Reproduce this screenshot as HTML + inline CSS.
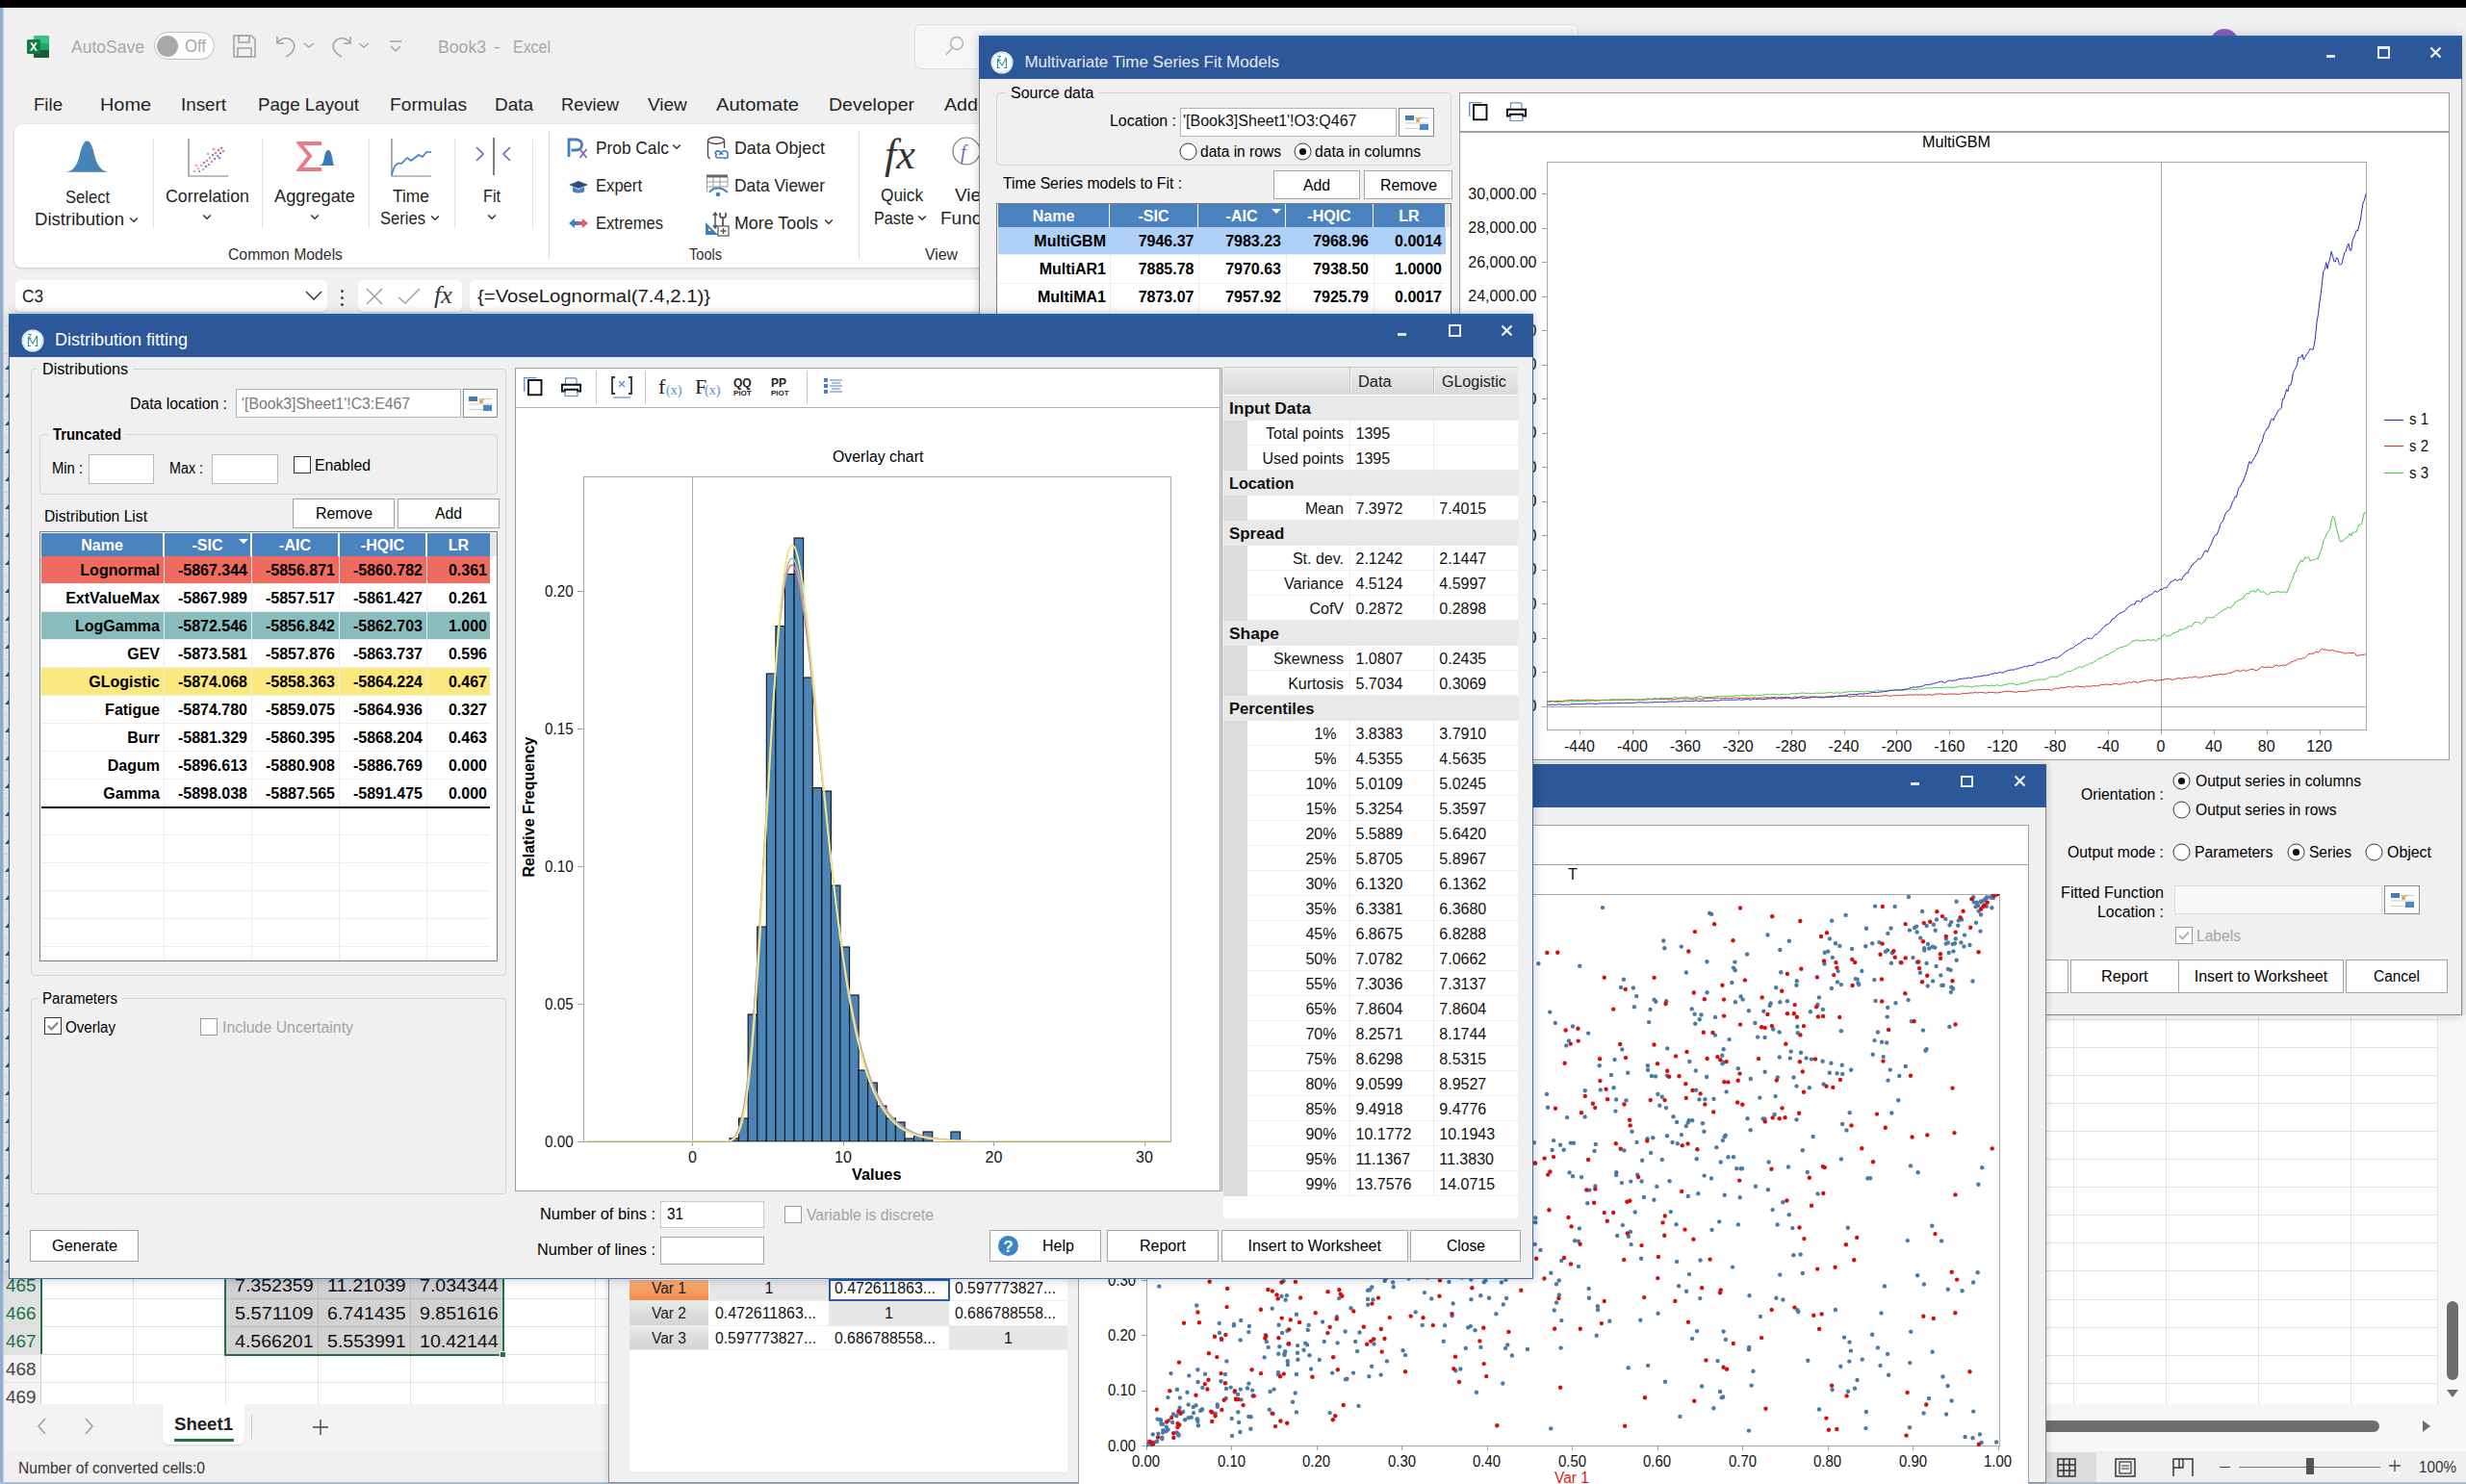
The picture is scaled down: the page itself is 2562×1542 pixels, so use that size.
<!DOCTYPE html><html><head><meta charset="utf-8"><title>page</title><style>
html,body{margin:0;padding:0;}
body{width:2562px;height:1542px;position:relative;overflow:hidden;background:#f0f0f0;font-family:"Liberation Sans",sans-serif;}
div,svg{position:absolute;}
</style></head><body>
<div style="left:0px;top:0px;width:2562px;height:8px;background:#000;"></div>
<div style="left:0px;top:8px;width:3px;height:1534px;background:#8db0d4;"></div>
<div style="left:3px;top:8px;width:1px;height:1534px;background:#c9ced4;"></div>
<div style="left:0px;top:1540px;width:2562px;height:2px;background:#a9bfd6;"></div>
<svg style="left:27px;top:36px;" width="25" height="25" viewBox="0 0 25 25"><rect x="8" y="1" width="16" height="23" rx="2" fill="#21a366"/>
<rect x="8" y="1" width="16" height="8" rx="1" fill="#33c481"/>
<rect x="8" y="16" width="16" height="8" rx="1" fill="#185c37"/>
<rect x="1" y="5" width="14" height="15" rx="1.5" fill="#107c41"/>
<path d="M4.2 8.2 L7 12.5 L4 16.8 H6.2 L8 13.9 L9.8 16.8 H12 L9 12.5 L11.8 8.2 H9.7 L8 11 L6.3 8.2 Z" fill="#fff"/></svg>
<div style="left:74.00px;top:37.82px;font-size:19px;line-height:22.80px;color:#a8a8a8;white-space:pre;transform:scaleX(0.9224);transform-origin:0 0;">AutoSave</div>
<div style="left:160px;top:33px;width:63px;height:29px;background:#fff;border:1.5px solid #bdbdbd;box-sizing:border-box;border-radius:15px;"></div>
<div style="left:163px;top:37px;width:22px;height:22px;border-radius:11px;background:#a8a8a8;"></div>
<div style="left:192.00px;top:38.41px;font-size:18px;line-height:21.60px;color:#a8a8a8;white-space:pre;transform:scaleX(0.9291);transform-origin:0 0;">Off</div>
<svg style="left:240px;top:34px;" width="28" height="28" viewBox="0 0 28 28"><path d="M3 3 H21 L25 7 V25 H3 Z" fill="none" stroke="#a5a5a5" stroke-width="1.6"/>
<rect x="8" y="3" width="11" height="7" fill="none" stroke="#a5a5a5" stroke-width="1.6"/>
<rect x="7" y="16" width="14" height="9" fill="none" stroke="#a5a5a5" stroke-width="1.6"/></svg>
<svg style="left:283px;top:34px;" width="28" height="28" viewBox="0 0 28 28"><path d="M5 4 V11 H12" fill="none" stroke="#a5a5a5" stroke-width="1.6"/>
<path d="M5.5 10.5 C9 5 17 4 21 9 C25 14 22 21 14 25" fill="none" stroke="#a5a5a5" stroke-width="1.6"/></svg>
<svg style="left:314px;top:42px;" width="14" height="10" viewBox="0 0 14 10"><path d="M2 3 L7 7 L12 3" fill="none" stroke="#a5a5a5" stroke-width="1.5"/></svg>
<svg style="left:341px;top:34px;" width="28" height="28" viewBox="0 0 28 28"><path d="M23 4 V11 H16" fill="none" stroke="#a5a5a5" stroke-width="1.6"/>
<path d="M22.5 10.5 C19 5 11 4 7 9 C3 14 6 21 14 25" fill="none" stroke="#a5a5a5" stroke-width="1.6"/></svg>
<svg style="left:371px;top:42px;" width="14" height="10" viewBox="0 0 14 10"><path d="M2 3 L7 7 L12 3" fill="none" stroke="#a5a5a5" stroke-width="1.5"/></svg>
<svg style="left:403px;top:41px;" width="16" height="14" viewBox="0 0 16 14"><path d="M2 2 H14" stroke="#a5a5a5" stroke-width="1.5"/><path d="M3 7 L8 12 L13 7" fill="none" stroke="#a5a5a5" stroke-width="1.5"/></svg>
<div style="left:455.00px;top:37.82px;font-size:19px;line-height:22.80px;color:#a8a8a8;white-space:pre;transform:scaleX(0.9281);transform-origin:0 0;">Book3</div>
<div style="left:513.00px;top:37.82px;font-size:19px;line-height:22.80px;color:#a8a8a8;white-space:pre;transform:scaleX(1.1064);transform-origin:0 0;">-</div>
<div style="left:533.00px;top:37.82px;font-size:19px;line-height:22.80px;color:#a8a8a8;white-space:pre;transform:scaleX(0.8394);transform-origin:0 0;">Excel</div>
<div style="left:950px;top:25px;width:690px;height:47px;background:#f6f6f6;border:1px solid #dedede;box-sizing:border-box;border-radius:7px;"></div>
<svg style="left:980px;top:36px;" width="24" height="24" viewBox="0 0 24 24"><circle cx="14" cy="9" r="6.5" fill="none" stroke="#b0b0b0" stroke-width="1.4"/><path d="M9.5 13.5 L3 21" stroke="#b0b0b0" stroke-width="1.4"/></svg>
<div style="left:2296px;top:30px;width:30px;height:30px;border-radius:15px;background:#8e5dbd;"></div>
<div style="left:35.00px;top:97.82px;font-size:19px;line-height:22.80px;color:#242424;white-space:pre;transform:scaleX(0.9798);transform-origin:0 0;">File</div>
<div style="left:104.00px;top:97.82px;font-size:19px;line-height:22.80px;color:#242424;white-space:pre;transform:scaleX(1.0457);transform-origin:0 0;">Home</div>
<div style="left:188.00px;top:97.82px;font-size:19px;line-height:22.80px;color:#242424;white-space:pre;transform:scaleX(0.9891);transform-origin:0 0;">Insert</div>
<div style="left:268.00px;top:97.82px;font-size:19px;line-height:22.80px;color:#242424;white-space:pre;transform:scaleX(0.9841);transform-origin:0 0;">Page Layout</div>
<div style="left:405.00px;top:97.82px;font-size:19px;line-height:22.80px;color:#242424;white-space:pre;transform:scaleX(1.0103);transform-origin:0 0;">Formulas</div>
<div style="left:514.00px;top:97.82px;font-size:19px;line-height:22.80px;color:#242424;white-space:pre;">Data</div>
<div style="left:583.00px;top:97.82px;font-size:19px;line-height:22.80px;color:#242424;white-space:pre;transform:scaleX(0.9631);transform-origin:0 0;">Review</div>
<div style="left:673.00px;top:97.82px;font-size:19px;line-height:22.80px;color:#242424;white-space:pre;">View</div>
<div style="left:744.00px;top:97.82px;font-size:19px;line-height:22.80px;color:#242424;white-space:pre;transform:scaleX(1.0575);transform-origin:0 0;">Automate</div>
<div style="left:861.00px;top:97.82px;font-size:19px;line-height:22.80px;color:#242424;white-space:pre;transform:scaleX(1.0276);transform-origin:0 0;">Developer</div>
<div style="left:981.00px;top:97.82px;font-size:19px;line-height:22.80px;color:#242424;white-space:pre;transform:scaleX(1.0353);transform-origin:0 0;">Add</div>
<div style="left:15px;top:129px;width:1100px;height:149px;background:#fff;border-radius:8px;box-shadow:0 1px 3px rgba(0,0,0,0.18);"></div>
<svg style="left:68px;top:145px;" width="46" height="35" viewBox="0 0 46 35"><path d="M0.5 33.7 C7 33 11 29 14 19 C16.5 9 18.5 1.5 22.5 1.5 C26.5 1.5 28.5 9 31 19 C34 29 38 33 45.5 33.7 Z" fill="#4683b8"/></svg>
<div style="left:68.00px;top:193.82px;font-size:19px;line-height:22.80px;color:#242424;white-space:pre;transform:scaleX(0.8711);transform-origin:0 0;">Select</div>
<div style="left:36.00px;top:216.82px;font-size:19px;line-height:22.80px;color:#242424;white-space:pre;transform:scaleX(0.9785);transform-origin:0 0;">Distribution</div>
<svg style="left:134px;top:224.5px;" width="10" height="7" viewBox="0 0 10 7"><path d="M1.2 1.5 L5 5.2 L8.8 1.5" fill="none" stroke="#333" stroke-width="1.6"/></svg>
<div style="left:159px;top:145px;width:1px;height:92px;background:#e1e1e1;"></div>
<svg style="left:194px;top:142px;" width="46" height="44" viewBox="0 0 46 44"><path d="M2 2 V41 H43" fill="none" stroke="#7a7a7a" stroke-width="1.2"/><circle cx="8" cy="36" r="1.3" fill="#e8a0a0"/><circle cx="12" cy="33" r="1.3" fill="#f0b080"/><circle cx="15" cy="30" r="1.3" fill="#9ab8e0"/><circle cx="18" cy="27" r="1.3" fill="#e07070"/><circle cx="21" cy="25" r="1.3" fill="#80a8d8"/><circle cx="24" cy="22" r="1.3" fill="#e89090"/><circle cx="27" cy="19" r="1.3" fill="#7098d0"/><circle cx="30" cy="17" r="1.3" fill="#e07a7a"/><circle cx="33" cy="14" r="1.3" fill="#6a90c8"/><circle cx="36" cy="12" r="1.3" fill="#d87070"/><circle cx="13" cy="36" r="1.3" fill="#80a0d0"/><circle cx="17" cy="34" r="1.3" fill="#e89a9a"/><circle cx="20" cy="31" r="1.3" fill="#6c94cc"/><circle cx="23" cy="29" r="1.3" fill="#e08080"/><circle cx="26" cy="26" r="1.3" fill="#8ab0dc"/><circle cx="29" cy="23" r="1.3" fill="#e07070"/><circle cx="32" cy="20" r="1.3" fill="#7aa0d4"/><circle cx="35" cy="17" r="1.3" fill="#d86060"/><circle cx="38" cy="15" r="1.3" fill="#80a8d8"/><circle cx="10" cy="30" r="1.3" fill="#f0a0a0"/><circle cx="22" cy="18" r="1.3" fill="#9ab8e0"/><circle cx="28" cy="13" r="1.3" fill="#e09090"/><circle cx="34" cy="22" r="1.3" fill="#6a94c8"/></svg>
<div style="left:172.00px;top:192.82px;font-size:19px;line-height:22.80px;color:#242424;white-space:pre;transform:scaleX(0.9362);transform-origin:0 0;">Correlation</div>
<svg style="left:210px;top:221.5px;" width="10" height="7" viewBox="0 0 10 7"><path d="M1.2 1.5 L5 5.2 L8.8 1.5" fill="none" stroke="#333" stroke-width="1.6"/></svg>
<div style="left:272px;top:145px;width:1px;height:92px;background:#e1e1e1;"></div>
<svg style="left:308px;top:146px;" width="40" height="34" viewBox="0 0 40 34"><path d="M26 3 H3 L14 16 L3 30 H26" fill="none" stroke="#e57d86" stroke-width="4"/><path d="M22 26 C28 26 28 22 29 17 C30 12 31 10 33 10 C35 10 36 12 37 17 C38 22 38 26 40 26 Z" fill="#3a7ab8"/></svg>
<div style="left:285.00px;top:192.82px;font-size:19px;line-height:22.80px;color:#242424;white-space:pre;transform:scaleX(0.9580);transform-origin:0 0;">Aggregate</div>
<svg style="left:322px;top:221.5px;" width="10" height="7" viewBox="0 0 10 7"><path d="M1.2 1.5 L5 5.2 L8.8 1.5" fill="none" stroke="#333" stroke-width="1.6"/></svg>
<div style="left:383px;top:145px;width:1px;height:92px;background:#e1e1e1;"></div>
<svg style="left:405px;top:142px;" width="46" height="44" viewBox="0 0 46 44"><path d="M2 2 V41 H43" fill="none" stroke="#7a7a7a" stroke-width="1.2"/><path d="M2 40 C4 30 8 26 12 28 L18 22 L22 25 L30 19 L34 21 L38 16 L43 16" fill="none" stroke="#3f7fbf" stroke-width="1.6"/></svg>
<div style="left:408.00px;top:192.82px;font-size:19px;line-height:22.80px;color:#242424;white-space:pre;transform:scaleX(0.9153);transform-origin:0 0;">Time</div>
<div style="left:395.00px;top:215.82px;font-size:19px;line-height:22.80px;color:#242424;white-space:pre;transform:scaleX(0.8727);transform-origin:0 0;">Series</div>
<svg style="left:446.5px;top:223.1px;" width="10" height="7" viewBox="0 0 10 7"><path d="M1.2 1.5 L5 5.2 L8.8 1.5" fill="none" stroke="#333" stroke-width="1.6"/></svg>
<div style="left:472px;top:145px;width:1px;height:92px;background:#e1e1e1;"></div>
<svg style="left:492px;top:141px;" width="42" height="44" viewBox="0 0 42 44"><path d="M3 12 L10 19 L3 26" fill="none" stroke="#7b5cb8" stroke-width="1.6"/><path d="M21 2 V41" stroke="#4a4a4a" stroke-width="1.4"/><path d="M38 12 L31 19 L38 26" fill="none" stroke="#7b5cb8" stroke-width="1.6"/></svg>
<div style="left:502.00px;top:192.82px;font-size:19px;line-height:22.80px;color:#242424;white-space:pre;transform:scaleX(0.8528);transform-origin:0 0;">Fit</div>
<svg style="left:506px;top:221.5px;" width="10" height="7" viewBox="0 0 10 7"><path d="M1.2 1.5 L5 5.2 L8.8 1.5" fill="none" stroke="#333" stroke-width="1.6"/></svg>
<div style="left:553px;top:145px;width:1px;height:92px;background:#e1e1e1;"></div>
<div style="left:570px;top:136px;width:1px;height:133px;background:#dcdcdc;"></div>
<div style="left:237.00px;top:254.58px;font-size:16px;line-height:19.20px;color:#303030;white-space:pre;transform:scaleX(0.9840);transform-origin:0 0;">Common Models</div>
<svg style="left:588px;top:142px;" width="26" height="24" viewBox="0 0 26 24"><path d="M3 21 V3 H10 C15 3 16.5 6 16.5 8.5 C16.5 11 15 14 10 14 H5.5" fill="none" stroke="#3f7fbf" stroke-width="2.8"/><path d="M14.5 13 L21.5 22 M21.5 13 L14.5 22" stroke="#8a5cc0" stroke-width="1.8"/></svg>
<div style="left:619.00px;top:142.82px;font-size:19px;line-height:22.80px;color:#242424;white-space:pre;transform:scaleX(0.9110);transform-origin:0 0;">Prob Calc</div>
<svg style="left:697.5px;top:148.5px;" width="10" height="7" viewBox="0 0 10 7"><path d="M1.2 1.5 L5 5.2 L8.8 1.5" fill="none" stroke="#333" stroke-width="1.6"/></svg>
<svg style="left:589px;top:186px;" width="24" height="16" viewBox="0 0 24 16"><path d="M2 6 L12 2 L22 6 L12 10 Z" fill="#2f4f7f"/><path d="M6 8 V13 C9 15 15 15 18 13 V8 L12 11 Z" fill="#4a7fc0"/></svg>
<div style="left:619.00px;top:181.82px;font-size:19px;line-height:22.80px;color:#242424;white-space:pre;transform:scaleX(0.8741);transform-origin:0 0;">Expert</div>
<svg style="left:589px;top:224px;" width="24" height="16" viewBox="0 0 24 16"><path d="M2 8 L8 3 V6 H12 V10 H8 V13 Z" fill="#3f7fbf"/><path d="M22 8 L16 3 V6 H12 V10 H16 V13 Z" fill="#e05a6a"/></svg>
<div style="left:619.00px;top:220.82px;font-size:19px;line-height:22.80px;color:#242424;white-space:pre;transform:scaleX(0.8724);transform-origin:0 0;">Extremes</div>
<svg style="left:734px;top:141px;" width="25" height="26" viewBox="0 0 25 26"><ellipse cx="10" cy="5" rx="8.5" ry="3.5" fill="none" stroke="#444" stroke-width="1.3"/><path d="M1.5 5 V21 C1.5 22 2 23 4 23.5 M18.5 5 V13" fill="none" stroke="#444" stroke-width="1.3"/><path d="M9 19 C9 15 14 15 15 18 C17 14 23 16 22 20 C23 23 20 24 18 23 H12 C9 23 9 20 11 19" fill="none" stroke="#3f7fbf" stroke-width="1.6"/><path d="M13 20 C14 18 17 18 17 20" fill="none" stroke="#3f7fbf" stroke-width="1.4"/></svg>
<div style="left:763.00px;top:142.82px;font-size:19px;line-height:22.80px;color:#242424;white-space:pre;transform:scaleX(0.9370);transform-origin:0 0;">Data Object</div>
<svg style="left:733px;top:180px;" width="25" height="26" viewBox="0 0 25 26"><rect x="1" y="1.5" width="22" height="3" fill="#666"/><path d="M1.5 4 V19 M23 4 V14 M1.5 9 H23 M1.5 14 H23 M8 4 V16 M15 4 V16" fill="none" stroke="#999" stroke-width="1"/><path d="M4 20 C8 14 17 14 23 20" fill="none" stroke="#3f7fbf" stroke-width="1.8"/><circle cx="13" cy="22" r="2.3" fill="#3f7fbf"/></svg>
<div style="left:763.00px;top:181.82px;font-size:19px;line-height:22.80px;color:#242424;white-space:pre;transform:scaleX(0.9113);transform-origin:0 0;">Data Viewer</div>
<svg style="left:731px;top:218px;" width="28" height="28" viewBox="0 0 28 28"><path d="M2 26 V13 L15 26 Z" fill="#3f7fbf"/><path d="M5 22 V19 L8 22 Z" fill="#fff"/><path d="M12 3 V19 M10 6 L12 3 L14 6 M10 16 L12 19 L14 16" fill="none" stroke="#555" stroke-width="1.5"/><path d="M20 9 V17 M17 3 V6 C17 9 23 9 23 6 V3" fill="none" stroke="#555" stroke-width="1.8"/><rect x="15" y="17" width="11" height="10" fill="#fff" stroke="#555" stroke-width="1.2"/><path d="M20.5 19 V25 M17.5 22 H23.5" stroke="#555" stroke-width="1.5"/></svg>
<div style="left:763.00px;top:220.82px;font-size:19px;line-height:22.80px;color:#242424;white-space:pre;transform:scaleX(0.9397);transform-origin:0 0;">More Tools</div>
<svg style="left:855.5px;top:226.5px;" width="10" height="7" viewBox="0 0 10 7"><path d="M1.2 1.5 L5 5.2 L8.8 1.5" fill="none" stroke="#333" stroke-width="1.6"/></svg>
<div style="left:716.00px;top:254.58px;font-size:16px;line-height:19.20px;color:#303030;white-space:pre;transform:scaleX(0.9103);transform-origin:0 0;">Tools</div>
<div style="left:892px;top:136px;width:1px;height:133px;background:#dcdcdc;"></div>
<div style="left:919px;top:136px;font-family:'Liberation Serif';font-style:italic;font-size:44px;line-height:50px;color:#333;">fx</div>
<div style="left:915.00px;top:191.82px;font-size:19px;line-height:22.80px;color:#242424;white-space:pre;transform:scaleX(0.9060);transform-origin:0 0;">Quick</div>
<div style="left:908.00px;top:215.82px;font-size:19px;line-height:22.80px;color:#242424;white-space:pre;transform:scaleX(0.8542);transform-origin:0 0;">Paste</div>
<svg style="left:953px;top:222.5px;" width="10" height="7" viewBox="0 0 10 7"><path d="M1.2 1.5 L5 5.2 L8.8 1.5" fill="none" stroke="#333" stroke-width="1.6"/></svg>
<svg style="left:988px;top:141px;" width="32" height="36" viewBox="0 0 32 36"><circle cx="16" cy="16" r="14" fill="#fff" stroke="#777" stroke-width="1.2"/><text x="10" y="24" font-family="Liberation Serif" font-style="italic" font-size="20" fill="#7a5cc0">f</text></svg>
<div style="left:992.00px;top:191.82px;font-size:19px;line-height:22.80px;color:#242424;white-space:pre;">View</div>
<div style="left:977.00px;top:215.82px;font-size:19px;line-height:22.80px;color:#242424;white-space:pre;">Function</div>
<div style="left:961.00px;top:254.58px;font-size:16px;line-height:19.20px;color:#303030;white-space:pre;transform:scaleX(0.9886);transform-origin:0 0;">View</div>
<div style="left:16px;top:291px;width:324px;height:33px;background:#fff;border-radius:5px;box-shadow:0 1px 1px rgba(0,0,0,0.15);"></div>
<div style="left:23.00px;top:296.82px;font-size:19px;line-height:22.80px;color:#1a1a1a;white-space:pre;transform:scaleX(0.9058);transform-origin:0 0;">C3</div>
<svg style="left:316px;top:300px;" width="20" height="14" viewBox="0 0 20 14"><path d="M2 3 L10 11 L18 3" fill="none" stroke="#444" stroke-width="1.6"/></svg>
<div style="left:354px;top:301px;width:3px;height:3px;border-radius:2px;background:#444;"></div>
<div style="left:354px;top:308px;width:3px;height:3px;border-radius:2px;background:#444;"></div>
<div style="left:354px;top:315px;width:3px;height:3px;border-radius:2px;background:#444;"></div>
<div style="left:372px;top:291px;width:108px;height:33px;background:#fff;border-radius:5px;box-shadow:0 1px 1px rgba(0,0,0,0.15);"></div>
<svg style="left:379px;top:298px;" width="22" height="20" viewBox="0 0 22 20"><path d="M2 2 L18 18 M18 2 L2 18" stroke="#a0a0a0" stroke-width="1.5"/></svg>
<svg style="left:412px;top:298px;" width="26" height="20" viewBox="0 0 26 20"><path d="M2 11 L9 17 L24 2" fill="none" stroke="#a0a0a0" stroke-width="1.5"/></svg>
<div style="left:451px;top:291px;font-family:'Liberation Serif';font-style:italic;font-size:26px;line-height:32px;color:#333;">fx</div>
<div style="left:488px;top:291px;width:1100px;height:33px;background:#fff;border-radius:5px;box-shadow:0 1px 1px rgba(0,0,0,0.15);"></div>
<div style="left:496.00px;top:296.82px;font-size:19px;line-height:22.80px;color:#1a1a1a;white-space:pre;transform:scaleX(1.0681);transform-origin:0 0;">{=VoseLognormal(7.4,2.1)}</div>
<div style="left:4px;top:330px;width:628px;height:1129px;background:#fff;"></div>
<div style="left:4px;top:330px;width:38px;height:1129px;background:#f3f3f3;"></div>
<div style="left:4px;top:338px;width:628px;height:1px;background:#e1e1e1;"></div>
<div style="left:4px;top:367px;width:628px;height:1px;background:#e1e1e1;"></div>
<div style="left:4px;top:396px;width:628px;height:1px;background:#e1e1e1;"></div>
<div style="left:4px;top:425px;width:628px;height:1px;background:#e1e1e1;"></div>
<div style="left:4px;top:454px;width:628px;height:1px;background:#e1e1e1;"></div>
<div style="left:4px;top:482px;width:628px;height:1px;background:#e1e1e1;"></div>
<div style="left:4px;top:511px;width:628px;height:1px;background:#e1e1e1;"></div>
<div style="left:4px;top:540px;width:628px;height:1px;background:#e1e1e1;"></div>
<div style="left:4px;top:569px;width:628px;height:1px;background:#e1e1e1;"></div>
<div style="left:4px;top:598px;width:628px;height:1px;background:#e1e1e1;"></div>
<div style="left:4px;top:627px;width:628px;height:1px;background:#e1e1e1;"></div>
<div style="left:4px;top:656px;width:628px;height:1px;background:#e1e1e1;"></div>
<div style="left:4px;top:685px;width:628px;height:1px;background:#e1e1e1;"></div>
<div style="left:4px;top:714px;width:628px;height:1px;background:#e1e1e1;"></div>
<div style="left:4px;top:742px;width:628px;height:1px;background:#e1e1e1;"></div>
<div style="left:4px;top:771px;width:628px;height:1px;background:#e1e1e1;"></div>
<div style="left:4px;top:800px;width:628px;height:1px;background:#e1e1e1;"></div>
<div style="left:4px;top:829px;width:628px;height:1px;background:#e1e1e1;"></div>
<div style="left:4px;top:858px;width:628px;height:1px;background:#e1e1e1;"></div>
<div style="left:4px;top:887px;width:628px;height:1px;background:#e1e1e1;"></div>
<div style="left:4px;top:916px;width:628px;height:1px;background:#e1e1e1;"></div>
<div style="left:4px;top:945px;width:628px;height:1px;background:#e1e1e1;"></div>
<div style="left:4px;top:974px;width:628px;height:1px;background:#e1e1e1;"></div>
<div style="left:4px;top:1003px;width:628px;height:1px;background:#e1e1e1;"></div>
<div style="left:4px;top:1032px;width:628px;height:1px;background:#e1e1e1;"></div>
<div style="left:4px;top:1060px;width:628px;height:1px;background:#e1e1e1;"></div>
<div style="left:4px;top:1089px;width:628px;height:1px;background:#e1e1e1;"></div>
<div style="left:4px;top:1118px;width:628px;height:1px;background:#e1e1e1;"></div>
<div style="left:4px;top:1147px;width:628px;height:1px;background:#e1e1e1;"></div>
<div style="left:4px;top:1176px;width:628px;height:1px;background:#e1e1e1;"></div>
<div style="left:4px;top:1205px;width:628px;height:1px;background:#e1e1e1;"></div>
<div style="left:4px;top:1234px;width:628px;height:1px;background:#e1e1e1;"></div>
<div style="left:4px;top:1263px;width:628px;height:1px;background:#e1e1e1;"></div>
<div style="left:4px;top:1292px;width:628px;height:1px;background:#e1e1e1;"></div>
<div style="left:4px;top:1320px;width:628px;height:1px;background:#e1e1e1;"></div>
<div style="left:4px;top:1349px;width:628px;height:1px;background:#e1e1e1;"></div>
<div style="left:4px;top:1378px;width:628px;height:1px;background:#e1e1e1;"></div>
<div style="left:4px;top:1407px;width:628px;height:1px;background:#e1e1e1;"></div>
<div style="left:4px;top:1436px;width:628px;height:1px;background:#e1e1e1;"></div>
<div style="left:138px;top:330px;width:1px;height:1129px;background:#e1e1e1;"></div>
<div style="left:234px;top:330px;width:1px;height:1129px;background:#e1e1e1;"></div>
<div style="left:330px;top:330px;width:1px;height:1129px;background:#e1e1e1;"></div>
<div style="left:426px;top:330px;width:1px;height:1129px;background:#e1e1e1;"></div>
<div style="left:522px;top:330px;width:1px;height:1129px;background:#e1e1e1;"></div>
<div style="left:618px;top:330px;width:1px;height:1129px;background:#e1e1e1;"></div>
<div style="left:42px;top:330px;width:1px;height:1129px;background:#d0d0d0;"></div>
<svg style="left:5px;top:377.6px;" width="5" height="6" viewBox="0 0 5 6"><path d="M5 0 V6 H0 Z" fill="#2b5a8a"/></svg>
<svg style="left:5px;top:406.6px;" width="5" height="6" viewBox="0 0 5 6"><path d="M5 0 V6 H0 Z" fill="#2b5a8a"/></svg>
<svg style="left:5px;top:435.6px;" width="5" height="6" viewBox="0 0 5 6"><path d="M5 0 V6 H0 Z" fill="#2b5a8a"/></svg>
<svg style="left:5px;top:464.6px;" width="5" height="6" viewBox="0 0 5 6"><path d="M5 0 V6 H0 Z" fill="#2b5a8a"/></svg>
<svg style="left:5px;top:493.6px;" width="5" height="6" viewBox="0 0 5 6"><path d="M5 0 V6 H0 Z" fill="#2b5a8a"/></svg>
<svg style="left:5px;top:522.6px;" width="5" height="6" viewBox="0 0 5 6"><path d="M5 0 V6 H0 Z" fill="#2b5a8a"/></svg>
<svg style="left:5px;top:551.6px;" width="5" height="6" viewBox="0 0 5 6"><path d="M5 0 V6 H0 Z" fill="#2b5a8a"/></svg>
<svg style="left:5px;top:580.6px;" width="5" height="6" viewBox="0 0 5 6"><path d="M5 0 V6 H0 Z" fill="#2b5a8a"/></svg>
<svg style="left:5px;top:609.6px;" width="5" height="6" viewBox="0 0 5 6"><path d="M5 0 V6 H0 Z" fill="#2b5a8a"/></svg>
<svg style="left:5px;top:638.6px;" width="5" height="6" viewBox="0 0 5 6"><path d="M5 0 V6 H0 Z" fill="#2b5a8a"/></svg>
<svg style="left:5px;top:667.6px;" width="5" height="6" viewBox="0 0 5 6"><path d="M5 0 V6 H0 Z" fill="#2b5a8a"/></svg>
<svg style="left:5px;top:696.6px;" width="5" height="6" viewBox="0 0 5 6"><path d="M5 0 V6 H0 Z" fill="#2b5a8a"/></svg>
<svg style="left:5px;top:725.6px;" width="5" height="6" viewBox="0 0 5 6"><path d="M5 0 V6 H0 Z" fill="#2b5a8a"/></svg>
<svg style="left:5px;top:754.6px;" width="5" height="6" viewBox="0 0 5 6"><path d="M5 0 V6 H0 Z" fill="#2b5a8a"/></svg>
<svg style="left:5px;top:783.6px;" width="5" height="6" viewBox="0 0 5 6"><path d="M5 0 V6 H0 Z" fill="#2b5a8a"/></svg>
<svg style="left:5px;top:812.6px;" width="5" height="6" viewBox="0 0 5 6"><path d="M5 0 V6 H0 Z" fill="#2b5a8a"/></svg>
<svg style="left:5px;top:841.6px;" width="5" height="6" viewBox="0 0 5 6"><path d="M5 0 V6 H0 Z" fill="#2b5a8a"/></svg>
<svg style="left:5px;top:870.6px;" width="5" height="6" viewBox="0 0 5 6"><path d="M5 0 V6 H0 Z" fill="#2b5a8a"/></svg>
<svg style="left:5px;top:899.6px;" width="5" height="6" viewBox="0 0 5 6"><path d="M5 0 V6 H0 Z" fill="#2b5a8a"/></svg>
<svg style="left:5px;top:928.6px;" width="5" height="6" viewBox="0 0 5 6"><path d="M5 0 V6 H0 Z" fill="#2b5a8a"/></svg>
<svg style="left:5px;top:957.6px;" width="5" height="6" viewBox="0 0 5 6"><path d="M5 0 V6 H0 Z" fill="#2b5a8a"/></svg>
<svg style="left:5px;top:986.6px;" width="5" height="6" viewBox="0 0 5 6"><path d="M5 0 V6 H0 Z" fill="#2b5a8a"/></svg>
<svg style="left:5px;top:1015.6px;" width="5" height="6" viewBox="0 0 5 6"><path d="M5 0 V6 H0 Z" fill="#2b5a8a"/></svg>
<svg style="left:5px;top:1044.6px;" width="5" height="6" viewBox="0 0 5 6"><path d="M5 0 V6 H0 Z" fill="#2b5a8a"/></svg>
<svg style="left:5px;top:1073.6px;" width="5" height="6" viewBox="0 0 5 6"><path d="M5 0 V6 H0 Z" fill="#2b5a8a"/></svg>
<svg style="left:5px;top:1102.6px;" width="5" height="6" viewBox="0 0 5 6"><path d="M5 0 V6 H0 Z" fill="#2b5a8a"/></svg>
<svg style="left:5px;top:1131.6px;" width="5" height="6" viewBox="0 0 5 6"><path d="M5 0 V6 H0 Z" fill="#2b5a8a"/></svg>
<svg style="left:5px;top:1160.6px;" width="5" height="6" viewBox="0 0 5 6"><path d="M5 0 V6 H0 Z" fill="#2b5a8a"/></svg>
<svg style="left:5px;top:1189.6px;" width="5" height="6" viewBox="0 0 5 6"><path d="M5 0 V6 H0 Z" fill="#2b5a8a"/></svg>
<svg style="left:5px;top:1218.6px;" width="5" height="6" viewBox="0 0 5 6"><path d="M5 0 V6 H0 Z" fill="#2b5a8a"/></svg>
<svg style="left:5px;top:1247.6px;" width="5" height="6" viewBox="0 0 5 6"><path d="M5 0 V6 H0 Z" fill="#2b5a8a"/></svg>
<svg style="left:5px;top:1276.6px;" width="5" height="6" viewBox="0 0 5 6"><path d="M5 0 V6 H0 Z" fill="#2b5a8a"/></svg>
<svg style="left:5px;top:1305.6px;" width="5" height="6" viewBox="0 0 5 6"><path d="M5 0 V6 H0 Z" fill="#2b5a8a"/></svg>
<div style="left:4px;top:1320px;width:38px;height:87px;background:#e0e0e0;"></div>
<div style="left:42px;top:1320px;width:2px;height:87px;background:#217346;"></div>
<div style="left:234px;top:1320px;width:288px;height:87px;background:#d2d2d2;"></div>
<div style="left:234px;top:1349px;width:288px;height:1px;background:#bcbcbc;"></div>
<div style="left:234px;top:1378px;width:288px;height:1px;background:#bcbcbc;"></div>
<div style="left:330px;top:1320px;width:1px;height:87px;background:#bcbcbc;"></div>
<div style="left:426px;top:1320px;width:1px;height:87px;background:#bcbcbc;"></div>
<div style="left:233px;top:1318px;width:291px;height:91px;border:2px solid #217346;box-sizing:border-box;"></div>
<div style="left:519px;top:1404px;width:7px;height:7px;background:#217346;border:1px solid #fff;box-sizing:border-box;"></div>
<div style="left:6.00px;top:1325.22px;font-size:19px;line-height:22.80px;color:#217346;white-space:pre;transform:scaleX(0.9936);transform-origin:0 0;">465</div>
<div style="left:244.40px;top:1325.22px;font-size:19px;line-height:22.80px;color:#111;white-space:pre;transform:scaleX(1.0297);transform-origin:0 0;">7.352359</div>
<div style="left:340.40px;top:1325.22px;font-size:19px;line-height:22.80px;color:#111;white-space:pre;transform:scaleX(1.0483);transform-origin:0 0;">11.21039</div>
<div style="left:436.40px;top:1325.22px;font-size:19px;line-height:22.80px;color:#111;white-space:pre;transform:scaleX(1.0297);transform-origin:0 0;">7.034344</div>
<div style="left:6.00px;top:1354.12px;font-size:19px;line-height:22.80px;color:#217346;white-space:pre;transform:scaleX(0.9936);transform-origin:0 0;">466</div>
<div style="left:244.40px;top:1354.12px;font-size:19px;line-height:22.80px;color:#111;white-space:pre;transform:scaleX(1.0483);transform-origin:0 0;">5.571109</div>
<div style="left:340.40px;top:1354.12px;font-size:19px;line-height:22.80px;color:#111;white-space:pre;transform:scaleX(1.0297);transform-origin:0 0;">6.741435</div>
<div style="left:436.40px;top:1354.12px;font-size:19px;line-height:22.80px;color:#111;white-space:pre;transform:scaleX(1.0297);transform-origin:0 0;">9.851616</div>
<div style="left:6.00px;top:1383.02px;font-size:19px;line-height:22.80px;color:#217346;white-space:pre;transform:scaleX(0.9936);transform-origin:0 0;">467</div>
<div style="left:244.40px;top:1383.02px;font-size:19px;line-height:22.80px;color:#111;white-space:pre;transform:scaleX(1.0297);transform-origin:0 0;">4.566201</div>
<div style="left:340.40px;top:1383.02px;font-size:19px;line-height:22.80px;color:#111;white-space:pre;transform:scaleX(1.0297);transform-origin:0 0;">5.553991</div>
<div style="left:436.40px;top:1383.02px;font-size:19px;line-height:22.80px;color:#111;white-space:pre;transform:scaleX(1.0297);transform-origin:0 0;">10.42144</div>
<div style="left:6.00px;top:1411.92px;font-size:19px;line-height:22.80px;color:#444;white-space:pre;transform:scaleX(0.9936);transform-origin:0 0;">468</div>
<div style="left:6.00px;top:1440.82px;font-size:19px;line-height:22.80px;color:#444;white-space:pre;transform:scaleX(0.9936);transform-origin:0 0;">469</div>
<div style="left:4px;top:1459px;width:628px;height:49px;background:#f3f3f3;"></div>
<svg style="left:37px;top:1472px;" width="14" height="20" viewBox="0 0 14 20"><path d="M10 2 L3 10 L10 18" fill="none" stroke="#9a9a9a" stroke-width="1.4"/></svg>
<svg style="left:85px;top:1472px;" width="14" height="20" viewBox="0 0 14 20"><path d="M4 2 L11 10 L4 18" fill="none" stroke="#9a9a9a" stroke-width="1.4"/></svg>
<div style="left:169px;top:1459px;width:85px;height:42px;background:#fff;border-radius:0 0 6px 6px;box-shadow:0 1px 2px rgba(0,0,0,0.12);"></div>
<div style="left:181.00px;top:1468.82px;font-size:19px;line-height:22.80px;color:#222;white-space:pre;font-weight:bold;transform:scaleX(0.9790);transform-origin:0 0;">Sheet1</div>
<div style="left:181px;top:1495px;width:62px;height:3px;background:#217346;"></div>
<div style="left:261px;top:1470px;width:1px;height:25px;background:#c8c8c8;"></div>
<svg style="left:323px;top:1473px;" width="20" height="20" viewBox="0 0 20 20"><path d="M10 2 V18 M2 10 H18" stroke="#444" stroke-width="1.4"/></svg>
<div style="left:4px;top:1508px;width:628px;height:32px;background:#f0f0f0;"></div>
<div style="left:19.00px;top:1515.58px;font-size:16px;line-height:19.20px;color:#333;white-space:pre;transform:scaleX(0.9739);transform-origin:0 0;">Number of converted cells:0</div>
<div style="left:2126px;top:1055px;width:436px;height:404px;background:#fff;"></div>
<div style="left:2126px;top:1059px;width:407px;height:1px;background:#e1e1e1;"></div>
<div style="left:2126px;top:1088px;width:407px;height:1px;background:#e1e1e1;"></div>
<div style="left:2126px;top:1117px;width:407px;height:1px;background:#e1e1e1;"></div>
<div style="left:2126px;top:1146px;width:407px;height:1px;background:#e1e1e1;"></div>
<div style="left:2126px;top:1175px;width:407px;height:1px;background:#e1e1e1;"></div>
<div style="left:2126px;top:1204px;width:407px;height:1px;background:#e1e1e1;"></div>
<div style="left:2126px;top:1233px;width:407px;height:1px;background:#e1e1e1;"></div>
<div style="left:2126px;top:1262px;width:407px;height:1px;background:#e1e1e1;"></div>
<div style="left:2126px;top:1291px;width:407px;height:1px;background:#e1e1e1;"></div>
<div style="left:2126px;top:1320px;width:407px;height:1px;background:#e1e1e1;"></div>
<div style="left:2126px;top:1350px;width:407px;height:1px;background:#e1e1e1;"></div>
<div style="left:2126px;top:1379px;width:407px;height:1px;background:#e1e1e1;"></div>
<div style="left:2126px;top:1408px;width:407px;height:1px;background:#e1e1e1;"></div>
<div style="left:2126px;top:1437px;width:407px;height:1px;background:#e1e1e1;"></div>
<div style="left:2126px;top:1466px;width:407px;height:1px;background:#e1e1e1;"></div>
<div style="left:2154px;top:1055px;width:1px;height:404px;background:#e1e1e1;"></div>
<div style="left:2250px;top:1055px;width:1px;height:404px;background:#e1e1e1;"></div>
<div style="left:2346px;top:1055px;width:1px;height:404px;background:#e1e1e1;"></div>
<div style="left:2442px;top:1055px;width:1px;height:404px;background:#e1e1e1;"></div>
<div style="left:2532px;top:1055px;width:1px;height:404px;background:#e1e1e1;"></div>
<div style="left:2533px;top:1055px;width:29px;height:404px;background:#f7f7f7;"></div>
<div style="left:2542px;top:1352px;width:12px;height:82px;background:#6e6e6e;border-radius:6px;"></div>
<svg style="left:2541px;top:1442px;" width="14" height="12" viewBox="0 0 14 12"><path d="M1 2 H13 L7 10 Z" fill="#6e6e6e"/></svg>
<div style="left:2126px;top:1459px;width:436px;height:49px;background:#f7f7f7;"></div>
<div style="left:2090px;top:1476px;width:382px;height:12px;background:#6e6e6e;border-radius:6px;"></div>
<svg style="left:2515px;top:1475px;" width="12" height="14" viewBox="0 0 12 14"><path d="M2 1 V13 L10 7 Z" fill="#6e6e6e"/></svg>
<div style="left:2126px;top:1508px;width:436px;height:32px;background:#f0f0f0;"></div>
<div style="left:2126px;top:1509px;width:52px;height:31px;background:#dcdcdc;"></div>
<svg style="left:2136px;top:1514px;" width="22" height="22" viewBox="0 0 22 22"><rect x="2" y="2" width="18" height="18" fill="none" stroke="#333" stroke-width="1.5"/><path d="M2 8 H20 M2 14 H20 M8 2 V20 M14 2 V20" stroke="#333" stroke-width="1.5"/></svg>
<svg style="left:2196px;top:1514px;" width="24" height="22" viewBox="0 0 24 22"><rect x="2" y="2" width="20" height="18" fill="none" stroke="#333" stroke-width="1.5"/><rect x="6" y="5" width="12" height="12" fill="none" stroke="#333" stroke-width="1.2"/><path d="M8 9 H16 M8 12 H16" stroke="#333" stroke-width="1.1"/></svg>
<svg style="left:2256px;top:1514px;" width="24" height="22" viewBox="0 0 24 22"><path d="M2 20 V2 H22 V20" fill="none" stroke="#333" stroke-width="1.5"/><path d="M2 11 H12 V2 M8 2 V11" fill="none" stroke="#333" stroke-width="1.4"/></svg>
<div style="left:2306px;top:1524px;width:11px;height:1px;background:#444;"></div>
<div style="left:2326px;top:1524px;width:147px;height:1px;background:#777;"></div>
<div style="left:2396px;top:1515px;width:8px;height:17px;background:#555;"></div>
<svg style="left:2481px;top:1515px;" width="14" height="16" viewBox="0 0 14 16"><path d="M7 2 V14 M1 8 H13" stroke="#444" stroke-width="1.3"/></svg>
<div style="left:2513.00px;top:1515.08px;font-size:16px;line-height:19.20px;color:#333;white-space:pre;transform:scaleX(0.9530);transform-origin:0 0;">100%</div>
<div style="left:1017px;top:37px;width:1541px;height:1018px;box-shadow:0 0 10px rgba(0,0,0,0.2);background:#f0f0f0;"></div>
<div style="left:1017px;top:37px;width:1541px;height:1018px;background:#f0f0f0;border:1px solid #8a8a8a;box-sizing:border-box;"></div>
<div style="left:1017px;top:37px;width:1541px;height:44.5px;background:#2c5798;"></div>
<div style="left:1017px;top:37px;width:1541px;height:1.5px;background:#2460b0;"></div>
<svg style="left:1029.4px;top:53px;" width="24" height="24" viewBox="0 0 24 24"><circle cx="12" cy="12" r="11.5" fill="#fff"/><circle cx="12" cy="12" r="10.3" fill="none" stroke="#7cc4c4" stroke-width="0.9" stroke-dasharray="1.6 0.9"/><path d="M7.5 17.5 V8 M16.5 17.5 V7" fill="none" stroke="#2f8f9a" stroke-width="1.2"/><path d="M7.5 8 L12 15 L16.5 7" fill="none" stroke="#2f8f9a" stroke-width="1.1"/><path d="M7 5.5 H10.5 L7.5 9.5 H10.5" fill="none" stroke="#2f8f9a" stroke-width="0.9"/><path d="M6.5 17.5 H10 M14 17.5 H17.5" stroke="#2f8f9a" stroke-width="0.9"/></svg>
<div style="left:1064.40px;top:55.00px;font-size:17px;line-height:20.40px;color:#e4eaf3;white-space:pre;">Multivariate Time Series Fit Models</div>
<div style="left:2417px;top:56.5px;width:9px;height:3px;background:#dfe6ef;"></div>
<div style="left:2470px;top:48px;width:13px;height:12.5px;box-sizing:border-box;border:2px solid #e8edf3;border-top-width:3px;"></div>
<svg style="left:2524px;top:48px;" width="13" height="13" viewBox="0 0 13 13"><path d="M1.5 1.5 L11.5 11.5 M11.5 1.5 L1.5 11.5" stroke="#eef2f6" stroke-width="2.2"/></svg>
<div style="left:1035px;top:96px;width:473px;height:76px;border:1px solid #d4d4d4;box-sizing:border-box;border-radius:4px;"></div>
<div style="left:1045px;top:88px;width:96px;height:16px;background:#f0f0f0;"></div>
<div style="left:1050.00px;top:86.58px;font-size:16px;line-height:19.20px;color:#000;white-space:pre;">Source data</div>
<div style="left:1153.00px;top:116.18px;font-size:16px;line-height:19.20px;color:#000;white-space:pre;transform:scaleX(0.9945);transform-origin:0 0;">Location :</div>
<div style="left:1226px;top:112px;width:225px;height:30px;background:#fff;border:1px solid #b4b4b4;box-sizing:border-box;"></div>
<div style="left:1229.00px;top:116.18px;font-size:16px;line-height:19.20px;color:#111;white-space:pre;">&#x27;[Book3]Sheet1&#x27;!O3:Q467</div>
<div style="left:1453px;top:112px;width:37px;height:30px;background:#fdfdfd;border:1px solid #8c8c8c;box-sizing:border-box;"></div>
<svg style="left:1458.5px;top:118.0px;" width="26" height="18" viewBox="0 0 26 18"><rect x="1" y="2" width="9" height="5" fill="#4a78b0"/><path d="M11 4.5 H25 M1 10 H25 M1 15.5 H25" stroke="#c9c9c9" stroke-width="1.2"/><rect x="16" y="11" width="9" height="6" fill="#4a86c8"/><path d="M17 4 L13 8 M13 5 V8 H16" fill="none" stroke="#e89a2a" stroke-width="1.5"/></svg>
<svg style="left:1224.5px;top:147.5px;" width="19.0" height="19.0" viewBox="0 0 19.0 19.0"><circle cx="9.5" cy="9.5" r="8.5" fill="#fff" stroke="#333" stroke-width="1"/></svg>
<div style="left:1247.00px;top:147.58px;font-size:16px;line-height:19.20px;color:#000;white-space:pre;transform:scaleX(0.9737);transform-origin:0 0;">data in rows</div>
<svg style="left:1343.5px;top:147.5px;" width="19.0" height="19.0" viewBox="0 0 19.0 19.0"><circle cx="9.5" cy="9.5" r="8.5" fill="#fff" stroke="#333" stroke-width="1"/><circle cx="9.5" cy="9.5" r="3.6" fill="#111"/></svg>
<div style="left:1366.00px;top:147.58px;font-size:16px;line-height:19.20px;color:#000;white-space:pre;transform:scaleX(0.9816);transform-origin:0 0;">data in columns</div>
<div style="left:1042.00px;top:180.58px;font-size:16px;line-height:19.20px;color:#000;white-space:pre;transform:scaleX(0.9806);transform-origin:0 0;">Time Series models to Fit :</div>
<div style="left:1323px;top:177px;width:90px;height:30px;background:#fdfdfd;border:1px solid #a3a3a3;box-sizing:border-box;"></div>
<div style="left:1354.00px;top:182.58px;font-size:16px;line-height:19.20px;color:#000;white-space:pre;transform:scaleX(0.9835);transform-origin:0 0;">Add</div>
<div style="left:1417px;top:177px;width:92px;height:30px;background:#fdfdfd;border:1px solid #a3a3a3;box-sizing:border-box;"></div>
<div style="left:1433.50px;top:182.58px;font-size:16px;line-height:19.20px;color:#000;white-space:pre;transform:scaleX(0.9903);transform-origin:0 0;">Remove</div>
<div style="left:1035px;top:211px;width:473px;height:120px;background:#fff;border:1px solid #7d7d7d;box-sizing:border-box;"></div>
<div style="left:1037px;top:212px;width:115px;height:24px;background:#4a83bd;"></div>
<div style="left:1072.71px;top:214.58px;font-size:16px;line-height:19.20px;color:#fff;white-space:pre;font-weight:bold;">Name</div>
<div style="left:1153px;top:212px;width:91px;height:24px;background:#4a83bd;"></div>
<div style="left:1182.50px;top:214.58px;font-size:16px;line-height:19.20px;color:#fff;white-space:pre;font-weight:bold;">-SIC</div>
<div style="left:1245px;top:212px;width:90px;height:24px;background:#4a83bd;"></div>
<div style="left:1273.56px;top:214.58px;font-size:16px;line-height:19.20px;color:#fff;white-space:pre;font-weight:bold;">-AIC</div>
<div style="left:1336px;top:212px;width:90px;height:24px;background:#4a83bd;"></div>
<div style="left:1358.34px;top:214.58px;font-size:16px;line-height:19.20px;color:#fff;white-space:pre;font-weight:bold;">-HQIC</div>
<div style="left:1427px;top:212px;width:74px;height:24px;background:#4a83bd;"></div>
<div style="left:1453.34px;top:214.58px;font-size:16px;line-height:19.20px;color:#fff;white-space:pre;font-weight:bold;">LR</div>
<div style="left:1501px;top:212px;width:6px;height:24px;background:#e6e6e6;"></div>
<svg style="left:1321px;top:217px;" width="10" height="6" viewBox="0 0 10 6"><path d="M0 0 H10 L5 5 Z" fill="#fff"/></svg>
<div style="left:1037px;top:236px;width:116px;height:28px;background:#afd0f6;"></div>
<div style="left:1153px;top:236px;width:92px;height:28px;background:#afd0f6;"></div>
<div style="left:1245px;top:236px;width:91px;height:28px;background:#afd0f6;"></div>
<div style="left:1336px;top:236px;width:91px;height:28px;background:#afd0f6;"></div>
<div style="left:1427px;top:236px;width:75px;height:28px;background:#afd0f6;"></div>
<div style="left:1074.35px;top:240.58px;font-size:16px;line-height:19.20px;color:#000;white-space:pre;font-weight:bold;">MultiGBM</div>
<div style="left:1182.66px;top:240.58px;font-size:16px;line-height:19.20px;color:#000;white-space:pre;font-weight:bold;">7946.37</div>
<div style="left:1273.16px;top:240.58px;font-size:16px;line-height:19.20px;color:#000;white-space:pre;font-weight:bold;">7983.23</div>
<div style="left:1364.16px;top:240.58px;font-size:16px;line-height:19.20px;color:#000;white-space:pre;font-weight:bold;">7968.96</div>
<div style="left:1449.06px;top:240.58px;font-size:16px;line-height:19.20px;color:#000;white-space:pre;font-weight:bold;">0.0014</div>
<div style="left:1037px;top:264px;width:464px;height:1px;background:#ececec;"></div>
<div style="left:1079.67px;top:269.58px;font-size:16px;line-height:19.20px;color:#000;white-space:pre;font-weight:bold;">MultiAR1</div>
<div style="left:1182.66px;top:269.58px;font-size:16px;line-height:19.20px;color:#000;white-space:pre;font-weight:bold;">7885.78</div>
<div style="left:1273.16px;top:269.58px;font-size:16px;line-height:19.20px;color:#000;white-space:pre;font-weight:bold;">7970.63</div>
<div style="left:1364.16px;top:269.58px;font-size:16px;line-height:19.20px;color:#000;white-space:pre;font-weight:bold;">7938.50</div>
<div style="left:1449.06px;top:269.58px;font-size:16px;line-height:19.20px;color:#000;white-space:pre;font-weight:bold;">1.0000</div>
<div style="left:1037px;top:293.5px;width:464px;height:1px;background:#ececec;"></div>
<div style="left:1077.90px;top:299.08px;font-size:16px;line-height:19.20px;color:#000;white-space:pre;font-weight:bold;">MultiMA1</div>
<div style="left:1182.66px;top:299.08px;font-size:16px;line-height:19.20px;color:#000;white-space:pre;font-weight:bold;">7873.07</div>
<div style="left:1273.16px;top:299.08px;font-size:16px;line-height:19.20px;color:#000;white-space:pre;font-weight:bold;">7957.92</div>
<div style="left:1364.16px;top:299.08px;font-size:16px;line-height:19.20px;color:#000;white-space:pre;font-weight:bold;">7925.79</div>
<div style="left:1449.06px;top:299.08px;font-size:16px;line-height:19.20px;color:#000;white-space:pre;font-weight:bold;">0.0017</div>
<div style="left:1153px;top:264px;width:1px;height:70px;background:#ececec;"></div>
<div style="left:1245px;top:264px;width:1px;height:70px;background:#ececec;"></div>
<div style="left:1336px;top:264px;width:1px;height:70px;background:#ececec;"></div>
<div style="left:1427px;top:264px;width:1px;height:70px;background:#ececec;"></div>
<div style="left:1516px;top:96px;width:1029px;height:41px;background:#fff;border:1px solid #a0a0a0;box-sizing:border-box;"></div>
<div style="left:1516px;top:137px;width:1029px;height:653px;background:#fff;border:1px solid #a0a0a0;box-sizing:border-box;"></div>
<svg style="left:1524.5px;top:105px;" width="22" height="22" viewBox="0 0 22 22"><path d="M1.7 16 V1.7 H14.5" fill="none" stroke="#5b8ed0" stroke-width="1.3"/><rect x="6" y="4" width="13.5" height="15.3" fill="none" stroke="#111" stroke-width="1.9"/></svg>
<svg style="left:1563.5px;top:105px;" width="24" height="23" viewBox="0 0 24 23"><path d="M5.5 8.8 V1.8 H16 L17 2.8 V8.8" fill="none" stroke="#5b8ed0" stroke-width="1.2"/><path d="M1.9 15.5 V8.8 H21.1 V15.5 H18 V13.8 H5 V15.5 Z" fill="none" stroke="#111" stroke-width="1.9"/><path d="M5 15.5 V20.5 H18 V15.5" fill="none" stroke="#5b8ed0" stroke-width="1.2"/></svg>
<div style="left:1997.00px;top:137.58px;font-size:16px;line-height:19.20px;color:#000;white-space:pre;transform:scaleX(1.0110);transform-origin:0 0;">MultiGBM</div>
<div style="left:1607px;top:168px;width:852px;height:591px;border:1px solid #a8a8a8;box-sizing:border-box;"></div>
<div style="left:1607px;top:734px;width:851px;height:1px;background:#a8a8a8;"></div>
<div style="left:2245px;top:168px;width:1px;height:590px;background:#a8a8a8;"></div>
<div style="left:1565.36px;top:724.28px;font-size:16px;line-height:19.20px;color:#111;white-space:pre;">0.00</div>
<div style="left:1602px;top:734px;width:5px;height:1px;background:#a0a0a0;"></div>
<div style="left:1534.22px;top:688.78px;font-size:16px;line-height:19.20px;color:#111;white-space:pre;">2,000.00</div>
<div style="left:1602px;top:698px;width:5px;height:1px;background:#a0a0a0;"></div>
<div style="left:1534.22px;top:653.28px;font-size:16px;line-height:19.20px;color:#111;white-space:pre;">4,000.00</div>
<div style="left:1602px;top:663px;width:5px;height:1px;background:#a0a0a0;"></div>
<div style="left:1534.22px;top:617.78px;font-size:16px;line-height:19.20px;color:#111;white-space:pre;">6,000.00</div>
<div style="left:1602px;top:627px;width:5px;height:1px;background:#a0a0a0;"></div>
<div style="left:1534.22px;top:582.28px;font-size:16px;line-height:19.20px;color:#111;white-space:pre;">8,000.00</div>
<div style="left:1602px;top:592px;width:5px;height:1px;background:#a0a0a0;"></div>
<div style="left:1525.32px;top:546.78px;font-size:16px;line-height:19.20px;color:#111;white-space:pre;">10,000.00</div>
<div style="left:1602px;top:556px;width:5px;height:1px;background:#a0a0a0;"></div>
<div style="left:1525.32px;top:511.28px;font-size:16px;line-height:19.20px;color:#111;white-space:pre;">12,000.00</div>
<div style="left:1602px;top:521px;width:5px;height:1px;background:#a0a0a0;"></div>
<div style="left:1525.32px;top:475.78px;font-size:16px;line-height:19.20px;color:#111;white-space:pre;">14,000.00</div>
<div style="left:1602px;top:485px;width:5px;height:1px;background:#a0a0a0;"></div>
<div style="left:1525.32px;top:440.28px;font-size:16px;line-height:19.20px;color:#111;white-space:pre;">16,000.00</div>
<div style="left:1602px;top:450px;width:5px;height:1px;background:#a0a0a0;"></div>
<div style="left:1525.32px;top:404.78px;font-size:16px;line-height:19.20px;color:#111;white-space:pre;">18,000.00</div>
<div style="left:1602px;top:414px;width:5px;height:1px;background:#a0a0a0;"></div>
<div style="left:1525.32px;top:369.28px;font-size:16px;line-height:19.20px;color:#111;white-space:pre;">20,000.00</div>
<div style="left:1602px;top:379px;width:5px;height:1px;background:#a0a0a0;"></div>
<div style="left:1525.32px;top:333.78px;font-size:16px;line-height:19.20px;color:#111;white-space:pre;">22,000.00</div>
<div style="left:1602px;top:343px;width:5px;height:1px;background:#a0a0a0;"></div>
<div style="left:1525.32px;top:298.28px;font-size:16px;line-height:19.20px;color:#111;white-space:pre;">24,000.00</div>
<div style="left:1602px;top:308px;width:5px;height:1px;background:#a0a0a0;"></div>
<div style="left:1525.32px;top:262.78px;font-size:16px;line-height:19.20px;color:#111;white-space:pre;">26,000.00</div>
<div style="left:1602px;top:272px;width:5px;height:1px;background:#a0a0a0;"></div>
<div style="left:1525.32px;top:227.28px;font-size:16px;line-height:19.20px;color:#111;white-space:pre;">28,000.00</div>
<div style="left:1602px;top:237px;width:5px;height:1px;background:#a0a0a0;"></div>
<div style="left:1525.32px;top:191.78px;font-size:16px;line-height:19.20px;color:#111;white-space:pre;">30,000.00</div>
<div style="left:1602px;top:201px;width:5px;height:1px;background:#a0a0a0;"></div>
<div style="left:1624.99px;top:765.58px;font-size:16px;line-height:19.20px;color:#111;white-space:pre;">-440</div>
<div style="left:1641px;top:758px;width:1px;height:5px;background:#a0a0a0;"></div>
<div style="left:1679.89px;top:765.58px;font-size:16px;line-height:19.20px;color:#111;white-space:pre;">-400</div>
<div style="left:1696px;top:758px;width:1px;height:5px;background:#a0a0a0;"></div>
<div style="left:1734.79px;top:765.58px;font-size:16px;line-height:19.20px;color:#111;white-space:pre;">-360</div>
<div style="left:1751px;top:758px;width:1px;height:5px;background:#a0a0a0;"></div>
<div style="left:1789.69px;top:765.58px;font-size:16px;line-height:19.20px;color:#111;white-space:pre;">-320</div>
<div style="left:1806px;top:758px;width:1px;height:5px;background:#a0a0a0;"></div>
<div style="left:1844.59px;top:765.58px;font-size:16px;line-height:19.20px;color:#111;white-space:pre;">-280</div>
<div style="left:1861px;top:758px;width:1px;height:5px;background:#a0a0a0;"></div>
<div style="left:1899.49px;top:765.58px;font-size:16px;line-height:19.20px;color:#111;white-space:pre;">-240</div>
<div style="left:1916px;top:758px;width:1px;height:5px;background:#a0a0a0;"></div>
<div style="left:1954.39px;top:765.58px;font-size:16px;line-height:19.20px;color:#111;white-space:pre;">-200</div>
<div style="left:1970px;top:758px;width:1px;height:5px;background:#a0a0a0;"></div>
<div style="left:2009.29px;top:765.58px;font-size:16px;line-height:19.20px;color:#111;white-space:pre;">-160</div>
<div style="left:2025px;top:758px;width:1px;height:5px;background:#a0a0a0;"></div>
<div style="left:2064.19px;top:765.58px;font-size:16px;line-height:19.20px;color:#111;white-space:pre;">-120</div>
<div style="left:2080px;top:758px;width:1px;height:5px;background:#a0a0a0;"></div>
<div style="left:2123.54px;top:765.58px;font-size:16px;line-height:19.20px;color:#111;white-space:pre;">-80</div>
<div style="left:2135px;top:758px;width:1px;height:5px;background:#a0a0a0;"></div>
<div style="left:2178.44px;top:765.58px;font-size:16px;line-height:19.20px;color:#111;white-space:pre;">-40</div>
<div style="left:2190px;top:758px;width:1px;height:5px;background:#a0a0a0;"></div>
<div style="left:2240.45px;top:765.58px;font-size:16px;line-height:19.20px;color:#111;white-space:pre;">0</div>
<div style="left:2245px;top:758px;width:1px;height:5px;background:#a0a0a0;"></div>
<div style="left:2290.90px;top:765.58px;font-size:16px;line-height:19.20px;color:#111;white-space:pre;">40</div>
<div style="left:2300px;top:758px;width:1px;height:5px;background:#a0a0a0;"></div>
<div style="left:2345.80px;top:765.58px;font-size:16px;line-height:19.20px;color:#111;white-space:pre;">80</div>
<div style="left:2355px;top:758px;width:1px;height:5px;background:#a0a0a0;"></div>
<div style="left:2396.25px;top:765.58px;font-size:16px;line-height:19.20px;color:#111;white-space:pre;">120</div>
<div style="left:2410px;top:758px;width:1px;height:5px;background:#a0a0a0;"></div>
<svg style="left:1607px;top:168px;overflow:hidden;" width="852" height="590" viewBox="0 0 852 590"><polyline points="0.0,560.5 1.4,560.8 2.7,560.4 4.1,560.6 5.5,560.5 6.8,560.4 8.2,560.8 9.6,560.6 11.0,560.5 12.3,560.6 13.7,560.7 15.1,560.5 16.4,560.5 17.8,560.2 19.2,560.1 20.5,560.0 21.9,559.8 23.3,559.6 24.7,559.4 26.0,559.6 27.4,559.7 28.8,559.8 30.1,559.9 31.5,559.6 32.9,559.7 34.2,559.9 35.6,560.0 37.0,559.8 38.4,559.7 39.7,559.3 41.1,559.4 42.5,559.1 43.8,559.0 45.2,559.6 46.6,559.1 47.9,559.5 49.3,559.7 50.7,559.6 52.1,559.7 53.4,559.8 54.8,560.0 56.2,559.7 57.5,559.5 58.9,559.4 60.3,559.2 61.6,559.3 63.0,559.2 64.4,559.5 65.8,559.1 67.1,558.9 68.5,558.9 69.9,558.6 71.2,559.3 72.6,558.8 74.0,558.9 75.3,558.9 76.7,559.4 78.1,558.9 79.5,559.3 80.8,559.1 82.2,559.1 83.6,558.9 84.9,559.2 86.3,558.9 87.7,558.9 89.0,559.1 90.4,559.5 91.8,558.7 93.2,559.2 94.5,559.3 95.9,559.1 97.3,559.1 98.6,558.9 100.0,559.3 101.4,559.2 102.7,559.0 104.1,558.9 105.5,558.8 106.9,558.7 108.2,558.5 109.6,559.1 111.0,558.5 112.3,557.7 113.7,558.1 115.1,558.3 116.4,558.5 117.8,558.5 119.2,558.5 120.6,558.6 121.9,558.8 123.3,558.6 124.7,558.4 126.0,558.9 127.4,558.9 128.8,558.4 130.1,559.0 131.5,558.9 132.9,558.6 134.3,558.2 135.6,558.3 137.0,558.1 138.4,557.9 139.7,557.7 141.1,557.8 142.5,558.2 143.8,558.1 145.2,557.8 146.6,558.1 148.0,558.1 149.3,558.3 150.7,558.5 152.1,558.3 153.4,558.1 154.8,558.1 156.2,557.8 157.5,558.0 158.9,558.3 160.3,558.2 161.7,558.0 163.0,557.9 164.4,557.7 165.8,557.5 167.1,557.6 168.5,557.4 169.9,557.5 171.2,557.2 172.6,557.5 174.0,557.6 175.4,557.3 176.7,556.9 178.1,557.2 179.5,557.6 180.8,557.4 182.2,557.4 183.6,557.3 184.9,557.6 186.3,557.3 187.7,557.6 189.1,557.5 190.4,557.7 191.8,557.6 193.2,557.5 194.5,557.0 195.9,557.0 197.3,557.1 198.6,557.3 200.0,557.4 201.4,557.2 202.8,557.3 204.1,557.5 205.5,557.4 206.9,557.2 208.2,557.1 209.6,557.3 211.0,557.4 212.3,557.0 213.7,557.1 215.1,557.0 216.5,556.8 217.8,557.2 219.2,557.3 220.6,557.0 221.9,557.0 223.3,557.1 224.7,556.8 226.0,556.8 227.4,557.0 228.8,556.5 230.2,556.7 231.5,556.9 232.9,557.0 234.3,556.5 235.6,556.7 237.0,556.5 238.4,556.7 239.7,556.8 241.1,556.8 242.5,556.5 243.9,556.4 245.2,556.7 246.6,556.4 248.0,556.6 249.3,556.7 250.7,556.5 252.1,557.1 253.4,556.9 254.8,557.3 256.2,556.4 257.6,555.8 258.9,556.3 260.3,556.5 261.7,556.3 263.0,556.3 264.4,555.8 265.8,555.8 267.1,555.7 268.5,555.8 269.9,556.2 271.3,556.2 272.6,556.3 274.0,556.0 275.4,555.9 276.7,556.0 278.1,556.0 279.5,556.3 280.8,556.0 282.2,556.5 283.6,556.0 285.0,556.3 286.3,555.9 287.7,556.4 289.1,556.2 290.4,556.2 291.8,556.2 293.2,555.9 294.5,555.6 295.9,555.1 297.3,555.7 298.7,555.5 300.0,555.4 301.4,555.5 302.8,556.1 304.1,555.4 305.5,555.6 306.9,555.5 308.2,555.7 309.6,555.1 311.0,555.2 312.4,555.5 313.7,555.9 315.1,556.2 316.5,555.7 317.8,555.6 319.2,555.5 320.6,555.0 321.9,554.8 323.3,555.2 324.7,555.3 326.1,555.3 327.4,555.6 328.8,555.2 330.2,555.3 331.5,555.3 332.9,555.2 334.3,555.3 335.6,555.3 337.0,555.3 338.4,555.3 339.8,555.7 341.1,555.4 342.5,555.5 343.9,555.5 345.2,555.2 346.6,555.3 348.0,554.9 349.3,555.2 350.7,554.9 352.1,554.7 353.5,554.9 354.8,555.1 356.2,555.2 357.6,555.3 358.9,555.0 360.3,554.6 361.7,554.8 363.0,554.9 364.4,554.5 365.8,554.8 367.2,554.8 368.5,554.5 369.9,554.6 371.3,554.2 372.6,554.1 374.0,554.3 375.4,553.9 376.7,554.1 378.1,553.8 379.5,554.2 380.9,554.0 382.2,554.1 383.6,553.7 385.0,553.7 386.3,554.1 387.7,554.2 389.1,553.5 390.4,554.0 391.8,554.2 393.2,553.9 394.6,554.3 395.9,553.7 397.3,553.7 398.7,554.0 400.0,554.2 401.4,554.3 402.8,553.6 404.1,553.0 405.5,553.3 406.9,552.9 408.3,553.0 409.6,552.7 411.0,553.2 412.4,553.4 413.7,553.5 415.1,553.3 416.5,553.2 417.8,553.0 419.2,553.1 420.6,553.1 422.0,553.1 423.3,552.9 424.7,553.4 426.1,553.2 427.4,553.4 428.8,553.5 430.2,552.9 431.5,552.2 432.9,552.7 434.3,552.5 435.7,552.5 437.0,552.3 438.4,552.3 439.8,551.9 441.1,552.0 442.5,551.9 443.9,552.0 445.2,551.3 446.6,551.8 448.0,552.0 449.4,551.4 450.7,551.4 452.1,551.6 453.5,551.8 454.8,551.8 456.2,552.2 457.6,552.0 458.9,551.5 460.3,551.3 461.7,551.6 463.1,551.4 464.4,551.7 465.8,551.9 467.2,551.8 468.5,552.0 469.9,551.6 471.3,551.4 472.6,551.1 474.0,550.9 475.4,550.5 476.8,550.5 478.1,550.3 479.5,550.1 480.9,550.4 482.2,550.7 483.6,550.6 485.0,551.1 486.3,551.3 487.7,551.4 489.1,550.9 490.5,550.2 491.8,550.5 493.2,550.5 494.6,550.6 495.9,550.5 497.3,550.7 498.7,550.2 500.0,550.3 501.4,549.7 502.8,548.8 504.2,548.9 505.5,549.5 506.9,548.8 508.3,549.2 509.6,548.9 511.0,548.7 512.4,548.7 513.7,548.7 515.1,548.3 516.5,548.3 517.9,548.5 519.2,548.6 520.6,548.1 522.0,548.6 523.3,549.0 524.7,549.3 526.1,548.1 527.4,547.9 528.8,547.0 530.2,547.2 531.6,547.4 532.9,546.8 534.3,546.2 535.7,546.5 537.0,546.8 538.4,546.4 539.8,546.3 541.1,545.4 542.5,545.4 543.9,545.8 545.3,545.9 546.6,546.5 548.0,545.8 549.4,544.9 550.7,545.3 552.1,545.1 553.5,545.3 554.8,545.6 556.2,545.6 557.6,545.9 559.0,546.1 560.3,544.9 561.7,544.8 563.1,545.5 564.4,544.9 565.8,545.1 567.2,544.7 568.5,544.3 569.9,544.8 571.3,544.9 572.7,544.3 574.0,544.4 575.4,543.5 576.8,543.2 578.1,543.6 579.5,543.5 580.9,542.9 582.2,543.1 583.6,543.2 585.0,543.5 586.4,543.6 587.7,543.1 589.1,542.6 590.5,542.4 591.8,542.2 593.2,542.8 594.6,543.2 595.9,543.2 597.3,542.8 598.7,542.2 600.1,542.4 601.4,541.8 602.8,541.7 604.2,540.8 605.5,540.7 606.9,541.5 608.3,540.8 609.6,540.1 611.0,540.2 612.4,541.1 613.8,541.5 615.1,540.8 616.5,540.4 617.9,540.2 619.2,539.7 620.6,539.8 622.0,539.6 623.3,538.9 624.7,538.9 626.1,539.0 627.5,538.7 628.8,538.4 630.2,539.1 631.6,539.9 632.9,539.4 634.3,538.9 635.7,539.0 637.0,538.7 638.4,538.2 639.8,538.9 641.2,538.1 642.5,537.8 643.9,537.5 645.3,537.2 646.6,537.3 648.0,537.8 649.4,538.4 650.7,538.3 652.1,538.0 653.5,537.1 654.9,537.1 656.2,536.6 657.6,536.7 659.0,537.2 660.3,537.1 661.7,536.8 663.1,536.3 664.4,536.3 665.8,536.4 667.2,535.8 668.6,535.7 669.9,536.3 671.3,535.3 672.7,535.2 674.0,534.8 675.4,535.9 676.8,536.0 678.1,536.0 679.5,535.9 680.9,535.8 682.3,535.6 683.6,534.5 685.0,534.8 686.4,535.1 687.7,534.1 689.1,534.7 690.5,534.9 691.8,533.7 693.2,533.5 694.6,533.4 696.0,533.1 697.3,533.3 698.7,532.5 700.1,532.5 701.4,532.6 702.8,532.9 704.2,532.6 705.5,532.2 706.9,532.4 708.3,531.0 709.7,531.6 711.0,531.3 712.4,530.4 713.8,530.3 715.1,529.3 716.5,528.5 717.9,529.0 719.2,528.9 720.6,529.6 722.0,529.0 723.4,528.4 724.7,528.1 726.1,529.4 727.5,529.1 728.8,528.5 730.2,527.8 731.6,527.2 732.9,527.4 734.3,527.7 735.7,528.3 737.1,528.6 738.4,528.1 739.8,527.2 741.2,526.4 742.5,525.0 743.9,524.8 745.3,525.5 746.6,525.4 748.0,525.7 749.4,524.7 750.8,525.4 752.1,525.4 753.5,525.2 754.9,525.2 756.2,523.4 757.6,523.3 759.0,523.0 760.3,524.4 761.7,523.9 763.1,523.3 764.5,523.8 765.8,522.7 767.2,523.6 768.6,522.7 769.9,522.2 771.3,521.0 772.7,521.2 774.0,519.0 775.4,519.5 776.8,518.4 778.2,518.2 779.5,516.9 780.9,516.9 782.3,516.7 783.6,516.6 785.0,516.1 786.4,515.8 787.7,515.6 789.1,514.2 790.5,512.5 791.9,511.2 793.2,511.7 794.6,510.9 796.0,511.3 797.3,510.6 798.7,509.0 800.1,509.4 801.4,510.2 802.8,508.7 804.2,506.9 805.6,506.0 806.9,507.3 808.3,506.9 809.7,506.8 811.0,507.8 812.4,507.9 813.8,508.1 815.1,507.8 816.5,507.5 817.9,508.1 819.3,508.6 820.6,509.3 822.0,508.8 823.4,509.4 824.7,509.8 826.1,509.9 827.5,510.4 828.8,511.1 830.2,510.9 831.6,510.8 833.0,510.0 834.3,510.6 835.7,510.7 837.1,510.6 838.4,510.2 839.8,511.2 841.2,513.5 842.5,513.2 843.9,512.8 845.3,512.9 846.7,512.2 848.0,512.5 849.4,512.1 850.8,511.9" fill="none" stroke="#d03030" stroke-width="1"/><polyline points="0.0,561.5 1.4,561.3 2.7,561.5 4.1,561.1 5.5,561.2 6.8,560.8 8.2,561.3 9.6,561.3 11.0,561.6 12.3,561.3 13.7,561.3 15.1,561.2 16.4,561.0 17.8,561.0 19.2,560.8 20.5,560.8 21.9,561.0 23.3,560.9 24.7,560.8 26.0,561.2 27.4,561.0 28.8,560.8 30.1,560.7 31.5,560.6 32.9,560.5 34.2,560.4 35.6,560.8 37.0,560.7 38.4,560.6 39.7,560.6 41.1,560.9 42.5,560.6 43.8,560.3 45.2,560.7 46.6,560.2 47.9,560.0 49.3,560.1 50.7,560.5 52.1,560.1 53.4,559.5 54.8,559.7 56.2,559.6 57.5,559.6 58.9,559.7 60.3,559.7 61.6,559.7 63.0,559.5 64.4,559.8 65.8,560.0 67.1,559.7 68.5,559.5 69.9,559.6 71.2,559.5 72.6,559.2 74.0,559.1 75.3,559.3 76.7,559.2 78.1,559.0 79.5,559.1 80.8,559.0 82.2,558.9 83.6,558.5 84.9,559.0 86.3,558.9 87.7,558.6 89.0,558.9 90.4,558.8 91.8,558.7 93.2,558.9 94.5,559.2 95.9,559.0 97.3,559.1 98.6,559.3 100.0,558.7 101.4,558.4 102.7,558.5 104.1,557.9 105.5,557.9 106.9,558.3 108.2,558.4 109.6,558.4 111.0,557.7 112.3,558.3 113.7,558.3 115.1,558.2 116.4,558.1 117.8,557.6 119.2,557.3 120.6,557.1 121.9,557.7 123.3,557.4 124.7,557.4 126.0,557.3 127.4,557.5 128.8,557.5 130.1,557.5 131.5,557.1 132.9,556.4 134.3,556.7 135.6,556.9 137.0,557.3 138.4,557.1 139.7,556.9 141.1,557.0 142.5,556.6 143.8,556.4 145.2,556.3 146.6,556.5 148.0,557.1 149.3,557.1 150.7,557.2 152.1,557.0 153.4,556.8 154.8,556.6 156.2,556.4 157.5,555.8 158.9,555.7 160.3,555.6 161.7,556.1 163.0,556.3 164.4,556.5 165.8,556.7 167.1,556.4 168.5,556.5 169.9,556.7 171.2,556.4 172.6,556.5 174.0,556.1 175.4,555.6 176.7,555.7 178.1,555.5 179.5,555.5 180.8,555.4 182.2,555.6 183.6,555.0 184.9,555.7 186.3,555.9 187.7,555.6 189.1,555.2 190.4,555.2 191.8,555.4 193.2,555.4 194.5,555.4 195.9,554.8 197.3,554.6 198.6,555.1 200.0,555.1 201.4,554.6 202.8,554.5 204.1,554.2 205.5,554.2 206.9,554.7 208.2,554.6 209.6,554.9 211.0,554.8 212.3,554.3 213.7,554.2 215.1,554.9 216.5,554.5 217.8,554.1 219.2,554.5 220.6,554.4 221.9,554.3 223.3,554.7 224.7,554.0 226.0,554.1 227.4,553.8 228.8,553.5 230.2,553.4 231.5,553.9 232.9,553.8 234.3,553.3 235.6,553.2 237.0,553.8 238.4,554.0 239.7,553.5 241.1,554.2 242.5,553.8 243.9,553.3 245.2,553.3 246.6,553.6 248.0,553.9 249.3,554.0 250.7,553.5 252.1,553.2 253.4,552.8 254.8,552.9 256.2,552.8 257.6,552.9 258.9,552.6 260.3,552.6 261.7,552.4 263.0,552.2 264.4,552.1 265.8,552.1 267.1,552.0 268.5,552.4 269.9,552.5 271.3,552.1 272.6,552.4 274.0,552.5 275.4,552.9 276.7,552.6 278.1,552.4 279.5,552.2 280.8,552.2 282.2,552.3 283.6,552.3 285.0,552.1 286.3,552.3 287.7,552.2 289.1,552.2 290.4,551.8 291.8,551.9 293.2,551.5 294.5,551.4 295.9,551.6 297.3,552.2 298.7,552.3 300.0,552.0 301.4,551.8 302.8,551.9 304.1,552.2 305.5,552.2 306.9,551.8 308.2,551.7 309.6,551.4 311.0,551.2 312.4,550.9 313.7,550.9 315.1,550.3 316.5,550.2 317.8,550.7 319.2,550.5 320.6,550.8 321.9,550.4 323.3,550.5 324.7,550.7 326.1,550.4 327.4,550.3 328.8,551.2 330.2,550.7 331.5,550.4 332.9,550.2 334.3,550.3 335.6,550.3 337.0,550.5 338.4,550.6 339.8,550.3 341.1,550.0 342.5,549.5 343.9,549.2 345.2,549.2 346.6,549.6 348.0,549.7 349.3,549.9 350.7,550.0 352.1,549.8 353.5,550.3 354.8,549.7 356.2,549.3 357.6,549.1 358.9,549.5 360.3,549.3 361.7,548.9 363.0,549.0 364.4,549.3 365.8,549.1 367.2,548.8 368.5,549.1 369.9,549.2 371.3,549.2 372.6,548.7 374.0,548.6 375.4,548.6 376.7,547.8 378.1,548.4 379.5,548.3 380.9,548.1 382.2,548.8 383.6,548.5 385.0,548.0 386.3,547.8 387.7,548.0 389.1,548.1 390.4,547.8 391.8,547.4 393.2,547.2 394.6,546.9 395.9,546.7 397.3,546.9 398.7,546.8 400.0,546.9 401.4,546.7 402.8,546.5 404.1,546.5 405.5,546.5 406.9,547.0 408.3,546.5 409.6,546.6 411.0,546.6 412.4,546.0 413.7,546.4 415.1,546.4 416.5,545.6 417.8,546.0 419.2,546.4 420.6,546.0 422.0,546.6 423.3,546.3 424.7,545.7 426.1,545.9 427.4,545.7 428.8,545.2 430.2,544.5 431.5,545.0 432.9,544.9 434.3,545.3 435.7,545.4 437.0,545.1 438.4,544.9 439.8,545.6 441.1,546.0 442.5,545.8 443.9,545.3 445.2,544.7 446.6,544.6 448.0,545.2 449.4,545.1 450.7,544.8 452.1,544.2 453.5,544.3 454.8,544.0 456.2,544.1 457.6,544.4 458.9,544.7 460.3,544.5 461.7,544.1 463.1,544.1 464.4,544.7 465.8,544.5 467.2,543.6 468.5,544.2 469.9,544.0 471.3,545.1 472.6,544.3 474.0,543.9 475.4,543.5 476.8,543.5 478.1,543.2 479.5,542.6 480.9,542.0 482.2,542.3 483.6,542.3 485.0,542.3 486.3,543.3 487.7,543.4 489.1,543.5 490.5,542.9 491.8,542.7 493.2,542.2 494.6,541.8 495.9,541.9 497.3,541.7 498.7,541.4 500.0,541.0 501.4,540.0 502.8,539.6 504.2,539.7 505.5,539.4 506.9,538.9 508.3,538.9 509.6,538.3 511.0,537.9 512.4,538.2 513.7,537.8 515.1,538.2 516.5,537.9 517.9,537.8 519.2,537.7 520.6,536.1 522.0,536.0 523.3,535.2 524.7,535.0 526.1,534.9 527.4,535.4 528.8,535.0 530.2,535.4 531.6,534.3 532.9,533.6 534.3,533.0 535.7,532.9 537.0,532.1 538.4,531.1 539.8,530.5 541.1,529.3 542.5,529.8 543.9,529.6 545.3,529.0 546.6,528.4 548.0,527.4 549.4,526.6 550.7,526.7 552.1,525.5 553.5,524.7 554.8,525.3 556.2,525.4 557.6,524.5 559.0,524.0 560.3,523.2 561.7,523.2 563.1,521.9 564.4,521.3 565.8,520.9 567.2,521.0 568.5,519.8 569.9,519.2 571.3,518.0 572.7,516.9 574.0,516.0 575.4,515.7 576.8,515.7 578.1,514.4 579.5,513.4 580.9,512.7 582.2,512.5 583.6,512.3 585.0,510.6 586.4,510.4 587.7,509.1 589.1,509.2 590.5,507.8 591.8,506.6 593.2,505.9 594.6,505.7 595.9,504.5 597.3,504.5 598.7,504.2 600.1,503.7 601.4,503.2 602.8,503.2 604.2,501.6 605.5,501.0 606.9,500.3 608.3,497.9 609.6,498.3 611.0,497.6 612.4,497.2 613.8,497.1 615.1,497.5 616.5,497.8 617.9,498.0 619.2,497.1 620.6,497.6 622.0,497.7 623.3,496.9 624.7,496.7 626.1,497.2 627.5,497.1 628.8,497.2 630.2,496.6 631.6,497.1 632.9,498.3 634.3,497.4 635.7,495.0 637.0,496.3 638.4,495.0 639.8,493.1 641.2,490.9 642.5,491.8 643.9,492.8 645.3,493.1 646.6,491.8 648.0,492.5 649.4,491.3 650.7,489.9 652.1,489.5 653.5,489.1 654.9,488.6 656.2,488.3 657.6,485.6 659.0,487.2 660.3,486.0 661.7,486.2 663.1,484.8 664.4,484.6 665.8,484.0 667.2,482.0 668.6,482.5 669.9,482.9 671.3,481.2 672.7,478.9 674.0,478.8 675.4,478.4 676.8,478.8 678.1,478.8 679.5,480.2 680.9,479.9 682.3,478.5 683.6,477.9 685.0,474.2 686.4,473.8 687.7,473.3 689.1,473.7 690.5,474.0 691.8,473.5 693.2,473.6 694.6,471.5 696.0,470.9 697.3,469.7 698.7,468.8 700.1,468.1 701.4,466.7 702.8,466.0 704.2,464.9 705.5,465.1 706.9,463.5 708.3,462.6 709.7,464.4 711.0,462.8 712.4,461.3 713.8,460.7 715.1,457.4 716.5,457.1 717.9,456.6 719.2,455.5 720.6,455.2 722.0,454.4 723.4,454.0 724.7,451.0 726.1,450.2 727.5,448.1 728.8,448.8 730.2,448.2 731.6,446.0 732.9,446.5 734.3,445.4 735.7,447.3 737.1,446.8 738.4,443.9 739.8,444.6 741.2,447.0 742.5,447.4 743.9,446.4 745.3,447.5 746.6,448.1 748.0,449.6 749.4,449.8 750.8,449.2 752.1,447.2 753.5,447.5 754.9,447.7 756.2,447.4 757.6,447.8 759.0,445.9 760.3,447.1 761.7,447.1 763.1,447.5 764.5,447.2 765.8,446.7 767.2,447.2 768.6,448.1 769.9,445.1 771.3,442.2 772.7,437.7 774.0,435.4 775.4,432.2 776.8,427.0 778.2,426.3 779.5,421.4 780.9,418.8 782.3,416.1 783.6,413.7 785.0,415.9 786.4,413.7 787.7,411.0 789.1,412.2 790.5,410.5 791.9,411.5 793.2,415.2 794.6,413.6 796.0,413.6 797.3,413.8 798.7,413.1 800.1,411.9 801.4,412.7 802.8,407.8 804.2,404.3 805.6,400.2 806.9,393.8 808.3,391.4 809.7,388.1 811.0,385.8 812.4,383.1 813.8,381.9 815.1,372.7 816.5,368.4 817.9,370.2 819.3,374.5 820.6,381.7 822.0,387.1 823.4,392.7 824.7,395.0 826.1,394.2 827.5,394.1 828.8,392.7 830.2,390.9 831.6,390.2 833.0,388.9 834.3,386.0 835.7,388.9 837.1,385.5 838.4,385.5 839.8,384.8 841.2,384.6 842.5,380.8 843.9,377.0 845.3,377.1 846.7,376.2 848.0,369.7 849.4,364.6 850.8,365.2" fill="none" stroke="#3ccc3c" stroke-width="1"/><polyline points="0.0,564.3 1.4,564.4 2.7,564.6 4.1,564.4 5.5,564.1 6.8,564.2 8.2,564.3 9.6,564.4 11.0,564.1 12.3,563.9 13.7,564.1 15.1,564.1 16.4,564.3 17.8,564.3 19.2,564.2 20.5,564.0 21.9,564.4 23.3,564.1 24.7,563.8 26.0,563.6 27.4,563.7 28.8,563.7 30.1,563.6 31.5,563.6 32.9,563.6 34.2,563.7 35.6,563.8 37.0,563.7 38.4,563.3 39.7,563.4 41.1,563.1 42.5,563.2 43.8,562.9 45.2,563.0 46.6,563.0 47.9,563.1 49.3,563.6 50.7,563.4 52.1,563.4 53.4,563.0 54.8,562.9 56.2,563.0 57.5,562.9 58.9,563.0 60.3,562.9 61.6,562.7 63.0,562.8 64.4,562.6 65.8,562.9 67.1,562.7 68.5,562.8 69.9,562.7 71.2,562.8 72.6,562.5 74.0,562.7 75.3,562.5 76.7,562.7 78.1,562.6 79.5,562.5 80.8,562.3 82.2,562.4 83.6,562.4 84.9,562.5 86.3,562.3 87.7,562.3 89.0,562.3 90.4,562.2 91.8,562.1 93.2,562.1 94.5,561.9 95.9,561.7 97.3,561.6 98.6,561.8 100.0,562.0 101.4,562.0 102.7,562.1 104.1,562.0 105.5,562.0 106.9,561.8 108.2,561.8 109.6,562.0 111.0,561.7 112.3,561.4 113.7,561.7 115.1,561.6 116.4,561.6 117.8,561.6 119.2,561.2 120.6,561.6 121.9,561.7 123.3,561.5 124.7,561.4 126.0,561.3 127.4,561.0 128.8,560.9 130.1,561.0 131.5,561.1 132.9,561.1 134.3,561.0 135.6,561.1 137.0,560.8 138.4,560.9 139.7,561.0 141.1,560.8 142.5,560.3 143.8,560.2 145.2,560.4 146.6,560.5 148.0,560.7 149.3,560.4 150.7,560.4 152.1,560.4 153.4,560.3 154.8,559.8 156.2,560.1 157.5,560.5 158.9,560.6 160.3,560.2 161.7,560.0 163.0,560.0 164.4,560.5 165.8,560.4 167.1,560.2 168.5,560.3 169.9,560.1 171.2,560.3 172.6,559.9 174.0,559.7 175.4,559.8 176.7,560.0 178.1,560.0 179.5,559.8 180.8,559.3 182.2,559.2 183.6,559.2 184.9,559.1 186.3,559.3 187.7,559.2 189.1,559.4 190.4,559.3 191.8,559.2 193.2,559.2 194.5,559.2 195.9,559.3 197.3,559.1 198.6,559.0 200.0,558.7 201.4,559.1 202.8,559.3 204.1,559.1 205.5,558.9 206.9,558.6 208.2,558.7 209.6,558.7 211.0,559.1 212.3,559.0 213.7,558.7 215.1,558.1 216.5,558.5 217.8,558.5 219.2,558.2 220.6,558.3 221.9,558.0 223.3,558.8 224.7,558.8 226.0,558.7 227.4,558.5 228.8,557.9 230.2,558.0 231.5,557.7 232.9,558.0 234.3,557.5 235.6,557.5 237.0,557.9 238.4,558.3 239.7,557.9 241.1,557.5 242.5,557.8 243.9,558.0 245.2,557.6 246.6,557.5 248.0,557.4 249.3,557.2 250.7,557.2 252.1,557.6 253.4,557.7 254.8,558.0 256.2,557.8 257.6,557.6 258.9,557.3 260.3,557.2 261.7,557.0 263.0,556.7 264.4,557.0 265.8,557.4 267.1,557.4 268.5,557.6 269.9,557.4 271.3,557.1 272.6,557.0 274.0,556.9 275.4,556.7 276.7,556.4 278.1,556.2 279.5,556.4 280.8,556.6 282.2,556.5 283.6,556.9 285.0,556.8 286.3,556.8 287.7,557.0 289.1,556.6 290.4,556.1 291.8,556.3 293.2,556.1 294.5,556.3 295.9,556.2 297.3,556.2 298.7,556.1 300.0,555.4 301.4,555.5 302.8,555.2 304.1,554.9 305.5,554.8 306.9,555.0 308.2,555.0 309.6,555.0 311.0,554.4 312.4,554.2 313.7,553.6 315.1,553.7 316.5,553.9 317.8,553.6 319.2,553.6 320.6,553.6 321.9,553.7 323.3,553.3 324.7,552.9 326.1,552.7 327.4,553.1 328.8,553.2 330.2,552.8 331.5,552.7 332.9,552.5 334.3,552.4 335.6,552.1 337.0,551.9 338.4,551.5 339.8,551.3 341.1,551.7 342.5,551.7 343.9,551.4 345.2,551.2 346.6,551.1 348.0,551.0 349.3,550.6 350.7,550.6 352.1,550.5 353.5,550.2 354.8,549.9 356.2,549.6 357.6,549.4 358.9,549.7 360.3,549.0 361.7,549.0 363.0,548.9 364.4,548.8 365.8,548.9 367.2,549.1 368.5,549.0 369.9,548.7 371.3,548.4 372.6,548.1 374.0,548.2 375.4,547.7 376.7,547.1 378.1,546.6 379.5,546.3 380.9,545.8 382.2,546.2 383.6,546.1 385.0,545.7 386.3,545.9 387.7,545.3 389.1,545.2 390.4,545.1 391.8,544.2 393.2,543.6 394.6,543.2 395.9,543.5 397.3,543.7 398.7,542.9 400.0,543.0 401.4,542.5 402.8,542.1 404.1,541.7 405.5,541.4 406.9,540.7 408.3,540.4 409.6,540.0 411.0,540.2 412.4,540.9 413.7,541.4 415.1,540.6 416.5,539.6 417.8,539.3 419.2,538.9 420.6,539.5 422.0,539.4 423.3,538.8 424.7,538.9 426.1,538.7 427.4,537.8 428.8,537.5 430.2,537.4 431.5,537.3 432.9,537.2 434.3,536.9 435.7,536.9 437.0,536.5 438.4,536.0 439.8,536.6 441.1,536.4 442.5,536.2 443.9,535.3 445.2,535.2 446.6,535.4 448.0,534.7 449.4,535.0 450.7,534.6 452.1,534.5 453.5,534.1 454.8,533.9 456.2,534.1 457.6,533.5 458.9,533.7 460.3,532.9 461.7,532.2 463.1,532.3 464.4,531.6 465.8,531.3 467.2,531.5 468.5,531.7 469.9,530.5 471.3,530.6 472.6,531.1 474.0,531.0 475.4,530.2 476.8,529.5 478.1,529.1 479.5,528.4 480.9,528.3 482.2,528.1 483.6,527.9 485.0,528.2 486.3,527.7 487.7,526.8 489.1,527.2 490.5,526.4 491.8,526.0 493.2,525.7 494.6,525.3 495.9,524.5 497.3,524.3 498.7,525.0 500.0,524.0 501.4,523.5 502.8,523.6 504.2,523.3 505.5,523.0 506.9,522.7 508.3,521.0 509.6,520.3 511.0,520.2 512.4,520.2 513.7,520.3 515.1,519.9 516.5,519.1 517.9,518.6 519.2,518.0 520.6,517.7 522.0,517.6 523.3,516.8 524.7,516.0 526.1,515.3 527.4,515.6 528.8,515.8 530.2,515.5 531.6,514.8 532.9,514.0 534.3,512.8 535.7,512.1 537.0,510.4 538.4,509.5 539.8,508.3 541.1,508.1 542.5,506.9 543.9,506.2 545.3,505.7 546.6,505.6 548.0,504.0 549.4,502.6 550.7,502.5 552.1,500.9 553.5,500.6 554.8,499.5 556.2,498.7 557.6,496.9 559.0,497.0 560.3,496.0 561.7,494.9 563.1,495.7 564.4,495.1 565.8,496.2 567.2,494.5 568.5,492.7 569.9,491.5 571.3,491.3 572.7,489.6 574.0,488.5 575.4,487.4 576.8,485.3 578.1,484.4 579.5,482.9 580.9,481.0 582.2,481.0 583.6,480.5 585.0,479.2 586.4,477.3 587.7,474.9 589.1,474.9 590.5,474.0 591.8,471.8 593.2,471.3 594.6,469.4 595.9,469.0 597.3,468.5 598.7,467.9 600.1,467.1 601.4,466.0 602.8,463.9 604.2,462.8 605.5,461.6 606.9,460.7 608.3,460.1 609.6,459.7 611.0,460.2 612.4,456.5 613.8,456.7 615.1,456.0 616.5,457.6 617.9,457.0 619.2,454.0 620.6,453.9 622.0,452.6 623.3,453.0 624.7,451.1 626.1,450.5 627.5,449.9 628.8,449.3 630.2,448.1 631.6,446.0 632.9,446.6 634.3,447.3 635.7,446.4 637.0,444.6 638.4,444.4 639.8,444.3 641.2,443.2 642.5,442.4 643.9,443.0 645.3,440.5 646.6,439.2 648.0,436.7 649.4,436.2 650.7,435.5 652.1,434.5 653.5,433.9 654.9,435.8 656.2,434.5 657.6,433.6 659.0,435.1 660.3,433.3 661.7,430.1 663.1,429.6 664.4,427.0 665.8,427.8 667.2,424.3 668.6,422.4 669.9,419.4 671.3,419.0 672.7,416.7 674.0,415.9 675.4,414.4 676.8,412.6 678.1,412.8 679.5,412.3 680.9,410.3 682.3,407.2 683.6,404.6 685.0,404.0 686.4,405.8 687.7,402.6 689.1,399.6 690.5,396.9 691.8,393.1 693.2,389.9 694.6,387.9 696.0,387.9 697.3,384.9 698.7,381.2 700.1,376.2 701.4,374.8 702.8,372.6 704.2,368.3 705.5,364.8 706.9,363.2 708.3,362.8 709.7,360.9 711.0,357.8 712.4,353.9 713.8,351.4 715.1,348.1 716.5,348.6 717.9,342.2 719.2,338.4 720.6,337.7 722.0,333.5 723.4,332.8 724.7,328.5 726.1,325.1 727.5,320.8 728.8,315.2 730.2,311.3 731.6,313.9 732.9,311.5 734.3,309.0 735.7,307.1 737.1,304.1 738.4,302.1 739.8,297.3 741.2,293.3 742.5,292.4 743.9,288.1 745.3,282.4 746.6,280.4 748.0,277.4 749.4,277.2 750.8,273.1 752.1,268.9 753.5,266.9 754.9,269.0 756.2,265.6 757.6,263.1 759.0,260.2 760.3,258.1 761.7,257.3 763.1,256.1 764.5,246.5 765.8,246.4 767.2,241.7 768.6,236.6 769.9,238.7 771.3,232.2 772.7,232.2 774.0,228.3 775.4,219.3 776.8,216.4 778.2,214.1 779.5,211.3 780.9,203.4 782.3,203.4 783.6,203.3 785.0,200.4 786.4,206.0 787.7,203.4 789.1,200.9 790.5,199.2 791.9,196.5 793.2,194.3 794.6,195.0 796.0,195.5 797.3,190.7 798.7,180.4 800.1,166.1 801.4,158.9 802.8,146.4 804.2,137.6 805.6,124.5 806.9,113.6 808.3,111.8 809.7,104.7 811.0,111.3 812.4,105.4 813.8,100.2 815.1,93.3 816.5,98.1 817.9,103.6 819.3,104.1 820.6,99.7 822.0,101.1 823.4,106.7 824.7,107.3 826.1,105.9 827.5,99.2 828.8,94.8 830.2,93.0 831.6,87.8 833.0,85.2 834.3,92.0 835.7,92.4 837.1,81.6 838.4,78.9 839.8,75.3 841.2,71.3 842.5,72.1 843.9,66.5 845.3,60.8 846.7,51.2 848.0,43.0 849.4,40.1 850.8,33.6" fill="none" stroke="#2828c8" stroke-width="1"/></svg>
<div style="left:2477px;top:436px;width:20px;height:1.2px;background:#2828c8;"></div>
<div style="left:2503.00px;top:426.08px;font-size:16px;line-height:19.20px;color:#111;white-space:pre;transform:scaleX(0.9370);transform-origin:0 0;">s 1</div>
<div style="left:2477px;top:463px;width:20px;height:1.2px;background:#d03030;"></div>
<div style="left:2503.00px;top:453.88px;font-size:16px;line-height:19.20px;color:#111;white-space:pre;transform:scaleX(0.9370);transform-origin:0 0;">s 2</div>
<div style="left:2477px;top:491px;width:20px;height:1.2px;background:#3ccc3c;"></div>
<div style="left:2503.00px;top:481.68px;font-size:16px;line-height:19.20px;color:#111;white-space:pre;transform:scaleX(0.9370);transform-origin:0 0;">s 3</div>
<div style="left:2162.00px;top:815.58px;font-size:16px;line-height:19.20px;color:#000;white-space:pre;transform:scaleX(0.9867);transform-origin:0 0;">Orientation :</div>
<svg style="left:2257.0px;top:801.5px;" width="19.0" height="19.0" viewBox="0 0 19.0 19.0"><circle cx="9.5" cy="9.5" r="8.5" fill="#fff" stroke="#333" stroke-width="1"/><circle cx="9.5" cy="9.5" r="3.6" fill="#111"/></svg>
<div style="left:2281.00px;top:801.58px;font-size:16px;line-height:19.20px;color:#000;white-space:pre;transform:scaleX(0.9768);transform-origin:0 0;">Output series in columns</div>
<svg style="left:2257.0px;top:831.5px;" width="19.0" height="19.0" viewBox="0 0 19.0 19.0"><circle cx="9.5" cy="9.5" r="8.5" fill="#fff" stroke="#333" stroke-width="1"/></svg>
<div style="left:2281.00px;top:831.58px;font-size:16px;line-height:19.20px;color:#000;white-space:pre;transform:scaleX(0.9748);transform-origin:0 0;">Output series in rows</div>
<div style="left:2148.00px;top:875.58px;font-size:16px;line-height:19.20px;color:#000;white-space:pre;transform:scaleX(0.9863);transform-origin:0 0;">Output mode :</div>
<svg style="left:2257.0px;top:875.5px;" width="19.0" height="19.0" viewBox="0 0 19.0 19.0"><circle cx="9.5" cy="9.5" r="8.5" fill="#fff" stroke="#333" stroke-width="1"/></svg>
<div style="left:2280.00px;top:875.58px;font-size:16px;line-height:19.20px;color:#000;white-space:pre;transform:scaleX(0.9855);transform-origin:0 0;">Parameters</div>
<svg style="left:2376.0px;top:875.5px;" width="19.0" height="19.0" viewBox="0 0 19.0 19.0"><circle cx="9.5" cy="9.5" r="8.5" fill="#fff" stroke="#333" stroke-width="1"/><circle cx="9.5" cy="9.5" r="3.6" fill="#111"/></svg>
<div style="left:2399.00px;top:875.58px;font-size:16px;line-height:19.20px;color:#000;white-space:pre;transform:scaleX(0.9702);transform-origin:0 0;">Series</div>
<svg style="left:2457.0px;top:875.5px;" width="19.0" height="19.0" viewBox="0 0 19.0 19.0"><circle cx="9.5" cy="9.5" r="8.5" fill="#fff" stroke="#333" stroke-width="1"/></svg>
<div style="left:2480.00px;top:875.58px;font-size:16px;line-height:19.20px;color:#000;white-space:pre;transform:scaleX(0.9948);transform-origin:0 0;">Object</div>
<div style="left:2141.00px;top:917.58px;font-size:16px;line-height:19.20px;color:#000;white-space:pre;transform:scaleX(1.0111);transform-origin:0 0;">Fitted Function</div>
<div style="left:2179.00px;top:937.58px;font-size:16px;line-height:19.20px;color:#000;white-space:pre;transform:scaleX(0.9945);transform-origin:0 0;">Location :</div>
<div style="left:2259px;top:920px;width:216px;height:30px;background:#f8f8f8;border:1px solid #dcdcdc;box-sizing:border-box;"></div>
<div style="left:2477px;top:920px;width:37px;height:30px;background:#fdfdfd;border:1px solid #8c8c8c;box-sizing:border-box;"></div>
<svg style="left:2482.5px;top:926.0px;" width="26" height="18" viewBox="0 0 26 18"><rect x="1" y="2" width="9" height="5" fill="#4a78b0"/><path d="M11 4.5 H25 M1 10 H25 M1 15.5 H25" stroke="#c9c9c9" stroke-width="1.2"/><rect x="16" y="11" width="9" height="6" fill="#4a86c8"/><path d="M17 4 L13 8 M13 5 V8 H16" fill="none" stroke="#e89a2a" stroke-width="1.5"/></svg>
<div style="left:2260px;top:963px;width:18px;height:18px;background:#fff;border:1px solid #9a9a9a;box-sizing:border-box;"></div>
<svg style="left:2260px;top:963px;" width="18" height="18" viewBox="0 0 18 18"><path d="M4 9 L7.5 12.5 L14 5.5" fill="none" stroke="#b5b5b5" stroke-width="2.2"/></svg>
<div style="left:2282.00px;top:962.58px;font-size:16px;line-height:19.20px;color:#a3a3a3;white-space:pre;transform:scaleX(0.9756);transform-origin:0 0;">Labels</div>
<div style="left:2100px;top:997px;width:49px;height:35px;background:#fdfdfd;border:1px solid #a3a3a3;box-sizing:border-box;"></div>
<div style="left:2124.50px;top:1005.08px;font-size:16px;line-height:19.20px;color:#000;white-space:pre;"></div>
<div style="left:2151px;top:997px;width:113px;height:35px;background:#fdfdfd;border:1px solid #a3a3a3;box-sizing:border-box;"></div>
<div style="left:2183.20px;top:1005.08px;font-size:16px;line-height:19.20px;color:#000;white-space:pre;transform:scaleX(1.0120);transform-origin:0 0;">Report</div>
<div style="left:2263px;top:997px;width:172px;height:35px;background:#fdfdfd;border:1px solid #a3a3a3;box-sizing:border-box;"></div>
<div style="left:2279.75px;top:1005.08px;font-size:16px;line-height:19.20px;color:#000;white-space:pre;">Insert to Worksheet</div>
<div style="left:2437px;top:997px;width:106px;height:35px;background:#fdfdfd;border:1px solid #a3a3a3;box-sizing:border-box;"></div>
<div style="left:2466.00px;top:1005.08px;font-size:16px;line-height:19.20px;color:#000;white-space:pre;transform:scaleX(0.9638);transform-origin:0 0;">Cancel</div>
<div style="left:632px;top:794px;width:1494px;height:747px;box-shadow:0 0 8px rgba(0,0,0,0.2);background:#f0f0f0;"></div>
<div style="left:632px;top:794px;width:1494px;height:747px;background:#f0f0f0;border:1px solid #8a8a8a;box-sizing:border-box;"></div>
<div style="left:632px;top:794px;width:1494px;height:44.5px;background:#2c5798;"></div>
<div style="left:1985px;top:813px;width:9px;height:3px;background:#dfe6ef;"></div>
<div style="left:2037px;top:806px;width:13px;height:12px;box-sizing:border-box;border:2px solid #e8edf3;"></div>
<svg style="left:2092px;top:805px;" width="13" height="13" viewBox="0 0 13 13"><path d="M1.5 1.5 L11.5 11.5 M11.5 1.5 L1.5 11.5" stroke="#eef2f6" stroke-width="2.2"/></svg>
<div style="left:1100px;top:857px;width:1008px;height:42px;background:#fff;border:1px solid #a0a0a0;box-sizing:border-box;"></div>
<div style="left:1120px;top:898px;width:988px;height:645px;background:#fff;border:1px solid #a0a0a0;box-sizing:border-box;"></div>
<div style="left:1629.00px;top:898.58px;font-size:16px;line-height:19.20px;color:#111;white-space:pre;">T</div>
<div style="left:1191px;top:929px;width:887px;height:574px;border:1px solid #a8a8a8;box-sizing:border-box;"></div>
<div style="left:1150.80px;top:1492.58px;font-size:16px;line-height:19.20px;color:#111;white-space:pre;transform:scaleX(0.9313);transform-origin:0 0;">0.00</div>
<div style="left:1186px;top:1502px;width:5px;height:1px;background:#a0a0a0;"></div>
<div style="left:1176.10px;top:1508.98px;font-size:16px;line-height:19.20px;color:#111;white-space:pre;transform:scaleX(0.9313);transform-origin:0 0;">0.00</div>
<div style="left:1191px;top:1502px;width:1px;height:5px;background:#a0a0a0;"></div>
<div style="left:1150.80px;top:1435.28px;font-size:16px;line-height:19.20px;color:#111;white-space:pre;transform:scaleX(0.9313);transform-origin:0 0;">0.10</div>
<div style="left:1186px;top:1445px;width:5px;height:1px;background:#a0a0a0;"></div>
<div style="left:1264.60px;top:1508.98px;font-size:16px;line-height:19.20px;color:#111;white-space:pre;transform:scaleX(0.9313);transform-origin:0 0;">0.10</div>
<div style="left:1279px;top:1502px;width:1px;height:5px;background:#a0a0a0;"></div>
<div style="left:1150.80px;top:1377.98px;font-size:16px;line-height:19.20px;color:#111;white-space:pre;transform:scaleX(0.9313);transform-origin:0 0;">0.20</div>
<div style="left:1186px;top:1387px;width:5px;height:1px;background:#a0a0a0;"></div>
<div style="left:1353.10px;top:1508.98px;font-size:16px;line-height:19.20px;color:#111;white-space:pre;transform:scaleX(0.9313);transform-origin:0 0;">0.20</div>
<div style="left:1368px;top:1502px;width:1px;height:5px;background:#a0a0a0;"></div>
<div style="left:1150.80px;top:1320.68px;font-size:16px;line-height:19.20px;color:#111;white-space:pre;transform:scaleX(0.9313);transform-origin:0 0;">0.30</div>
<div style="left:1186px;top:1330px;width:5px;height:1px;background:#a0a0a0;"></div>
<div style="left:1441.60px;top:1508.98px;font-size:16px;line-height:19.20px;color:#111;white-space:pre;transform:scaleX(0.9313);transform-origin:0 0;">0.30</div>
<div style="left:1456px;top:1502px;width:1px;height:5px;background:#a0a0a0;"></div>
<div style="left:1150.80px;top:1263.38px;font-size:16px;line-height:19.20px;color:#111;white-space:pre;transform:scaleX(0.9313);transform-origin:0 0;">0.40</div>
<div style="left:1186px;top:1273px;width:5px;height:1px;background:#a0a0a0;"></div>
<div style="left:1530.10px;top:1508.98px;font-size:16px;line-height:19.20px;color:#111;white-space:pre;transform:scaleX(0.9313);transform-origin:0 0;">0.40</div>
<div style="left:1545px;top:1502px;width:1px;height:5px;background:#a0a0a0;"></div>
<div style="left:1150.80px;top:1206.08px;font-size:16px;line-height:19.20px;color:#111;white-space:pre;transform:scaleX(0.9313);transform-origin:0 0;">0.50</div>
<div style="left:1186px;top:1216px;width:5px;height:1px;background:#a0a0a0;"></div>
<div style="left:1618.60px;top:1508.98px;font-size:16px;line-height:19.20px;color:#111;white-space:pre;transform:scaleX(0.9313);transform-origin:0 0;">0.50</div>
<div style="left:1633px;top:1502px;width:1px;height:5px;background:#a0a0a0;"></div>
<div style="left:1150.80px;top:1148.78px;font-size:16px;line-height:19.20px;color:#111;white-space:pre;transform:scaleX(0.9313);transform-origin:0 0;">0.60</div>
<div style="left:1186px;top:1158px;width:5px;height:1px;background:#a0a0a0;"></div>
<div style="left:1707.10px;top:1508.98px;font-size:16px;line-height:19.20px;color:#111;white-space:pre;transform:scaleX(0.9313);transform-origin:0 0;">0.60</div>
<div style="left:1722px;top:1502px;width:1px;height:5px;background:#a0a0a0;"></div>
<div style="left:1150.80px;top:1091.48px;font-size:16px;line-height:19.20px;color:#111;white-space:pre;transform:scaleX(0.9313);transform-origin:0 0;">0.70</div>
<div style="left:1186px;top:1101px;width:5px;height:1px;background:#a0a0a0;"></div>
<div style="left:1795.60px;top:1508.98px;font-size:16px;line-height:19.20px;color:#111;white-space:pre;transform:scaleX(0.9313);transform-origin:0 0;">0.70</div>
<div style="left:1810px;top:1502px;width:1px;height:5px;background:#a0a0a0;"></div>
<div style="left:1150.80px;top:1034.18px;font-size:16px;line-height:19.20px;color:#111;white-space:pre;transform:scaleX(0.9313);transform-origin:0 0;">0.80</div>
<div style="left:1186px;top:1044px;width:5px;height:1px;background:#a0a0a0;"></div>
<div style="left:1884.10px;top:1508.98px;font-size:16px;line-height:19.20px;color:#111;white-space:pre;transform:scaleX(0.9313);transform-origin:0 0;">0.80</div>
<div style="left:1899px;top:1502px;width:1px;height:5px;background:#a0a0a0;"></div>
<div style="left:1150.80px;top:976.88px;font-size:16px;line-height:19.20px;color:#111;white-space:pre;transform:scaleX(0.9313);transform-origin:0 0;">0.90</div>
<div style="left:1186px;top:986px;width:5px;height:1px;background:#a0a0a0;"></div>
<div style="left:1972.60px;top:1508.98px;font-size:16px;line-height:19.20px;color:#111;white-space:pre;transform:scaleX(0.9313);transform-origin:0 0;">0.90</div>
<div style="left:1987px;top:1502px;width:1px;height:5px;background:#a0a0a0;"></div>
<div style="left:1150.80px;top:919.58px;font-size:16px;line-height:19.20px;color:#111;white-space:pre;transform:scaleX(0.9313);transform-origin:0 0;">1.00</div>
<div style="left:1186px;top:929px;width:5px;height:1px;background:#a0a0a0;"></div>
<div style="left:2061.10px;top:1508.98px;font-size:16px;line-height:19.20px;color:#111;white-space:pre;transform:scaleX(0.9313);transform-origin:0 0;">1.00</div>
<div style="left:2076px;top:1502px;width:1px;height:5px;background:#a0a0a0;"></div>
<div style="left:1615.00px;top:1526.08px;font-size:16px;line-height:19.20px;color:#e02020;white-space:pre;transform:scaleX(0.9715);transform-origin:0 0;">Var 1</div>
<svg style="left:1191px;top:929px;overflow:hidden;" width="889" height="576" viewBox="0 0 889 576"><circle cx="870.1" cy="6.5" r="2.2" fill="#4a7aa6"/><circle cx="11.1" cy="568.7" r="2.2" fill="#4a7aa6"/><circle cx="53.9" cy="552.2" r="2.2" fill="#4a7aa6"/><circle cx="482.9" cy="188.0" r="2.2" fill="#4a7aa6"/><circle cx="443.0" cy="293.2" r="2.2" fill="#4a7aa6"/><circle cx="504.5" cy="246.8" r="2.2" fill="#4a7aa6"/><circle cx="488.1" cy="292.1" r="2.2" fill="#4a7aa6"/><circle cx="582.4" cy="70.3" r="2.2" fill="#4a7aa6"/><circle cx="527.6" cy="109.8" r="2.2" fill="#4a7aa6"/><circle cx="521.2" cy="489.9" r="2.2" fill="#4a7aa6"/><circle cx="538.3" cy="56.3" r="2.2" fill="#4a7aa6"/><circle cx="832.9" cy="77.9" r="2.2" fill="#4a7aa6"/><circle cx="731.9" cy="474.6" r="2.2" fill="#4a7aa6"/><circle cx="51.3" cy="11.0" r="2.2" fill="#4a7aa6"/><circle cx="770.0" cy="58.4" r="2.2" fill="#4a7aa6"/><circle cx="71.9" cy="216.8" r="2.2" fill="#4a7aa6"/><circle cx="730.3" cy="485.6" r="2.2" fill="#4a7aa6"/><circle cx="658.3" cy="112.2" r="2.2" fill="#4a7aa6"/><circle cx="140.5" cy="417.9" r="2.2" fill="#4a7aa6"/><circle cx="487.4" cy="225.6" r="2.2" fill="#4a7aa6"/><circle cx="704.7" cy="60.7" r="2.2" fill="#4a7aa6"/><circle cx="137.2" cy="477.7" r="2.2" fill="#4a7aa6"/><circle cx="145.9" cy="417.1" r="2.2" fill="#4a7aa6"/><circle cx="33.5" cy="562.6" r="2.2" fill="#4a7aa6"/><circle cx="680.0" cy="164.8" r="2.2" fill="#4a7aa6"/><circle cx="341.5" cy="453.3" r="2.2" fill="#4a7aa6"/><circle cx="15.5" cy="550.8" r="2.2" fill="#4a7aa6"/><circle cx="119.4" cy="331.6" r="2.2" fill="#4a7aa6"/><circle cx="106.3" cy="455.1" r="2.2" fill="#4a7aa6"/><circle cx="331.0" cy="339.0" r="2.2" fill="#4a7aa6"/><circle cx="515.1" cy="276.7" r="2.2" fill="#4a7aa6"/><circle cx="150.7" cy="238.2" r="2.2" fill="#4a7aa6"/><circle cx="561.1" cy="412.7" r="2.2" fill="#4a7aa6"/><circle cx="296.6" cy="78.7" r="2.2" fill="#4a7aa6"/><circle cx="306.0" cy="364.6" r="2.2" fill="#4a7aa6"/><circle cx="428.8" cy="401.5" r="2.2" fill="#4a7aa6"/><circle cx="156.0" cy="436.8" r="2.2" fill="#4a7aa6"/><circle cx="48.6" cy="70.2" r="2.2" fill="#4a7aa6"/><circle cx="574.7" cy="130.3" r="2.2" fill="#4a7aa6"/><circle cx="255.7" cy="300.7" r="2.2" fill="#4a7aa6"/><circle cx="352.4" cy="20.9" r="2.2" fill="#4a7aa6"/><circle cx="13.3" cy="407.6" r="2.2" fill="#4a7aa6"/><circle cx="449.0" cy="386.9" r="2.2" fill="#4a7aa6"/><circle cx="788.8" cy="179.0" r="2.2" fill="#4a7aa6"/><circle cx="733.1" cy="56.9" r="2.2" fill="#4a7aa6"/><circle cx="604.5" cy="273.3" r="2.2" fill="#4a7aa6"/><circle cx="310.0" cy="174.8" r="2.2" fill="#4a7aa6"/><circle cx="567.1" cy="461.9" r="2.2" fill="#4a7aa6"/><circle cx="774.8" cy="61.3" r="2.2" fill="#4a7aa6"/><circle cx="431.3" cy="443.1" r="2.2" fill="#4a7aa6"/><circle cx="496.4" cy="266.4" r="2.2" fill="#4a7aa6"/><circle cx="657.7" cy="143.5" r="2.2" fill="#4a7aa6"/><circle cx="208.3" cy="503.7" r="2.2" fill="#4a7aa6"/><circle cx="770.2" cy="118.0" r="2.2" fill="#4a7aa6"/><circle cx="506.9" cy="117.2" r="2.2" fill="#4a7aa6"/><circle cx="600.7" cy="312.7" r="2.2" fill="#4a7aa6"/><circle cx="547.5" cy="231.3" r="2.2" fill="#4a7aa6"/><circle cx="381.0" cy="360.5" r="2.2" fill="#4a7aa6"/><circle cx="12.5" cy="4.7" r="2.2" fill="#4a7aa6"/><circle cx="34.9" cy="523.4" r="2.2" fill="#4a7aa6"/><circle cx="493.9" cy="300.1" r="2.2" fill="#4a7aa6"/><circle cx="31.3" cy="542.2" r="2.2" fill="#4a7aa6"/><circle cx="832.6" cy="511.0" r="2.2" fill="#4a7aa6"/><circle cx="143.5" cy="477.4" r="2.2" fill="#4a7aa6"/><circle cx="611.4" cy="70.6" r="2.2" fill="#4a7aa6"/><circle cx="523.5" cy="120.0" r="2.2" fill="#4a7aa6"/><circle cx="343.8" cy="150.2" r="2.2" fill="#4a7aa6"/><circle cx="867.0" cy="21.5" r="2.2" fill="#4a7aa6"/><circle cx="485.6" cy="201.2" r="2.2" fill="#4a7aa6"/><circle cx="375.2" cy="394.0" r="2.2" fill="#4a7aa6"/><circle cx="215.0" cy="497.6" r="2.2" fill="#4a7aa6"/><circle cx="342.4" cy="161.9" r="2.2" fill="#4a7aa6"/><circle cx="14.7" cy="546.3" r="2.2" fill="#4a7aa6"/><circle cx="830.8" cy="46.4" r="2.2" fill="#4a7aa6"/><circle cx="847.6" cy="412.3" r="2.2" fill="#4a7aa6"/><circle cx="150.9" cy="318.9" r="2.2" fill="#4a7aa6"/><circle cx="314.4" cy="207.4" r="2.2" fill="#4a7aa6"/><circle cx="149.2" cy="76.0" r="2.2" fill="#4a7aa6"/><circle cx="810.7" cy="33.0" r="2.2" fill="#4a7aa6"/><circle cx="495.9" cy="88.8" r="2.2" fill="#4a7aa6"/><circle cx="593.6" cy="485.1" r="2.2" fill="#4a7aa6"/><circle cx="690.9" cy="171.6" r="2.2" fill="#4a7aa6"/><circle cx="230.1" cy="411.8" r="2.2" fill="#4a7aa6"/><circle cx="566.7" cy="119.4" r="2.2" fill="#4a7aa6"/><circle cx="801.7" cy="289.2" r="2.2" fill="#4a7aa6"/><circle cx="862.0" cy="29.8" r="2.2" fill="#4a7aa6"/><circle cx="404.3" cy="336.5" r="2.2" fill="#4a7aa6"/><circle cx="847.1" cy="26.5" r="2.2" fill="#4a7aa6"/><circle cx="769.2" cy="154.5" r="2.2" fill="#4a7aa6"/><circle cx="509.5" cy="257.9" r="2.2" fill="#4a7aa6"/><circle cx="651.2" cy="140.5" r="2.2" fill="#4a7aa6"/><circle cx="816.8" cy="54.8" r="2.2" fill="#4a7aa6"/><circle cx="436.3" cy="157.4" r="2.2" fill="#4a7aa6"/><circle cx="872.8" cy="12.8" r="2.2" fill="#4a7aa6"/><circle cx="652.6" cy="229.0" r="2.2" fill="#4a7aa6"/><circle cx="137.6" cy="447.7" r="2.2" fill="#4a7aa6"/><circle cx="826.1" cy="360.4" r="2.2" fill="#4a7aa6"/><circle cx="423.1" cy="256.1" r="2.2" fill="#4a7aa6"/><circle cx="765.7" cy="169.1" r="2.2" fill="#4a7aa6"/><circle cx="208.3" cy="377.2" r="2.2" fill="#4a7aa6"/><circle cx="341.2" cy="172.8" r="2.2" fill="#4a7aa6"/><circle cx="806.1" cy="18.0" r="2.2" fill="#4a7aa6"/><circle cx="236.5" cy="467.5" r="2.2" fill="#4a7aa6"/><circle cx="326.8" cy="375.1" r="2.2" fill="#4a7aa6"/><circle cx="197.1" cy="90.8" r="2.2" fill="#4a7aa6"/><circle cx="314.4" cy="403.0" r="2.2" fill="#4a7aa6"/><circle cx="1.1" cy="572.0" r="2.2" fill="#4a7aa6"/><circle cx="578.0" cy="238.3" r="2.2" fill="#4a7aa6"/><circle cx="363.2" cy="325.1" r="2.2" fill="#4a7aa6"/><circle cx="543.6" cy="298.3" r="2.2" fill="#4a7aa6"/><circle cx="90.8" cy="448.4" r="2.2" fill="#4a7aa6"/><circle cx="778.5" cy="113.3" r="2.2" fill="#4a7aa6"/><circle cx="692.7" cy="252.0" r="2.2" fill="#4a7aa6"/><circle cx="75.7" cy="445.9" r="2.2" fill="#4a7aa6"/><circle cx="698.9" cy="107.4" r="2.2" fill="#4a7aa6"/><circle cx="197.4" cy="187.8" r="2.2" fill="#4a7aa6"/><circle cx="510.2" cy="291.6" r="2.2" fill="#4a7aa6"/><circle cx="657.8" cy="169.5" r="2.2" fill="#4a7aa6"/><circle cx="813.0" cy="524.0" r="2.2" fill="#4a7aa6"/><circle cx="110.1" cy="515.6" r="2.2" fill="#4a7aa6"/><circle cx="4.7" cy="572.2" r="2.2" fill="#4a7aa6"/><circle cx="645.5" cy="42.5" r="2.2" fill="#4a7aa6"/><circle cx="141.1" cy="456.0" r="2.2" fill="#4a7aa6"/><circle cx="157.4" cy="483.8" r="2.2" fill="#4a7aa6"/><circle cx="437.1" cy="232.1" r="2.2" fill="#4a7aa6"/><circle cx="51.5" cy="531.3" r="2.2" fill="#4a7aa6"/><circle cx="287.6" cy="212.6" r="2.2" fill="#4a7aa6"/><circle cx="598.2" cy="167.8" r="2.2" fill="#4a7aa6"/><circle cx="2.8" cy="10.9" r="2.2" fill="#4a7aa6"/><circle cx="589.4" cy="534.3" r="2.2" fill="#4a7aa6"/><circle cx="219.1" cy="475.1" r="2.2" fill="#4a7aa6"/><circle cx="186.3" cy="372.7" r="2.2" fill="#4a7aa6"/><circle cx="280.1" cy="325.0" r="2.2" fill="#4a7aa6"/><circle cx="582.6" cy="102.2" r="2.2" fill="#4a7aa6"/><circle cx="286.0" cy="55.6" r="2.2" fill="#4a7aa6"/><circle cx="625.9" cy="557.6" r="2.2" fill="#4a7aa6"/><circle cx="712.8" cy="65.9" r="2.2" fill="#4a7aa6"/><circle cx="355.2" cy="368.2" r="2.2" fill="#4a7aa6"/><circle cx="29.5" cy="39.7" r="2.2" fill="#4a7aa6"/><circle cx="252.0" cy="226.1" r="2.2" fill="#4a7aa6"/><circle cx="810.5" cy="161.1" r="2.2" fill="#4a7aa6"/><circle cx="580.4" cy="213.2" r="2.2" fill="#4a7aa6"/><circle cx="448.9" cy="360.6" r="2.2" fill="#4a7aa6"/><circle cx="167.8" cy="453.0" r="2.2" fill="#4a7aa6"/><circle cx="524.9" cy="189.0" r="2.2" fill="#4a7aa6"/><circle cx="582.1" cy="190.0" r="2.2" fill="#4a7aa6"/><circle cx="321.0" cy="50.8" r="2.2" fill="#4a7aa6"/><circle cx="421.6" cy="266.0" r="2.2" fill="#4a7aa6"/><circle cx="337.3" cy="400.6" r="2.2" fill="#4a7aa6"/><circle cx="821.0" cy="26.5" r="2.2" fill="#4a7aa6"/><circle cx="626.0" cy="473.2" r="2.2" fill="#4a7aa6"/><circle cx="570.2" cy="134.7" r="2.2" fill="#4a7aa6"/><circle cx="592.3" cy="263.2" r="2.2" fill="#4a7aa6"/><circle cx="211.2" cy="203.1" r="2.2" fill="#4a7aa6"/><circle cx="450.2" cy="74.7" r="2.2" fill="#4a7aa6"/><circle cx="500.7" cy="492.3" r="2.2" fill="#4a7aa6"/><circle cx="98.5" cy="525.4" r="2.2" fill="#4a7aa6"/><circle cx="316.2" cy="358.1" r="2.2" fill="#4a7aa6"/><circle cx="11.9" cy="1.4" r="2.2" fill="#4a7aa6"/><circle cx="642.6" cy="184.7" r="2.2" fill="#4a7aa6"/><circle cx="600.6" cy="252.3" r="2.2" fill="#4a7aa6"/><circle cx="466.8" cy="259.9" r="2.2" fill="#4a7aa6"/><circle cx="327.7" cy="258.9" r="2.2" fill="#4a7aa6"/><circle cx="665.9" cy="111.2" r="2.2" fill="#4a7aa6"/><circle cx="20.8" cy="553.7" r="2.2" fill="#4a7aa6"/><circle cx="89.8" cy="383.1" r="2.2" fill="#4a7aa6"/><circle cx="247.7" cy="401.9" r="2.2" fill="#4a7aa6"/><circle cx="108.6" cy="543.2" r="2.2" fill="#4a7aa6"/><circle cx="90.3" cy="345.3" r="2.2" fill="#4a7aa6"/><circle cx="602.6" cy="205.4" r="2.2" fill="#4a7aa6"/><circle cx="91.0" cy="447.0" r="2.2" fill="#4a7aa6"/><circle cx="872.8" cy="3.8" r="2.2" fill="#4a7aa6"/><circle cx="91.8" cy="517.6" r="2.2" fill="#4a7aa6"/><circle cx="23.9" cy="31.6" r="2.2" fill="#4a7aa6"/><circle cx="831.1" cy="540.5" r="2.2" fill="#4a7aa6"/><circle cx="53.6" cy="507.0" r="2.2" fill="#4a7aa6"/><circle cx="16.3" cy="564.6" r="2.2" fill="#4a7aa6"/><circle cx="469.1" cy="432.0" r="2.2" fill="#4a7aa6"/><circle cx="198.5" cy="253.7" r="2.2" fill="#4a7aa6"/><circle cx="247.3" cy="160.9" r="2.2" fill="#4a7aa6"/><circle cx="142.6" cy="402.1" r="2.2" fill="#4a7aa6"/><circle cx="165.1" cy="466.7" r="2.2" fill="#4a7aa6"/><circle cx="288.9" cy="414.1" r="2.2" fill="#4a7aa6"/><circle cx="316.4" cy="216.8" r="2.2" fill="#4a7aa6"/><circle cx="687.3" cy="484.7" r="2.2" fill="#4a7aa6"/><circle cx="530.3" cy="303.9" r="2.2" fill="#4a7aa6"/><circle cx="226.1" cy="395.3" r="2.2" fill="#4a7aa6"/><circle cx="17.2" cy="557.1" r="2.2" fill="#4a7aa6"/><circle cx="130.7" cy="430.8" r="2.2" fill="#4a7aa6"/><circle cx="782.3" cy="189.0" r="2.2" fill="#4a7aa6"/><circle cx="42.5" cy="517.7" r="2.2" fill="#4a7aa6"/><circle cx="261.4" cy="397.5" r="2.2" fill="#4a7aa6"/><circle cx="522.1" cy="133.1" r="2.2" fill="#4a7aa6"/><circle cx="288.1" cy="108.3" r="2.2" fill="#4a7aa6"/><circle cx="293.6" cy="346.0" r="2.2" fill="#4a7aa6"/><circle cx="415.9" cy="207.9" r="2.2" fill="#4a7aa6"/><circle cx="108.3" cy="555.7" r="2.2" fill="#4a7aa6"/><circle cx="672.5" cy="190.5" r="2.2" fill="#4a7aa6"/><circle cx="708.2" cy="59.6" r="2.2" fill="#4a7aa6"/><circle cx="369.9" cy="279.4" r="2.2" fill="#4a7aa6"/><circle cx="374.1" cy="420.0" r="2.2" fill="#4a7aa6"/><circle cx="609.0" cy="387.6" r="2.2" fill="#4a7aa6"/><circle cx="25.7" cy="363.6" r="2.2" fill="#4a7aa6"/><circle cx="167.1" cy="468.4" r="2.2" fill="#4a7aa6"/><circle cx="627.6" cy="245.3" r="2.2" fill="#4a7aa6"/><circle cx="146.8" cy="485.2" r="2.2" fill="#4a7aa6"/><circle cx="305.9" cy="342.2" r="2.2" fill="#4a7aa6"/><circle cx="655.6" cy="343.5" r="2.2" fill="#4a7aa6"/><circle cx="587.1" cy="20.9" r="2.2" fill="#4a7aa6"/><circle cx="179.9" cy="198.1" r="2.2" fill="#4a7aa6"/><circle cx="77.8" cy="461.7" r="2.2" fill="#4a7aa6"/><circle cx="513.3" cy="442.8" r="2.2" fill="#4a7aa6"/><circle cx="471.8" cy="203.4" r="2.2" fill="#4a7aa6"/><circle cx="48.4" cy="118.1" r="2.2" fill="#4a7aa6"/><circle cx="231.9" cy="158.9" r="2.2" fill="#4a7aa6"/><circle cx="743.3" cy="80.0" r="2.2" fill="#4a7aa6"/><circle cx="98.2" cy="443.0" r="2.2" fill="#4a7aa6"/><circle cx="600.1" cy="174.6" r="2.2" fill="#4a7aa6"/><circle cx="87.7" cy="512.6" r="2.2" fill="#4a7aa6"/><circle cx="266.6" cy="474.2" r="2.2" fill="#4a7aa6"/><circle cx="579.4" cy="246.7" r="2.2" fill="#4a7aa6"/><circle cx="123.8" cy="458.1" r="2.2" fill="#4a7aa6"/><circle cx="197.9" cy="439.3" r="2.2" fill="#4a7aa6"/><circle cx="759.9" cy="143.5" r="2.2" fill="#4a7aa6"/><circle cx="488.3" cy="289.2" r="2.2" fill="#4a7aa6"/><circle cx="804.2" cy="45.6" r="2.2" fill="#4a7aa6"/><circle cx="605.5" cy="151.1" r="2.2" fill="#4a7aa6"/><circle cx="11.6" cy="545.6" r="2.2" fill="#4a7aa6"/><circle cx="762.5" cy="489.9" r="2.2" fill="#4a7aa6"/><circle cx="813.2" cy="56.5" r="2.2" fill="#4a7aa6"/><circle cx="171.1" cy="493.5" r="2.2" fill="#4a7aa6"/><circle cx="124.8" cy="465.1" r="2.2" fill="#4a7aa6"/><circle cx="71.7" cy="539.6" r="2.2" fill="#4a7aa6"/><circle cx="275.5" cy="86.6" r="2.2" fill="#4a7aa6"/><circle cx="256.7" cy="408.3" r="2.2" fill="#4a7aa6"/><circle cx="17.2" cy="559.6" r="2.2" fill="#4a7aa6"/><circle cx="225.5" cy="174.6" r="2.2" fill="#4a7aa6"/><circle cx="790.8" cy="360.1" r="2.2" fill="#4a7aa6"/><circle cx="190.6" cy="539.1" r="2.2" fill="#4a7aa6"/><circle cx="289.8" cy="336.1" r="2.2" fill="#4a7aa6"/><circle cx="675.8" cy="90.3" r="2.2" fill="#4a7aa6"/><circle cx="25.5" cy="498.1" r="2.2" fill="#4a7aa6"/><circle cx="502.9" cy="351.0" r="2.2" fill="#4a7aa6"/><circle cx="843.8" cy="27.6" r="2.2" fill="#4a7aa6"/><circle cx="335.9" cy="295.0" r="2.2" fill="#4a7aa6"/><circle cx="840.8" cy="46.4" r="2.2" fill="#4a7aa6"/><circle cx="83.4" cy="485.4" r="2.2" fill="#4a7aa6"/><circle cx="135.0" cy="54.8" r="2.2" fill="#4a7aa6"/><circle cx="420.3" cy="393.8" r="2.2" fill="#4a7aa6"/><circle cx="614.8" cy="181.3" r="2.2" fill="#4a7aa6"/><circle cx="29.4" cy="9.2" r="2.2" fill="#4a7aa6"/><circle cx="727.4" cy="245.4" r="2.2" fill="#4a7aa6"/><circle cx="699.0" cy="535.5" r="2.2" fill="#4a7aa6"/><circle cx="369.0" cy="403.5" r="2.2" fill="#4a7aa6"/><circle cx="754.7" cy="166.8" r="2.2" fill="#4a7aa6"/><circle cx="95.3" cy="538.3" r="2.2" fill="#4a7aa6"/><circle cx="626.5" cy="417.3" r="2.2" fill="#4a7aa6"/><circle cx="863.7" cy="393.3" r="2.2" fill="#4a7aa6"/><circle cx="330.8" cy="223.9" r="2.2" fill="#4a7aa6"/><circle cx="614.9" cy="343.4" r="2.2" fill="#4a7aa6"/><circle cx="342.7" cy="154.5" r="2.2" fill="#4a7aa6"/><circle cx="883.1" cy="569.5" r="2.2" fill="#4a7aa6"/><circle cx="800.1" cy="33.6" r="2.2" fill="#4a7aa6"/><circle cx="610.0" cy="76.6" r="2.2" fill="#4a7aa6"/><circle cx="232.2" cy="341.2" r="2.2" fill="#4a7aa6"/><circle cx="299.0" cy="261.1" r="2.2" fill="#4a7aa6"/><circle cx="752.0" cy="295.2" r="2.2" fill="#4a7aa6"/><circle cx="601.9" cy="462.9" r="2.2" fill="#4a7aa6"/><circle cx="867.6" cy="570.0" r="2.2" fill="#4a7aa6"/><circle cx="138.6" cy="106.2" r="2.2" fill="#4a7aa6"/><circle cx="261.1" cy="262.5" r="2.2" fill="#4a7aa6"/><circle cx="355.5" cy="222.8" r="2.2" fill="#4a7aa6"/><circle cx="231.3" cy="501.3" r="2.2" fill="#4a7aa6"/><circle cx="331.8" cy="471.9" r="2.2" fill="#4a7aa6"/><circle cx="589.5" cy="212.9" r="2.2" fill="#4a7aa6"/><circle cx="320.8" cy="151.2" r="2.2" fill="#4a7aa6"/><circle cx="110.5" cy="521.4" r="2.2" fill="#4a7aa6"/><circle cx="486.5" cy="172.0" r="2.2" fill="#4a7aa6"/><circle cx="659.2" cy="81.2" r="2.2" fill="#4a7aa6"/><circle cx="470.7" cy="178.3" r="2.2" fill="#4a7aa6"/><circle cx="367.5" cy="143.0" r="2.2" fill="#4a7aa6"/><circle cx="145.0" cy="229.1" r="2.2" fill="#4a7aa6"/><circle cx="350.8" cy="403.3" r="2.2" fill="#4a7aa6"/><circle cx="350.8" cy="337.6" r="2.2" fill="#4a7aa6"/><circle cx="722.7" cy="177.7" r="2.2" fill="#4a7aa6"/><circle cx="702.6" cy="173.7" r="2.2" fill="#4a7aa6"/><circle cx="257.7" cy="337.9" r="2.2" fill="#4a7aa6"/><circle cx="33.5" cy="538.6" r="2.2" fill="#4a7aa6"/><circle cx="759.9" cy="471.4" r="2.2" fill="#4a7aa6"/><circle cx="849.5" cy="54.4" r="2.2" fill="#4a7aa6"/><circle cx="570.8" cy="183.5" r="2.2" fill="#4a7aa6"/><circle cx="58.4" cy="65.0" r="2.2" fill="#4a7aa6"/><circle cx="232.1" cy="411.3" r="2.2" fill="#4a7aa6"/><circle cx="417.1" cy="221.8" r="2.2" fill="#4a7aa6"/><circle cx="69.8" cy="200.3" r="2.2" fill="#4a7aa6"/><circle cx="865.9" cy="561.4" r="2.2" fill="#4a7aa6"/><circle cx="77.5" cy="506.2" r="2.2" fill="#4a7aa6"/><circle cx="871.6" cy="5.1" r="2.2" fill="#4a7aa6"/><circle cx="321.2" cy="353.6" r="2.2" fill="#4a7aa6"/><circle cx="718.0" cy="91.4" r="2.2" fill="#4a7aa6"/><circle cx="801.1" cy="396.2" r="2.2" fill="#4a7aa6"/><circle cx="127.8" cy="535.8" r="2.2" fill="#4a7aa6"/><circle cx="185.6" cy="187.2" r="2.2" fill="#4a7aa6"/><circle cx="628.6" cy="510.6" r="2.2" fill="#4a7aa6"/><circle cx="215.9" cy="171.0" r="2.2" fill="#4a7aa6"/><circle cx="452.1" cy="294.1" r="2.2" fill="#4a7aa6"/><circle cx="235.5" cy="421.5" r="2.2" fill="#4a7aa6"/><circle cx="420.2" cy="555.4" r="2.2" fill="#4a7aa6"/><circle cx="131.7" cy="539.9" r="2.2" fill="#4a7aa6"/><circle cx="220.7" cy="391.3" r="2.2" fill="#4a7aa6"/><circle cx="806.9" cy="141.6" r="2.2" fill="#4a7aa6"/><circle cx="748.0" cy="35.8" r="2.2" fill="#4a7aa6"/><circle cx="526.3" cy="253.3" r="2.2" fill="#4a7aa6"/><circle cx="531.6" cy="435.7" r="2.2" fill="#4a7aa6"/><circle cx="466.4" cy="303.4" r="2.2" fill="#4a7aa6"/><circle cx="49.0" cy="539.1" r="2.2" fill="#4a7aa6"/><circle cx="89.9" cy="69.1" r="2.2" fill="#4a7aa6"/><circle cx="370.3" cy="508.5" r="2.2" fill="#4a7aa6"/><circle cx="88.7" cy="545.0" r="2.2" fill="#4a7aa6"/><circle cx="807.6" cy="539.4" r="2.2" fill="#4a7aa6"/><circle cx="836.6" cy="526.5" r="2.2" fill="#4a7aa6"/><circle cx="334.2" cy="450.4" r="2.2" fill="#4a7aa6"/><circle cx="252.9" cy="80.1" r="2.2" fill="#4a7aa6"/><circle cx="262.1" cy="225.4" r="2.2" fill="#4a7aa6"/><circle cx="61.4" cy="110.0" r="2.2" fill="#4a7aa6"/><circle cx="677.3" cy="434.1" r="2.2" fill="#4a7aa6"/><circle cx="546.5" cy="258.0" r="2.2" fill="#4a7aa6"/><circle cx="577.1" cy="511.5" r="2.2" fill="#4a7aa6"/><circle cx="554.4" cy="542.9" r="2.2" fill="#4a7aa6"/><circle cx="474.0" cy="14.1" r="2.2" fill="#4a7aa6"/><circle cx="868.2" cy="284.3" r="2.2" fill="#4a7aa6"/><circle cx="754.1" cy="457.7" r="2.2" fill="#4a7aa6"/><circle cx="730.5" cy="465.6" r="2.2" fill="#4a7aa6"/><circle cx="834.4" cy="137.9" r="2.2" fill="#4a7aa6"/><circle cx="500.2" cy="185.8" r="2.2" fill="#4a7aa6"/><circle cx="52.6" cy="545.7" r="2.2" fill="#4a7aa6"/><circle cx="761.4" cy="50.1" r="2.2" fill="#4a7aa6"/><circle cx="764.1" cy="153.8" r="2.2" fill="#4a7aa6"/><circle cx="213.1" cy="193.5" r="2.2" fill="#4a7aa6"/><circle cx="598.5" cy="176.2" r="2.2" fill="#4a7aa6"/><circle cx="308.7" cy="464.7" r="2.2" fill="#4a7aa6"/><circle cx="507.7" cy="330.5" r="2.2" fill="#4a7aa6"/><circle cx="736.0" cy="513.7" r="2.2" fill="#4a7aa6"/><circle cx="770.5" cy="193.6" r="2.2" fill="#4a7aa6"/><circle cx="564.3" cy="174.0" r="2.2" fill="#4a7aa6"/><circle cx="579.6" cy="292.6" r="2.2" fill="#4a7aa6"/><circle cx="269.1" cy="479.1" r="2.2" fill="#4a7aa6"/><circle cx="739.5" cy="92.5" r="2.2" fill="#4a7aa6"/><circle cx="555.9" cy="250.1" r="2.2" fill="#4a7aa6"/><circle cx="808.2" cy="56.3" r="2.2" fill="#4a7aa6"/><circle cx="152.0" cy="527.7" r="2.2" fill="#4a7aa6"/><circle cx="878.4" cy="14.2" r="2.2" fill="#4a7aa6"/><circle cx="9.1" cy="5.2" r="2.2" fill="#4a7aa6"/><circle cx="841.7" cy="68.8" r="2.2" fill="#4a7aa6"/><circle cx="756.3" cy="89.1" r="2.2" fill="#4a7aa6"/><circle cx="732.1" cy="182.8" r="2.2" fill="#4a7aa6"/><circle cx="520.5" cy="254.2" r="2.2" fill="#4a7aa6"/><circle cx="774.3" cy="227.5" r="2.2" fill="#4a7aa6"/><circle cx="337.4" cy="421.3" r="2.2" fill="#4a7aa6"/><circle cx="363.8" cy="68.3" r="2.2" fill="#4a7aa6"/><circle cx="599.6" cy="454.5" r="2.2" fill="#4a7aa6"/><circle cx="162.4" cy="258.9" r="2.2" fill="#4a7aa6"/><circle cx="317.6" cy="438.1" r="2.2" fill="#4a7aa6"/><circle cx="220.5" cy="531.9" r="2.2" fill="#4a7aa6"/><circle cx="807.9" cy="405.5" r="2.2" fill="#4a7aa6"/><circle cx="89.0" cy="562.9" r="2.2" fill="#4a7aa6"/><circle cx="529.3" cy="111.7" r="2.2" fill="#4a7aa6"/><circle cx="392.6" cy="322.2" r="2.2" fill="#4a7aa6"/><circle cx="184.0" cy="354.1" r="2.2" fill="#4a7aa6"/><circle cx="587.5" cy="348.9" r="2.2" fill="#4a7aa6"/><circle cx="38.2" cy="538.0" r="2.2" fill="#4a7aa6"/><circle cx="30.1" cy="204.5" r="2.2" fill="#4a7aa6"/><circle cx="310.1" cy="448.3" r="2.2" fill="#4a7aa6"/><circle cx="290.8" cy="178.5" r="2.2" fill="#4a7aa6"/><circle cx="661.4" cy="421.5" r="2.2" fill="#4a7aa6"/><circle cx="676.4" cy="137.7" r="2.2" fill="#4a7aa6"/><circle cx="253.4" cy="234.4" r="2.2" fill="#4a7aa6"/><circle cx="598.8" cy="256.1" r="2.2" fill="#4a7aa6"/><circle cx="489.2" cy="354.9" r="2.2" fill="#4a7aa6"/><circle cx="493.0" cy="97.0" r="2.2" fill="#4a7aa6"/><circle cx="202.9" cy="209.8" r="2.2" fill="#4a7aa6"/><circle cx="298.1" cy="302.2" r="2.2" fill="#4a7aa6"/><circle cx="142.7" cy="278.5" r="2.2" fill="#4a7aa6"/><circle cx="754.2" cy="51.2" r="2.2" fill="#4a7aa6"/><circle cx="830.8" cy="51.6" r="2.2" fill="#4a7aa6"/><circle cx="443.0" cy="137.5" r="2.2" fill="#4a7aa6"/><circle cx="106.9" cy="449.0" r="2.2" fill="#4a7aa6"/><circle cx="808.3" cy="58.5" r="2.2" fill="#4a7aa6"/><circle cx="858.6" cy="565.3" r="2.2" fill="#4a7aa6"/><circle cx="711.4" cy="175.8" r="2.2" fill="#4a7aa6"/><circle cx="223.1" cy="181.2" r="2.2" fill="#4a7aa6"/><circle cx="200.2" cy="420.1" r="2.2" fill="#4a7aa6"/><circle cx="315.1" cy="215.9" r="2.2" fill="#4a7aa6"/><circle cx="407.3" cy="72.2" r="2.2" fill="#4a7aa6"/><circle cx="177.6" cy="189.9" r="2.2" fill="#4a7aa6"/><circle cx="264.1" cy="388.3" r="2.2" fill="#4a7aa6"/><circle cx="348.7" cy="321.1" r="2.2" fill="#4a7aa6"/><circle cx="167.6" cy="320.3" r="2.2" fill="#4a7aa6"/><circle cx="178.2" cy="373.4" r="2.2" fill="#4a7aa6"/><circle cx="30.4" cy="71.4" r="2.2" fill="#4a7aa6"/><circle cx="133.4" cy="176.3" r="2.2" fill="#4a7aa6"/><circle cx="783.5" cy="71.1" r="2.2" fill="#4a7aa6"/><circle cx="838.1" cy="98.2" r="2.2" fill="#4a7aa6"/><circle cx="53.4" cy="547.8" r="2.2" fill="#4a7aa6"/><circle cx="599.1" cy="522.5" r="2.2" fill="#4a7aa6"/><circle cx="793.3" cy="487.1" r="2.2" fill="#4a7aa6"/><circle cx="794.0" cy="282.4" r="2.2" fill="#4a7aa6"/><circle cx="832.9" cy="50.5" r="2.2" fill="#4a7aa6"/><circle cx="812.0" cy="51.9" r="2.2" fill="#4a7aa6"/><circle cx="137.8" cy="380.4" r="2.2" fill="#4a7aa6"/><circle cx="704.4" cy="72.5" r="2.2" fill="#4a7aa6"/><circle cx="15.1" cy="391.3" r="2.2" fill="#4a7aa6"/><circle cx="217.1" cy="465.0" r="2.2" fill="#4a7aa6"/><circle cx="28.0" cy="540.5" r="2.2" fill="#4a7aa6"/><circle cx="626.2" cy="471.0" r="2.2" fill="#4a7aa6"/><circle cx="183.1" cy="444.5" r="2.2" fill="#4a7aa6"/><circle cx="596.1" cy="517.0" r="2.2" fill="#4a7aa6"/><circle cx="373.1" cy="471.9" r="2.2" fill="#4a7aa6"/><circle cx="209.9" cy="288.9" r="2.2" fill="#4a7aa6"/><circle cx="327.1" cy="368.6" r="2.2" fill="#4a7aa6"/><circle cx="8.7" cy="569.6" r="2.2" fill="#4a7aa6"/><circle cx="740.3" cy="94.1" r="2.2" fill="#4a7aa6"/><circle cx="179.2" cy="212.6" r="2.2" fill="#4a7aa6"/><circle cx="31.7" cy="69.0" r="2.2" fill="#4a7aa6"/><circle cx="850.0" cy="42.6" r="2.2" fill="#4a7aa6"/><circle cx="676.5" cy="432.3" r="2.2" fill="#4a7aa6"/><circle cx="794.9" cy="132.3" r="2.2" fill="#4a7aa6"/><circle cx="794.2" cy="454.7" r="2.2" fill="#4a7aa6"/><circle cx="275.9" cy="279.4" r="2.2" fill="#4a7aa6"/><circle cx="535.8" cy="210.7" r="2.2" fill="#4a7aa6"/><circle cx="384.5" cy="262.8" r="2.2" fill="#4a7aa6"/><circle cx="295.1" cy="302.0" r="2.2" fill="#4a7aa6"/><circle cx="379.9" cy="479.5" r="2.2" fill="#4a7aa6"/><circle cx="650.6" cy="328.1" r="2.2" fill="#4a7aa6"/><circle cx="211.7" cy="337.0" r="2.2" fill="#4a7aa6"/><circle cx="531.4" cy="207.9" r="2.2" fill="#4a7aa6"/><circle cx="346.4" cy="328.6" r="2.2" fill="#4a7aa6"/><circle cx="715.9" cy="432.0" r="2.2" fill="#4a7aa6"/><circle cx="141.6" cy="201.8" r="2.2" fill="#4a7aa6"/><circle cx="244.1" cy="318.0" r="2.2" fill="#4a7aa6"/><circle cx="430.6" cy="471.6" r="2.2" fill="#4a7aa6"/><circle cx="179.1" cy="243.6" r="2.2" fill="#4a7aa6"/><circle cx="676.7" cy="144.3" r="2.2" fill="#4a7aa6"/><circle cx="503.6" cy="364.1" r="2.2" fill="#4a7aa6"/><circle cx="56.9" cy="54.1" r="2.2" fill="#4a7aa6"/><circle cx="721.9" cy="275.4" r="2.2" fill="#4a7aa6"/><circle cx="834.6" cy="32.2" r="2.2" fill="#4a7aa6"/><circle cx="596.7" cy="278.5" r="2.2" fill="#4a7aa6"/><circle cx="5.2" cy="569.5" r="2.2" fill="#4a7aa6"/><circle cx="202.3" cy="91.8" r="2.2" fill="#4a7aa6"/><circle cx="302.6" cy="156.9" r="2.2" fill="#4a7aa6"/><circle cx="354.9" cy="140.3" r="2.2" fill="#4a7aa6"/><circle cx="155.9" cy="499.0" r="2.2" fill="#4a7aa6"/><circle cx="625.9" cy="121.2" r="2.2" fill="#4a7aa6"/><circle cx="363.4" cy="436.2" r="2.2" fill="#4a7aa6"/><circle cx="697.4" cy="114.9" r="2.2" fill="#4a7aa6"/><circle cx="440.7" cy="258.6" r="2.2" fill="#4a7aa6"/><circle cx="567.2" cy="235.2" r="2.2" fill="#4a7aa6"/><circle cx="31.9" cy="514.8" r="2.2" fill="#4a7aa6"/><circle cx="616.7" cy="315.2" r="2.2" fill="#4a7aa6"/><circle cx="198.5" cy="377.7" r="2.2" fill="#4a7aa6"/><circle cx="234.1" cy="490.7" r="2.2" fill="#4a7aa6"/><circle cx="738.6" cy="88.6" r="2.2" fill="#4a7aa6"/><circle cx="858.5" cy="90.5" r="2.2" fill="#4a7aa6"/><circle cx="494.3" cy="161.4" r="2.2" fill="#4a7aa6"/><circle cx="117.4" cy="224.2" r="2.2" fill="#4a7aa6"/><circle cx="404.3" cy="341.2" r="2.2" fill="#4a7aa6"/><circle cx="709.9" cy="46.4" r="2.2" fill="#4a7aa6"/><circle cx="608.3" cy="92.0" r="2.2" fill="#4a7aa6"/><circle cx="426.0" cy="405.3" r="2.2" fill="#4a7aa6"/><circle cx="642.4" cy="233.8" r="2.2" fill="#4a7aa6"/><circle cx="738.5" cy="505.0" r="2.2" fill="#4a7aa6"/><circle cx="541.3" cy="160.4" r="2.2" fill="#4a7aa6"/><circle cx="170.6" cy="67.6" r="2.2" fill="#4a7aa6"/><circle cx="624.5" cy="233.3" r="2.2" fill="#4a7aa6"/><circle cx="668.8" cy="170.6" r="2.2" fill="#4a7aa6"/><circle cx="279.7" cy="434.4" r="2.2" fill="#4a7aa6"/><circle cx="190.3" cy="107.8" r="2.2" fill="#4a7aa6"/><circle cx="633.0" cy="303.7" r="2.2" fill="#4a7aa6"/><circle cx="681.8" cy="266.3" r="2.2" fill="#4a7aa6"/><circle cx="58.0" cy="535.6" r="2.2" fill="#4a7aa6"/><circle cx="685.6" cy="170.4" r="2.2" fill="#4a7aa6"/><circle cx="29.2" cy="171.4" r="2.2" fill="#4a7aa6"/><circle cx="166.8" cy="222.6" r="2.2" fill="#4a7aa6"/><circle cx="820.6" cy="74.9" r="2.2" fill="#4a7aa6"/><circle cx="743.8" cy="483.6" r="2.2" fill="#4a7aa6"/><circle cx="256.1" cy="403.4" r="2.2" fill="#4a7aa6"/><circle cx="73.8" cy="530.5" r="2.2" fill="#4a7aa6"/><circle cx="460.3" cy="307.6" r="2.2" fill="#4a7aa6"/><circle cx="540.0" cy="222.1" r="2.2" fill="#4a7aa6"/><circle cx="590.9" cy="146.6" r="2.2" fill="#4a7aa6"/><circle cx="540.9" cy="188.6" r="2.2" fill="#4a7aa6"/><circle cx="770.1" cy="477.9" r="2.2" fill="#4a7aa6"/><circle cx="459.7" cy="409.9" r="2.2" fill="#4a7aa6"/><circle cx="384.6" cy="92.6" r="2.2" fill="#4a7aa6"/><circle cx="163.6" cy="473.7" r="2.2" fill="#4a7aa6"/><circle cx="873.3" cy="3.5" r="2.2" fill="#4a7aa6"/><circle cx="514.6" cy="298.5" r="2.2" fill="#4a7aa6"/><circle cx="363.9" cy="58.2" r="2.2" fill="#4a7aa6"/><circle cx="703.6" cy="197.5" r="2.2" fill="#4a7aa6"/><circle cx="859.2" cy="537.6" r="2.2" fill="#4a7aa6"/><circle cx="394.7" cy="366.0" r="2.2" fill="#4a7aa6"/><circle cx="544.8" cy="330.1" r="2.2" fill="#4a7aa6"/><circle cx="709.8" cy="185.8" r="2.2" fill="#4a7aa6"/><circle cx="88.9" cy="36.9" r="2.2" fill="#4a7aa6"/><circle cx="375.3" cy="468.4" r="2.2" fill="#4a7aa6"/><circle cx="679.6" cy="374.5" r="2.2" fill="#4a7aa6"/><circle cx="354.7" cy="155.7" r="2.2" fill="#4a7aa6"/><circle cx="43.6" cy="544.3" r="2.2" fill="#4a7aa6"/><circle cx="624.1" cy="62.5" r="2.2" fill="#4a7aa6"/><circle cx="24.9" cy="15.4" r="2.2" fill="#4a7aa6"/><circle cx="22.4" cy="523.1" r="2.2" fill="#4a7aa6"/><circle cx="855.5" cy="53.0" r="2.2" fill="#4a7aa6"/><circle cx="862.8" cy="8.6" r="2.2" fill="#4a7aa6"/><circle cx="702.8" cy="119.9" r="2.2" fill="#4a7aa6"/><circle cx="533.3" cy="219.7" r="2.2" fill="#4a7aa6"/><circle cx="243.8" cy="345.7" r="2.2" fill="#4a7aa6"/><circle cx="721.9" cy="142.3" r="2.2" fill="#4a7aa6"/><circle cx="347.3" cy="417.2" r="2.2" fill="#4a7aa6"/><circle cx="22.5" cy="556.4" r="2.2" fill="#4a7aa6"/><circle cx="560.8" cy="241.1" r="2.2" fill="#4a7aa6"/><circle cx="81.7" cy="114.1" r="2.2" fill="#4a7aa6"/><circle cx="370.8" cy="426.4" r="2.2" fill="#4a7aa6"/><circle cx="516.9" cy="315.0" r="2.2" fill="#4a7aa6"/><circle cx="723.1" cy="239.0" r="2.2" fill="#4a7aa6"/><circle cx="4.1" cy="571.8" r="2.2" fill="#4a7aa6"/><circle cx="249.9" cy="485.4" r="2.2" fill="#4a7aa6"/><circle cx="106.3" cy="542.9" r="2.2" fill="#4a7aa6"/><circle cx="352.5" cy="401.6" r="2.2" fill="#4a7aa6"/><circle cx="169.5" cy="479.2" r="2.2" fill="#4a7aa6"/><circle cx="317.2" cy="157.8" r="2.2" fill="#4a7aa6"/><circle cx="611.9" cy="112.2" r="2.2" fill="#4a7aa6"/><circle cx="213.1" cy="310.1" r="2.2" fill="#4a7aa6"/><circle cx="221.5" cy="455.5" r="2.2" fill="#4a7aa6"/><circle cx="193.1" cy="304.0" r="2.2" fill="#4a7aa6"/><circle cx="867.1" cy="7.4" r="2.2" fill="#4a7aa6"/><circle cx="428.8" cy="416.5" r="2.2" fill="#4a7aa6"/><circle cx="467.7" cy="458.8" r="2.2" fill="#4a7aa6"/><circle cx="672.4" cy="375.3" r="2.2" fill="#4a7aa6"/><circle cx="777.7" cy="12.9" r="2.2" fill="#4a7aa6"/><circle cx="632.4" cy="134.0" r="2.2" fill="#4a7aa6"/><circle cx="404.2" cy="279.7" r="2.2" fill="#4a7aa6"/><circle cx="155.9" cy="538.4" r="2.2" fill="#4a7aa6"/><circle cx="97.8" cy="514.6" r="2.2" fill="#4a7aa6"/><circle cx="370.9" cy="174.9" r="2.2" fill="#4a7aa6"/><circle cx="284.1" cy="199.4" r="2.2" fill="#4a7aa6"/><circle cx="611.7" cy="79.2" r="2.2" fill="#4a7aa6"/><circle cx="157.1" cy="469.1" r="2.2" fill="#4a7aa6"/><circle cx="357.2" cy="272.6" r="2.2" fill="#4a7aa6"/><circle cx="688.9" cy="201.2" r="2.2" fill="#4a7aa6"/><circle cx="811.7" cy="95.5" r="2.2" fill="#4a7aa6"/><circle cx="827.8" cy="94.7" r="2.2" fill="#4a7aa6"/><circle cx="216.1" cy="200.7" r="2.2" fill="#4a7aa6"/><circle cx="272.5" cy="399.5" r="2.2" fill="#4a7aa6"/><circle cx="230.0" cy="420.9" r="2.2" fill="#4a7aa6"/><circle cx="70.2" cy="16.8" r="2.2" fill="#4a7aa6"/><circle cx="571.1" cy="203.8" r="2.2" fill="#4a7aa6"/><circle cx="439.6" cy="289.4" r="2.2" fill="#4a7aa6"/><circle cx="723.2" cy="186.9" r="2.2" fill="#4a7aa6"/><circle cx="617.6" cy="106.5" r="2.2" fill="#4a7aa6"/><circle cx="382.5" cy="306.5" r="2.2" fill="#4a7aa6"/><circle cx="6.8" cy="561.4" r="2.2" fill="#4a7aa6"/><circle cx="843.2" cy="32.8" r="2.2" fill="#4a7aa6"/><circle cx="65.0" cy="13.1" r="2.2" fill="#4a7aa6"/><circle cx="402.8" cy="258.3" r="2.2" fill="#4a7aa6"/><circle cx="455.6" cy="231.5" r="2.2" fill="#4a7aa6"/><circle cx="27.2" cy="549.0" r="2.2" fill="#4a7aa6"/><circle cx="711.9" cy="98.0" r="2.2" fill="#4a7aa6"/><circle cx="126.7" cy="470.9" r="2.2" fill="#4a7aa6"/><circle cx="864.3" cy="12.1" r="2.2" fill="#4a7aa6"/><circle cx="31.6" cy="559.4" r="2.2" fill="#4a7aa6"/><circle cx="773.9" cy="71.7" r="2.2" fill="#4a7aa6"/><circle cx="572.1" cy="454.1" r="2.2" fill="#4a7aa6"/><circle cx="840.0" cy="51.2" r="2.2" fill="#4a7aa6"/><circle cx="379.3" cy="166.6" r="2.2" fill="#4a7aa6"/><circle cx="333.7" cy="274.1" r="2.2" fill="#4a7aa6"/><circle cx="877.8" cy="3.5" r="2.2" fill="#4a7aa6"/><circle cx="231.6" cy="69.5" r="2.2" fill="#4a7aa6"/><circle cx="859.2" cy="3.2" r="2.2" fill="#4a7aa6"/><circle cx="817.1" cy="90.4" r="2.2" fill="#4a7aa6"/><circle cx="438.9" cy="152.4" r="2.2" fill="#4a7aa6"/><circle cx="641.3" cy="121.7" r="2.2" fill="#4a7aa6"/><circle cx="137.5" cy="499.1" r="2.2" fill="#4a7aa6"/><circle cx="541.0" cy="251.3" r="2.2" fill="#4a7aa6"/><circle cx="816.6" cy="475.7" r="2.2" fill="#4a7aa6"/><circle cx="338.8" cy="99.0" r="2.2" fill="#4a7aa6"/><circle cx="562.8" cy="314.0" r="2.2" fill="#4a7aa6"/><circle cx="201.5" cy="369.6" r="2.2" fill="#4a7aa6"/><circle cx="220.9" cy="322.3" r="2.2" fill="#4a7aa6"/><circle cx="861.7" cy="13.2" r="2.2" fill="#4a7aa6"/><circle cx="591.0" cy="127.9" r="2.2" fill="#4a7aa6"/><circle cx="187.0" cy="272.0" r="2.2" fill="#4a7aa6"/><circle cx="357.1" cy="359.9" r="2.2" fill="#4a7aa6"/><circle cx="563.8" cy="235.1" r="2.2" fill="#4a7aa6"/><circle cx="773.5" cy="35.5" r="2.2" fill="#4a7aa6"/><circle cx="721.3" cy="490.7" r="2.2" fill="#4a7aa6"/><circle cx="859.1" cy="403.5" r="2.2" fill="#4a7aa6"/><circle cx="358.9" cy="243.9" r="2.2" fill="#4a7aa6"/><circle cx="826.3" cy="94.9" r="2.2" fill="#4a7aa6"/><circle cx="798.0" cy="35.1" r="2.2" fill="#4a7aa6"/><circle cx="827.5" cy="501.5" r="2.2" fill="#4a7aa6"/><circle cx="146.4" cy="453.8" r="2.2" fill="#4a7aa6"/><circle cx="768.0" cy="59.7" r="2.2" fill="#4a7aa6"/><circle cx="468.9" cy="428.3" r="2.2" fill="#4a7aa6"/><circle cx="540.2" cy="111.2" r="2.2" fill="#4a7aa6"/><circle cx="179.8" cy="484.0" r="2.2" fill="#4a7aa6"/><circle cx="879.9" cy="4.1" r="2.2" fill="#4a7aa6"/><circle cx="345.2" cy="133.3" r="2.2" fill="#4a7aa6"/><circle cx="86.6" cy="101.2" r="2.2" fill="#4a7aa6"/><circle cx="573.3" cy="311.3" r="2.2" fill="#4a7aa6"/><circle cx="661.3" cy="320.2" r="2.2" fill="#4a7aa6"/><circle cx="243.7" cy="499.6" r="2.2" fill="#4a7aa6"/><circle cx="212.5" cy="430.2" r="2.2" fill="#4a7aa6"/><circle cx="321.3" cy="495.3" r="2.2" fill="#4a7aa6"/><circle cx="667.8" cy="48.7" r="2.2" fill="#4a7aa6"/><circle cx="599.6" cy="161.2" r="2.2" fill="#4a7aa6"/><circle cx="627.8" cy="192.0" r="2.2" fill="#4a7aa6"/><circle cx="89.4" cy="378.5" r="2.2" fill="#4a7aa6"/><circle cx="296.2" cy="420.4" r="2.2" fill="#4a7aa6"/><circle cx="642.6" cy="149.0" r="2.2" fill="#4a7aa6"/><circle cx="551.8" cy="259.2" r="2.2" fill="#4a7aa6"/><circle cx="864.7" cy="17.8" r="2.2" fill="#4a7aa6"/><circle cx="78.9" cy="89.6" r="2.2" fill="#4a7aa6"/><circle cx="494.8" cy="344.1" r="2.2" fill="#4a7aa6"/><circle cx="138.4" cy="470.3" r="2.2" fill="#4a7aa6"/><circle cx="105.0" cy="513.5" r="2.2" fill="#4a7aa6"/><circle cx="374.3" cy="283.2" r="2.2" fill="#4a7aa6"/><circle cx="810.6" cy="71.9" r="2.2" fill="#4a7aa6"/><circle cx="576.5" cy="125.5" r="2.2" fill="#4a7aa6"/><circle cx="756.5" cy="152.1" r="2.2" fill="#4a7aa6"/><circle cx="44.3" cy="500.4" r="2.2" fill="#4a7aa6"/><circle cx="819.7" cy="37.8" r="2.2" fill="#4a7aa6"/><circle cx="613.2" cy="285.2" r="2.2" fill="#4a7aa6"/><circle cx="763.5" cy="435.4" r="2.2" fill="#4a7aa6"/><circle cx="95.1" cy="519.9" r="2.2" fill="#4a7aa6"/><circle cx="681.8" cy="394.0" r="2.2" fill="#4a7aa6"/><circle cx="122.6" cy="481.4" r="2.2" fill="#4a7aa6"/><circle cx="521.0" cy="182.7" r="2.2" fill="#4a7aa6"/><circle cx="791.9" cy="3.0" r="2.2" fill="#4a7aa6"/><circle cx="836.2" cy="29.1" r="2.2" fill="#4a7aa6"/><circle cx="234.3" cy="408.5" r="2.2" fill="#4a7aa6"/><circle cx="132.6" cy="514.6" r="2.2" fill="#4a7aa6"/><circle cx="637.3" cy="211.6" r="2.2" fill="#4a7aa6"/><circle cx="301.3" cy="236.8" r="2.2" fill="#4a7aa6"/><circle cx="800.9" cy="70.7" r="2.2" fill="#4a7aa6"/><circle cx="268.3" cy="396.4" r="2.2" fill="#4a7aa6"/><circle cx="90.0" cy="28.6" r="2.2" fill="#4a7aa6"/><circle cx="217.6" cy="269.1" r="2.2" fill="#4a7aa6"/><circle cx="575.5" cy="380.5" r="2.2" fill="#4a7aa6"/><circle cx="213.2" cy="288.1" r="2.2" fill="#4a7aa6"/><circle cx="791.6" cy="110.1" r="2.2" fill="#4a7aa6"/><circle cx="373.4" cy="400.7" r="2.2" fill="#4a7aa6"/><circle cx="835.6" cy="79.0" r="2.2" fill="#4a7aa6"/><circle cx="859.8" cy="8.4" r="2.2" fill="#4a7aa6"/><circle cx="716.0" cy="51.3" r="2.2" fill="#4a7aa6"/><circle cx="154.7" cy="518.5" r="2.2" fill="#4a7aa6"/><circle cx="140.4" cy="353.1" r="2.2" fill="#4a7aa6"/><circle cx="800.6" cy="39.5" r="2.2" fill="#4a7aa6"/><circle cx="793.0" cy="554.3" r="2.2" fill="#4a7aa6"/><circle cx="726.6" cy="21.9" r="2.2" fill="#4a7aa6"/><circle cx="34.9" cy="57.2" r="2.2" fill="#4a7aa6"/><circle cx="128.6" cy="516.9" r="2.2" fill="#4a7aa6"/><circle cx="198.0" cy="310.3" r="2.2" fill="#4a7aa6"/><circle cx="654.2" cy="97.2" r="2.2" fill="#4a7aa6"/><circle cx="354.9" cy="293.4" r="2.2" fill="#4a7aa6"/><circle cx="817.9" cy="31.7" r="2.2" fill="#4a7aa6"/><circle cx="601.7" cy="250.8" r="2.2" fill="#4a7aa6"/><circle cx="769.7" cy="127.6" r="2.2" fill="#4a7aa6"/><circle cx="106.4" cy="508.6" r="2.2" fill="#4a7aa6"/><circle cx="75.9" cy="456.0" r="2.2" fill="#4a7aa6"/><circle cx="667.0" cy="283.5" r="2.2" fill="#4a7aa6"/><circle cx="92.1" cy="332.5" r="2.2" fill="#4a7aa6"/><circle cx="669.7" cy="163.6" r="2.2" fill="#4a7aa6"/><circle cx="16.3" cy="566.1" r="2.2" fill="#4a7aa6"/><circle cx="249.5" cy="379.4" r="2.2" fill="#4a7aa6"/><circle cx="20.5" cy="558.3" r="2.2" fill="#4a7aa6"/><circle cx="792.9" cy="37.6" r="2.2" fill="#4a7aa6"/><circle cx="268.5" cy="279.0" r="2.2" fill="#4a7aa6"/><circle cx="52.2" cy="427.5" r="2.2" fill="#4a7aa6"/><circle cx="720.3" cy="53.9" r="2.2" fill="#4a7aa6"/><circle cx="14.0" cy="20.7" r="2.2" fill="#4a7aa6"/><circle cx="747.5" cy="555.1" r="2.2" fill="#4a7aa6"/><circle cx="423.8" cy="432.5" r="2.2" fill="#4a7aa6"/><circle cx="273.1" cy="338.2" r="2.2" fill="#4a7aa6"/><circle cx="235.3" cy="348.2" r="2.2" fill="#4a7aa6"/><circle cx="729.0" cy="516.7" r="2.2" fill="#4a7aa6"/><circle cx="637.9" cy="439.0" r="2.2" fill="#4a7aa6"/><circle cx="291.0" cy="358.5" r="2.2" fill="#4a7aa6"/><circle cx="230.2" cy="426.8" r="2.2" fill="#4a7aa6"/><circle cx="597.8" cy="523.2" r="2.2" fill="#4a7aa6"/><circle cx="459.1" cy="144.6" r="2.2" fill="#4a7aa6"/><circle cx="387.3" cy="271.0" r="2.2" fill="#4a7aa6"/><circle cx="459.9" cy="419.8" r="2.2" fill="#4a7aa6"/><circle cx="356.1" cy="419.7" r="2.2" fill="#4a7aa6"/><circle cx="193.1" cy="497.6" r="2.2" fill="#4a7aa6"/><circle cx="97.7" cy="463.5" r="2.2" fill="#4a7aa6"/><circle cx="66.6" cy="151.6" r="2.2" fill="#4a7aa6"/><circle cx="336.8" cy="449.1" r="2.2" fill="#4a7aa6"/><circle cx="809.5" cy="162.7" r="2.2" fill="#4a7aa6"/><circle cx="53.4" cy="494.2" r="2.2" fill="#4a7aa6"/><circle cx="73.9" cy="532.7" r="2.2" fill="#4a7aa6"/><circle cx="207.0" cy="504.2" r="2.2" fill="#4a7aa6"/><circle cx="689.9" cy="122.3" r="2.2" fill="#4a7aa6"/><circle cx="535.8" cy="275.9" r="2.2" fill="#4a7aa6"/><circle cx="445.1" cy="360.2" r="2.2" fill="#4a7aa6"/><circle cx="551.1" cy="381.9" r="2.2" fill="#4a7aa6"/><circle cx="866.5" cy="38.6" r="2.2" fill="#4a7aa6"/><circle cx="830.3" cy="25.9" r="2.2" fill="#4a7aa6"/><circle cx="675.5" cy="234.4" r="2.2" fill="#4a7aa6"/><circle cx="335.0" cy="185.3" r="2.2" fill="#4a7aa6"/><circle cx="747.9" cy="538.0" r="2.2" fill="#4a7aa6"/><circle cx="667.7" cy="333.2" r="2.2" fill="#4a7aa6"/><circle cx="455.8" cy="204.3" r="2.2" fill="#4a7aa6"/><circle cx="509.2" cy="106.1" r="2.2" fill="#4a7aa6"/><circle cx="168.6" cy="447.9" r="2.2" fill="#4a7aa6"/><circle cx="619.7" cy="109.6" r="2.2" fill="#4a7aa6"/><circle cx="574.4" cy="213.4" r="2.2" fill="#4a7aa6"/><circle cx="296.5" cy="360.8" r="2.2" fill="#4a7aa6"/><circle cx="645.9" cy="307.3" r="2.2" fill="#4a7aa6"/><circle cx="317.7" cy="249.6" r="2.2" fill="#4a7aa6"/><circle cx="850.6" cy="564.0" r="2.2" fill="#4a7aa6"/><circle cx="146.9" cy="489.0" r="2.2" fill="#4a7aa6"/><circle cx="326.3" cy="493.5" r="2.2" fill="#4a7aa6"/><circle cx="327.8" cy="398.6" r="2.2" fill="#4a7aa6"/><circle cx="1.4" cy="2.4" r="2.2" fill="#4a7aa6"/><circle cx="206.6" cy="454.5" r="2.2" fill="#4a7aa6"/><circle cx="841.6" cy="7.8" r="2.2" fill="#4a7aa6"/><circle cx="500.9" cy="355.8" r="2.2" fill="#4a7aa6"/><circle cx="299.2" cy="397.5" r="2.2" fill="#4a7aa6"/><circle cx="833.7" cy="61.0" r="2.2" fill="#4a7aa6"/><circle cx="231.1" cy="291.8" r="2.2" fill="#4a7aa6"/><circle cx="618.9" cy="285.3" r="2.2" fill="#4a7aa6"/><circle cx="832.8" cy="410.7" r="2.2" fill="#4a7aa6"/><circle cx="342.9" cy="517.8" r="2.2" fill="#4a7aa6"/><circle cx="198.8" cy="395.4" r="2.2" fill="#4a7aa6"/><circle cx="675.5" cy="199.6" r="2.2" fill="#4a7aa6"/><circle cx="221.0" cy="300.2" r="2.2" fill="#4a7aa6"/><circle cx="458.3" cy="321.2" r="2.2" fill="#4a7aa6"/><circle cx="562.7" cy="237.6" r="2.2" fill="#4a7aa6"/><circle cx="48.8" cy="533.0" r="2.2" fill="#4a7aa6"/><circle cx="373.6" cy="336.0" r="2.2" fill="#4a7aa6"/><circle cx="264.1" cy="80.5" r="2.2" fill="#4a7aa6"/><circle cx="227.6" cy="394.9" r="2.2" fill="#4a7aa6"/><circle cx="96.1" cy="549.0" r="2.2" fill="#4a7aa6"/><circle cx="385.0" cy="289.6" r="2.2" fill="#4a7aa6"/><circle cx="81.9" cy="499.0" r="2.2" fill="#4a7aa6"/><circle cx="721.9" cy="94.1" r="2.2" fill="#4a7aa6"/><circle cx="718.6" cy="80.1" r="2.2" fill="#4a7aa6"/><circle cx="697.6" cy="311.4" r="2.2" fill="#4a7aa6"/><circle cx="766.9" cy="407.5" r="2.2" fill="#4a7aa6"/><circle cx="350.2" cy="269.9" r="2.2" fill="#4a7aa6"/><circle cx="286.7" cy="448.0" r="2.2" fill="#4a7aa6"/><circle cx="351.5" cy="72.5" r="2.2" fill="#4a7aa6"/><circle cx="864.4" cy="301.7" r="2.2" fill="#4a7aa6"/><circle cx="374.7" cy="96.2" r="2.2" fill="#4a7aa6"/><circle cx="83.0" cy="514.0" r="2.2" fill="#4a7aa6"/><circle cx="17.1" cy="550.7" r="2.2" fill="#4a7aa6"/><circle cx="136.9" cy="499.1" r="2.2" fill="#4a7aa6"/><circle cx="157.0" cy="476.7" r="2.2" fill="#4a7aa6"/><circle cx="94.5" cy="158.5" r="2.2" fill="#4a7aa6"/><circle cx="836.3" cy="96.7" r="2.2" fill="#4a7aa6"/><circle cx="321.1" cy="224.8" r="2.2" fill="#4a7aa6"/><circle cx="360.0" cy="323.5" r="2.2" fill="#4a7aa6"/><circle cx="882.7" cy="1.0" r="2.2" fill="#4a7aa6"/><circle cx="170.4" cy="321.1" r="2.2" fill="#4a7aa6"/><circle cx="348.7" cy="170.7" r="2.2" fill="#4a7aa6"/><circle cx="43.7" cy="530.6" r="2.2" fill="#4a7aa6"/><circle cx="40.0" cy="546.3" r="2.2" fill="#4a7aa6"/><circle cx="300.8" cy="38.7" r="2.2" fill="#4a7aa6"/><circle cx="192.5" cy="201.8" r="2.2" fill="#4a7aa6"/><circle cx="184.7" cy="465.0" r="2.2" fill="#4a7aa6"/><circle cx="58.0" cy="535.1" r="2.2" fill="#4a7aa6"/><circle cx="58.3" cy="512.9" r="2.2" fill="#4a7aa6"/><circle cx="79.6" cy="151.6" r="2.2" fill="#4a7aa6"/><circle cx="757.5" cy="111.0" r="2.2" fill="#4a7aa6"/><circle cx="803.9" cy="81.7" r="2.2" fill="#4a7aa6"/><circle cx="527.4" cy="317.8" r="2.2" fill="#4a7aa6"/><circle cx="816.2" cy="344.7" r="2.2" fill="#4a7aa6"/><circle cx="877.1" cy="3.3" r="2.2" fill="#4a7aa6"/><circle cx="640.6" cy="233.5" r="2.2" fill="#4a7aa6"/><circle cx="837.7" cy="52.1" r="2.2" fill="#4a7aa6"/><circle cx="725.0" cy="460.6" r="2.2" fill="#4a7aa6"/><circle cx="569.6" cy="124.8" r="2.2" fill="#4a7aa6"/><circle cx="529.0" cy="189.4" r="2.2" fill="#4a7aa6"/><circle cx="550.5" cy="343.3" r="2.2" fill="#4a7aa6"/><circle cx="867.4" cy="8.2" r="2.2" fill="#4a7aa6"/><circle cx="505.9" cy="97.5" r="2.2" fill="#4a7aa6"/><circle cx="772.8" cy="182.6" r="2.2" fill="#4a7aa6"/><circle cx="424.8" cy="133.9" r="2.2" fill="#4a7aa6"/><circle cx="396.3" cy="139.2" r="2.2" fill="#4a7aa6"/><circle cx="728.8" cy="346.7" r="2.2" fill="#4a7aa6"/><circle cx="443.9" cy="258.8" r="2.2" fill="#4a7aa6"/><circle cx="825.3" cy="84.4" r="2.2" fill="#4a7aa6"/><circle cx="34.6" cy="533.7" r="2.2" fill="#4a7aa6"/><circle cx="539.0" cy="506.7" r="2.2" fill="#4a7aa6"/><circle cx="346.2" cy="194.4" r="2.2" fill="#4a7aa6"/><circle cx="671.3" cy="347.1" r="2.2" fill="#4a7aa6"/><circle cx="675.4" cy="94.8" r="2.2" fill="#4a7aa6"/><circle cx="286.5" cy="379.3" r="2.2" fill="#4a7aa6"/><circle cx="654.4" cy="419.8" r="2.2" fill="#4a7aa6"/><circle cx="254.7" cy="293.9" r="2.2" fill="#4a7aa6"/><circle cx="564.0" cy="395.1" r="2.2" fill="#4a7aa6"/><circle cx="648.6" cy="113.4" r="2.2" fill="#4a7aa6"/><circle cx="781.2" cy="214.2" r="2.2" fill="#4a7aa6"/><circle cx="212.3" cy="27.7" r="2.2" fill="#4a7aa6"/><circle cx="736.8" cy="88.1" r="2.2" fill="#4a7aa6"/><circle cx="747.3" cy="54.2" r="2.2" fill="#4a7aa6"/><circle cx="15.0" cy="547.0" r="2.2" fill="#4a7aa6"/><circle cx="33.3" cy="561.4" r="2.2" fill="#4a7aa6"/><circle cx="180.7" cy="385.0" r="2.2" fill="#4a7aa6"/><circle cx="712.6" cy="515.1" r="2.2" fill="#4a7aa6"/><circle cx="396.0" cy="472.9" r="2.2" fill="#4a7aa6"/><circle cx="481.3" cy="443.8" r="2.2" fill="#4a7aa6"/><circle cx="551.1" cy="236.9" r="2.2" fill="#4a7aa6"/><circle cx="514.1" cy="378.8" r="2.2" fill="#4a7aa6"/><circle cx="796.5" cy="66.1" r="2.2" fill="#4a7aa6"/><circle cx="137.0" cy="496.9" r="2.2" fill="#4a7aa6"/><circle cx="555.8" cy="54.6" r="2.2" fill="#4a7aa6"/><circle cx="356.8" cy="189.0" r="2.2" fill="#4a7aa6"/><circle cx="96.7" cy="378.2" r="2.2" fill="#4a7aa6"/><circle cx="-0.2" cy="572.9" r="2.2" fill="#4a7aa6"/><circle cx="863.0" cy="10.1" r="2.2" fill="#4a7aa6"/><circle cx="403.7" cy="363.9" r="2.2" fill="#4a7aa6"/><circle cx="409.4" cy="369.9" r="2.2" fill="#4a7aa6"/><circle cx="653.6" cy="210.1" r="2.2" fill="#4a7aa6"/><circle cx="124.6" cy="335.8" r="2.2" fill="#4a7aa6"/><circle cx="770.3" cy="40.9" r="2.2" fill="#4a7aa6"/><circle cx="630.4" cy="495.7" r="2.2" fill="#4a7aa6"/><circle cx="658.2" cy="395.6" r="2.2" fill="#4a7aa6"/><circle cx="846.4" cy="50.4" r="2.2" fill="#4a7aa6"/><circle cx="712.1" cy="27.8" r="2.2" fill="#4a7aa6"/><circle cx="292.5" cy="303.4" r="2.2" fill="#4a7aa6"/><circle cx="61.1" cy="498.8" r="2.2" fill="#4a7aa6"/><circle cx="560.9" cy="81.5" r="2.2" fill="#4a7aa6"/><circle cx="23.2" cy="546.9" r="2.2" fill="#4a7aa6"/><circle cx="400.1" cy="61.2" r="2.2" fill="#4a7aa6"/><circle cx="12.4" cy="560.8" r="2.2" fill="#4a7aa6"/><circle cx="575.3" cy="420.1" r="2.2" fill="#4a7aa6"/><circle cx="169.8" cy="13.1" r="2.2" fill="#4a7aa6"/><circle cx="757.1" cy="12.6" r="2.2" fill="#4a7aa6"/><circle cx="524.2" cy="268.9" r="2.2" fill="#4a7aa6"/><circle cx="617.6" cy="285.3" r="2.2" fill="#4a7aa6"/><circle cx="595.2" cy="340.4" r="2.2" fill="#4a7aa6"/><circle cx="749.4" cy="295.4" r="2.2" fill="#4a7aa6"/><circle cx="318.6" cy="425.5" r="2.2" fill="#4a7aa6"/><circle cx="433.7" cy="265.7" r="2.2" fill="#4a7aa6"/><circle cx="771.1" cy="499.8" r="2.2" fill="#4a7aa6"/><circle cx="585.2" cy="19.9" r="2.2" fill="#4a7aa6"/><circle cx="586.9" cy="295.5" r="2.2" fill="#4a7aa6"/><circle cx="68.9" cy="11.3" r="2.2" fill="#4a7aa6"/><circle cx="419.2" cy="122.6" r="2.2" fill="#4a7aa6"/><circle cx="53.0" cy="545.4" r="2.2" fill="#4a7aa6"/><circle cx="520.9" cy="178.3" r="2.2" fill="#4a7aa6"/><circle cx="838.4" cy="59.4" r="2.2" fill="#4a7aa6"/><circle cx="819.3" cy="55.6" r="2.2" fill="#4a7aa6"/><circle cx="647.7" cy="115.9" r="2.2" fill="#4a7aa6"/><circle cx="46.7" cy="543.7" r="2.2" fill="#4a7aa6"/><circle cx="308.5" cy="383.7" r="2.2" fill="#4a7aa6"/><circle cx="13.2" cy="75.2" r="2.2" fill="#4a7aa6"/><circle cx="498.5" cy="214.4" r="2.2" fill="#4a7aa6"/><circle cx="730.7" cy="227.3" r="2.2" fill="#4a7aa6"/><circle cx="488.1" cy="213.5" r="2.2" fill="#4a7aa6"/><circle cx="290.4" cy="353.2" r="2.2" fill="#4a7aa6"/><circle cx="658.3" cy="58.0" r="2.2" fill="#4a7aa6"/><circle cx="503.3" cy="298.6" r="2.2" fill="#4a7aa6"/><circle cx="50.1" cy="141.5" r="2.2" fill="#4a7aa6"/><circle cx="203.4" cy="347.7" r="2.2" fill="#4a7aa6"/><circle cx="302.0" cy="263.9" r="2.2" fill="#4a7aa6"/><circle cx="835.9" cy="101.9" r="2.2" fill="#4a7aa6"/><circle cx="368.2" cy="394.3" r="2.2" fill="#4a7aa6"/><circle cx="144.6" cy="421.8" r="2.2" fill="#4a7aa6"/><circle cx="178.5" cy="284.8" r="2.2" fill="#4a7aa6"/><circle cx="610.0" cy="273.2" r="2.2" fill="#4a7aa6"/><circle cx="426.1" cy="424.5" r="2.2" fill="#4a7aa6"/><circle cx="635.1" cy="148.6" r="2.2" fill="#4a7aa6"/><circle cx="118.7" cy="171.1" r="2.2" fill="#4a7aa6"/><circle cx="143.5" cy="478.9" r="2.2" fill="#4a7aa6"/><circle cx="144.2" cy="475.2" r="2.2" fill="#4a7aa6"/><circle cx="571.7" cy="275.2" r="2.2" fill="#4a7aa6"/><circle cx="381.9" cy="376.8" r="2.2" fill="#4a7aa6"/><circle cx="56.2" cy="536.8" r="2.2" fill="#4a7aa6"/><circle cx="352.1" cy="222.9" r="2.2" fill="#4a7aa6"/><circle cx="347.4" cy="470.9" r="2.2" fill="#4a7aa6"/><circle cx="537.3" cy="48.5" r="2.2" fill="#4a7aa6"/><circle cx="430.1" cy="260.8" r="2.2" fill="#4a7aa6"/><circle cx="686.8" cy="289.0" r="2.2" fill="#4a7aa6"/><circle cx="431.2" cy="380.9" r="2.2" fill="#4a7aa6"/><circle cx="655.8" cy="190.5" r="2.2" fill="#4a7aa6"/><circle cx="553.1" cy="407.2" r="2.2" fill="#4a7aa6"/><circle cx="82.7" cy="524.0" r="2.2" fill="#4a7aa6"/><circle cx="646.6" cy="278.5" r="2.2" fill="#4a7aa6"/><circle cx="449.9" cy="347.4" r="2.2" fill="#4a7aa6"/><circle cx="300.1" cy="397.7" r="2.2" fill="#4a7aa6"/><circle cx="465.5" cy="266.9" r="2.2" fill="#4a7aa6"/><circle cx="12.5" cy="9.8" r="2.2" fill="#4a7aa6"/><circle cx="97.4" cy="559.0" r="2.2" fill="#4a7aa6"/><circle cx="717.6" cy="186.2" r="2.2" fill="#4a7aa6"/><circle cx="857.5" cy="5.2" r="2.2" fill="#4a7aa6"/><circle cx="198.6" cy="466.4" r="2.2" fill="#4a7aa6"/><circle cx="213.6" cy="98.1" r="2.2" fill="#4a7aa6"/><circle cx="837.5" cy="90.2" r="2.2" fill="#d80c0c"/><circle cx="471.4" cy="194.1" r="2.2" fill="#d80c0c"/><circle cx="338.3" cy="409.2" r="2.2" fill="#d80c0c"/><circle cx="91.9" cy="516.3" r="2.2" fill="#d80c0c"/><circle cx="152.6" cy="334.1" r="2.2" fill="#d80c0c"/><circle cx="34.0" cy="486.6" r="2.2" fill="#d80c0c"/><circle cx="84.1" cy="409.9" r="2.2" fill="#d80c0c"/><circle cx="517.9" cy="523.2" r="2.2" fill="#d80c0c"/><circle cx="193.6" cy="236.0" r="2.2" fill="#d80c0c"/><circle cx="229.0" cy="363.0" r="2.2" fill="#d80c0c"/><circle cx="423.0" cy="273.1" r="2.2" fill="#d80c0c"/><circle cx="331.3" cy="392.5" r="2.2" fill="#d80c0c"/><circle cx="842.1" cy="400.6" r="2.2" fill="#d80c0c"/><circle cx="191.8" cy="386.3" r="2.2" fill="#d80c0c"/><circle cx="91.2" cy="101.2" r="2.2" fill="#d80c0c"/><circle cx="417.2" cy="291.6" r="2.2" fill="#d80c0c"/><circle cx="305.8" cy="319.1" r="2.2" fill="#d80c0c"/><circle cx="864.9" cy="571.8" r="2.2" fill="#d80c0c"/><circle cx="174.3" cy="168.1" r="2.2" fill="#d80c0c"/><circle cx="269.0" cy="496.2" r="2.2" fill="#d80c0c"/><circle cx="193.8" cy="546.2" r="2.2" fill="#d80c0c"/><circle cx="720.9" cy="192.9" r="2.2" fill="#d80c0c"/><circle cx="649.4" cy="285.7" r="2.2" fill="#d80c0c"/><circle cx="207.7" cy="71.0" r="2.2" fill="#d80c0c"/><circle cx="160.1" cy="419.5" r="2.2" fill="#d80c0c"/><circle cx="148.2" cy="452.4" r="2.2" fill="#d80c0c"/><circle cx="33.7" cy="537.2" r="2.2" fill="#d80c0c"/><circle cx="389.1" cy="234.9" r="2.2" fill="#d80c0c"/><circle cx="878.7" cy="264.4" r="2.2" fill="#d80c0c"/><circle cx="304.5" cy="417.7" r="2.2" fill="#d80c0c"/><circle cx="527.6" cy="86.9" r="2.2" fill="#d80c0c"/><circle cx="696.1" cy="117.3" r="2.2" fill="#d80c0c"/><circle cx="539.5" cy="114.0" r="2.2" fill="#d80c0c"/><circle cx="814.2" cy="28.8" r="2.2" fill="#d80c0c"/><circle cx="531.0" cy="176.3" r="2.2" fill="#d80c0c"/><circle cx="827.0" cy="23.1" r="2.2" fill="#d80c0c"/><circle cx="803.1" cy="77.1" r="2.2" fill="#d80c0c"/><circle cx="338.8" cy="257.9" r="2.2" fill="#d80c0c"/><circle cx="337.1" cy="273.6" r="2.2" fill="#d80c0c"/><circle cx="393.7" cy="50.7" r="2.2" fill="#d80c0c"/><circle cx="142.8" cy="498.6" r="2.2" fill="#d80c0c"/><circle cx="788.6" cy="31.1" r="2.2" fill="#d80c0c"/><circle cx="475.7" cy="423.0" r="2.2" fill="#d80c0c"/><circle cx="249.4" cy="239.4" r="2.2" fill="#d80c0c"/><circle cx="163.5" cy="387.3" r="2.2" fill="#d80c0c"/><circle cx="203.3" cy="202.6" r="2.2" fill="#d80c0c"/><circle cx="556.2" cy="308.9" r="2.2" fill="#d80c0c"/><circle cx="28.2" cy="560.3" r="2.2" fill="#d80c0c"/><circle cx="650.7" cy="232.4" r="2.2" fill="#d80c0c"/><circle cx="61.7" cy="36.8" r="2.2" fill="#d80c0c"/><circle cx="543.0" cy="189.7" r="2.2" fill="#d80c0c"/><circle cx="485.2" cy="119.6" r="2.2" fill="#d80c0c"/><circle cx="225.4" cy="381.6" r="2.2" fill="#d80c0c"/><circle cx="194.9" cy="381.0" r="2.2" fill="#d80c0c"/><circle cx="440.7" cy="155.6" r="2.2" fill="#d80c0c"/><circle cx="149.8" cy="442.4" r="2.2" fill="#d80c0c"/><circle cx="68.2" cy="363.3" r="2.2" fill="#d80c0c"/><circle cx="450.8" cy="451.8" r="2.2" fill="#d80c0c"/><circle cx="376.4" cy="454.9" r="2.2" fill="#d80c0c"/><circle cx="580.3" cy="218.5" r="2.2" fill="#d80c0c"/><circle cx="124.3" cy="459.3" r="2.2" fill="#d80c0c"/><circle cx="600.4" cy="195.2" r="2.2" fill="#d80c0c"/><circle cx="713.3" cy="200.9" r="2.2" fill="#d80c0c"/><circle cx="795.6" cy="252.5" r="2.2" fill="#d80c0c"/><circle cx="48.4" cy="362.3" r="2.2" fill="#d80c0c"/><circle cx="560.3" cy="197.3" r="2.2" fill="#d80c0c"/><circle cx="77.5" cy="498.1" r="2.2" fill="#d80c0c"/><circle cx="52.1" cy="35.2" r="2.2" fill="#d80c0c"/><circle cx="764.2" cy="111.4" r="2.2" fill="#d80c0c"/><circle cx="550.0" cy="168.4" r="2.2" fill="#d80c0c"/><circle cx="678.9" cy="174.3" r="2.2" fill="#d80c0c"/><circle cx="567.4" cy="203.9" r="2.2" fill="#d80c0c"/><circle cx="560.8" cy="211.9" r="2.2" fill="#d80c0c"/><circle cx="762.5" cy="62.8" r="2.2" fill="#d80c0c"/><circle cx="579.8" cy="109.3" r="2.2" fill="#d80c0c"/><circle cx="614.1" cy="216.5" r="2.2" fill="#d80c0c"/><circle cx="502.0" cy="234.8" r="2.2" fill="#d80c0c"/><circle cx="568.4" cy="358.7" r="2.2" fill="#d80c0c"/><circle cx="418.4" cy="328.2" r="2.2" fill="#d80c0c"/><circle cx="188.6" cy="413.2" r="2.2" fill="#d80c0c"/><circle cx="93.2" cy="111.7" r="2.2" fill="#d80c0c"/><circle cx="68.2" cy="547.9" r="2.2" fill="#d80c0c"/><circle cx="663.6" cy="232.3" r="2.2" fill="#d80c0c"/><circle cx="203.3" cy="417.7" r="2.2" fill="#d80c0c"/><circle cx="296.0" cy="336.3" r="2.2" fill="#d80c0c"/><circle cx="665.9" cy="82.9" r="2.2" fill="#d80c0c"/><circle cx="466.3" cy="306.6" r="2.2" fill="#d80c0c"/><circle cx="802.2" cy="70.4" r="2.2" fill="#d80c0c"/><circle cx="487.8" cy="259.2" r="2.2" fill="#d80c0c"/><circle cx="63.4" cy="514.5" r="2.2" fill="#d80c0c"/><circle cx="362.9" cy="182.0" r="2.2" fill="#d80c0c"/><circle cx="92.9" cy="524.4" r="2.2" fill="#d80c0c"/><circle cx="593.4" cy="169.1" r="2.2" fill="#d80c0c"/><circle cx="259.3" cy="164.2" r="2.2" fill="#d80c0c"/><circle cx="389.3" cy="411.8" r="2.2" fill="#d80c0c"/><circle cx="270.0" cy="390.1" r="2.2" fill="#d80c0c"/><circle cx="806.0" cy="91.2" r="2.2" fill="#d80c0c"/><circle cx="95.5" cy="525.0" r="2.2" fill="#d80c0c"/><circle cx="80.7" cy="525.8" r="2.2" fill="#d80c0c"/><circle cx="855.5" cy="496.3" r="2.2" fill="#d80c0c"/><circle cx="139.4" cy="547.5" r="2.2" fill="#d80c0c"/><circle cx="53.9" cy="186.6" r="2.2" fill="#d80c0c"/><circle cx="364.3" cy="552.2" r="2.2" fill="#d80c0c"/><circle cx="172.8" cy="391.2" r="2.2" fill="#d80c0c"/><circle cx="241.3" cy="281.0" r="2.2" fill="#d80c0c"/><circle cx="107.4" cy="18.1" r="2.2" fill="#d80c0c"/><circle cx="321.0" cy="480.8" r="2.2" fill="#d80c0c"/><circle cx="47.8" cy="39.5" r="2.2" fill="#d80c0c"/><circle cx="413.4" cy="399.5" r="2.2" fill="#d80c0c"/><circle cx="210.9" cy="194.5" r="2.2" fill="#d80c0c"/><circle cx="717.3" cy="556.0" r="2.2" fill="#d80c0c"/><circle cx="254.1" cy="306.8" r="2.2" fill="#d80c0c"/><circle cx="696.9" cy="86.4" r="2.2" fill="#d80c0c"/><circle cx="609.8" cy="467.0" r="2.2" fill="#d80c0c"/><circle cx="857.6" cy="5.1" r="2.2" fill="#d80c0c"/><circle cx="497.1" cy="552.8" r="2.2" fill="#d80c0c"/><circle cx="287.5" cy="440.3" r="2.2" fill="#d80c0c"/><circle cx="499.8" cy="352.5" r="2.2" fill="#d80c0c"/><circle cx="397.2" cy="303.0" r="2.2" fill="#d80c0c"/><circle cx="582.6" cy="171.0" r="2.2" fill="#d80c0c"/><circle cx="517.2" cy="419.1" r="2.2" fill="#d80c0c"/><circle cx="71.0" cy="459.7" r="2.2" fill="#d80c0c"/><circle cx="600.1" cy="126.6" r="2.2" fill="#d80c0c"/><circle cx="764.8" cy="13.0" r="2.2" fill="#d80c0c"/><circle cx="660.5" cy="222.4" r="2.2" fill="#d80c0c"/><circle cx="353.2" cy="501.1" r="2.2" fill="#d80c0c"/><circle cx="330.1" cy="177.5" r="2.2" fill="#d80c0c"/><circle cx="598.4" cy="94.8" r="2.2" fill="#d80c0c"/><circle cx="538.2" cy="354.7" r="2.2" fill="#d80c0c"/><circle cx="147.5" cy="467.4" r="2.2" fill="#d80c0c"/><circle cx="538.8" cy="334.5" r="2.2" fill="#d80c0c"/><circle cx="130.6" cy="539.6" r="2.2" fill="#d80c0c"/><circle cx="727.6" cy="521.4" r="2.2" fill="#d80c0c"/><circle cx="807.3" cy="438.7" r="2.2" fill="#d80c0c"/><circle cx="358.2" cy="119.6" r="2.2" fill="#d80c0c"/><circle cx="743.3" cy="264.3" r="2.2" fill="#d80c0c"/><circle cx="363.3" cy="222.6" r="2.2" fill="#d80c0c"/><circle cx="581.4" cy="484.4" r="2.2" fill="#d80c0c"/><circle cx="703.3" cy="311.0" r="2.2" fill="#d80c0c"/><circle cx="703.9" cy="69.4" r="2.2" fill="#d80c0c"/><circle cx="672.8" cy="124.2" r="2.2" fill="#d80c0c"/><circle cx="759.0" cy="228.6" r="2.2" fill="#d80c0c"/><circle cx="549.3" cy="422.9" r="2.2" fill="#d80c0c"/><circle cx="194.2" cy="481.3" r="2.2" fill="#d80c0c"/><circle cx="212.0" cy="166.5" r="2.2" fill="#d80c0c"/><circle cx="377.3" cy="365.1" r="2.2" fill="#d80c0c"/><circle cx="428.4" cy="420.0" r="2.2" fill="#d80c0c"/><circle cx="286.5" cy="343.1" r="2.2" fill="#d80c0c"/><circle cx="254.0" cy="83.6" r="2.2" fill="#d80c0c"/><circle cx="119.0" cy="498.1" r="2.2" fill="#d80c0c"/><circle cx="556.7" cy="261.3" r="2.2" fill="#d80c0c"/><circle cx="479.1" cy="213.2" r="2.2" fill="#d80c0c"/><circle cx="523.7" cy="214.1" r="2.2" fill="#d80c0c"/><circle cx="621.9" cy="89.4" r="2.2" fill="#d80c0c"/><circle cx="472.9" cy="446.1" r="2.2" fill="#d80c0c"/><circle cx="379.4" cy="223.6" r="2.2" fill="#d80c0c"/><circle cx="289.1" cy="86.6" r="2.2" fill="#d80c0c"/><circle cx="807.0" cy="49.2" r="2.2" fill="#d80c0c"/><circle cx="880.3" cy="1.7" r="2.2" fill="#d80c0c"/><circle cx="681.8" cy="184.5" r="2.2" fill="#d80c0c"/><circle cx="448.7" cy="152.6" r="2.2" fill="#d80c0c"/><circle cx="317.5" cy="436.1" r="2.2" fill="#d80c0c"/><circle cx="636.1" cy="171.1" r="2.2" fill="#d80c0c"/><circle cx="154.9" cy="402.9" r="2.2" fill="#d80c0c"/><circle cx="123.3" cy="461.6" r="2.2" fill="#d80c0c"/><circle cx="767.8" cy="242.7" r="2.2" fill="#d80c0c"/><circle cx="619.3" cy="218.7" r="2.2" fill="#d80c0c"/><circle cx="478.8" cy="339.8" r="2.2" fill="#d80c0c"/><circle cx="338.0" cy="362.2" r="2.2" fill="#d80c0c"/><circle cx="52.9" cy="19.9" r="2.2" fill="#d80c0c"/><circle cx="83.6" cy="429.1" r="2.2" fill="#d80c0c"/><circle cx="435.6" cy="141.5" r="2.2" fill="#d80c0c"/><circle cx="736.1" cy="71.0" r="2.2" fill="#d80c0c"/><circle cx="54.9" cy="445.3" r="2.2" fill="#d80c0c"/><circle cx="457.3" cy="307.5" r="2.2" fill="#d80c0c"/><circle cx="683.0" cy="137.1" r="2.2" fill="#d80c0c"/><circle cx="400.5" cy="340.9" r="2.2" fill="#d80c0c"/><circle cx="336.9" cy="72.9" r="2.2" fill="#d80c0c"/><circle cx="475.7" cy="86.7" r="2.2" fill="#d80c0c"/><circle cx="6.4" cy="570.8" r="2.2" fill="#d80c0c"/><circle cx="701.0" cy="44.0" r="2.2" fill="#d80c0c"/><circle cx="292.1" cy="398.5" r="2.2" fill="#d80c0c"/><circle cx="764.6" cy="51.6" r="2.2" fill="#d80c0c"/><circle cx="639.7" cy="107.4" r="2.2" fill="#d80c0c"/><circle cx="604.4" cy="195.4" r="2.2" fill="#d80c0c"/><circle cx="588.5" cy="143.9" r="2.2" fill="#d80c0c"/><circle cx="319.4" cy="493.2" r="2.2" fill="#d80c0c"/><circle cx="370.0" cy="150.2" r="2.2" fill="#d80c0c"/><circle cx="252.8" cy="440.1" r="2.2" fill="#d80c0c"/><circle cx="701.6" cy="436.4" r="2.2" fill="#d80c0c"/><circle cx="91.4" cy="248.4" r="2.2" fill="#d80c0c"/><circle cx="32.4" cy="553.9" r="2.2" fill="#d80c0c"/><circle cx="708.9" cy="556.8" r="2.2" fill="#d80c0c"/><circle cx="678.1" cy="227.7" r="2.2" fill="#d80c0c"/><circle cx="840.7" cy="39.6" r="2.2" fill="#d80c0c"/><circle cx="649.7" cy="432.0" r="2.2" fill="#d80c0c"/><circle cx="78.3" cy="535.9" r="2.2" fill="#d80c0c"/><circle cx="123.1" cy="105.9" r="2.2" fill="#d80c0c"/><circle cx="810.2" cy="530.5" r="2.2" fill="#d80c0c"/><circle cx="345.5" cy="268.5" r="2.2" fill="#d80c0c"/><circle cx="243.8" cy="452.0" r="2.2" fill="#d80c0c"/><circle cx="848.6" cy="17.7" r="2.2" fill="#d80c0c"/><circle cx="149.5" cy="386.0" r="2.2" fill="#d80c0c"/><circle cx="771.1" cy="141.0" r="2.2" fill="#d80c0c"/><circle cx="688.9" cy="294.7" r="2.2" fill="#d80c0c"/><circle cx="572.4" cy="265.2" r="2.2" fill="#d80c0c"/><circle cx="198.8" cy="494.2" r="2.2" fill="#d80c0c"/><circle cx="127.1" cy="251.6" r="2.2" fill="#d80c0c"/><circle cx="279.4" cy="189.9" r="2.2" fill="#d80c0c"/><circle cx="776.4" cy="59.2" r="2.2" fill="#d80c0c"/><circle cx="643.5" cy="534.7" r="2.2" fill="#d80c0c"/><circle cx="67.2" cy="537.6" r="2.2" fill="#d80c0c"/><circle cx="140.5" cy="403.5" r="2.2" fill="#d80c0c"/><circle cx="664.3" cy="155.7" r="2.2" fill="#d80c0c"/><circle cx="197.7" cy="441.5" r="2.2" fill="#d80c0c"/><circle cx="764.0" cy="88.4" r="2.2" fill="#d80c0c"/><circle cx="225.8" cy="449.8" r="2.2" fill="#d80c0c"/><circle cx="159.1" cy="445.0" r="2.2" fill="#d80c0c"/><circle cx="502.3" cy="318.8" r="2.2" fill="#d80c0c"/><circle cx="496.4" cy="218.5" r="2.2" fill="#d80c0c"/><circle cx="120.9" cy="63.9" r="2.2" fill="#d80c0c"/><circle cx="111.8" cy="521.4" r="2.2" fill="#d80c0c"/><circle cx="499.4" cy="319.7" r="2.2" fill="#d80c0c"/><circle cx="378.2" cy="205.5" r="2.2" fill="#d80c0c"/><circle cx="403.5" cy="279.5" r="2.2" fill="#d80c0c"/><circle cx="188.4" cy="456.1" r="2.2" fill="#d80c0c"/><circle cx="712.1" cy="510.8" r="2.2" fill="#d80c0c"/><circle cx="707.0" cy="40.2" r="2.2" fill="#d80c0c"/><circle cx="568.8" cy="102.5" r="2.2" fill="#d80c0c"/><circle cx="249.3" cy="398.8" r="2.2" fill="#d80c0c"/><circle cx="455.8" cy="209.9" r="2.2" fill="#d80c0c"/><circle cx="578.8" cy="143.7" r="2.2" fill="#d80c0c"/><circle cx="244.1" cy="266.5" r="2.2" fill="#d80c0c"/><circle cx="196.2" cy="542.3" r="2.2" fill="#d80c0c"/><circle cx="466.2" cy="222.1" r="2.2" fill="#d80c0c"/><circle cx="362.9" cy="130.7" r="2.2" fill="#d80c0c"/><circle cx="297.8" cy="448.1" r="2.2" fill="#d80c0c"/><circle cx="11.9" cy="564.6" r="2.2" fill="#d80c0c"/><circle cx="60.8" cy="509.1" r="2.2" fill="#d80c0c"/><circle cx="247.6" cy="397.6" r="2.2" fill="#d80c0c"/><circle cx="463.9" cy="217.8" r="2.2" fill="#d80c0c"/><circle cx="471.1" cy="171.2" r="2.2" fill="#d80c0c"/><circle cx="231.4" cy="397.6" r="2.2" fill="#d80c0c"/><circle cx="107.3" cy="331.1" r="2.2" fill="#d80c0c"/><circle cx="777.8" cy="65.8" r="2.2" fill="#d80c0c"/><circle cx="485.2" cy="331.0" r="2.2" fill="#d80c0c"/><circle cx="64.9" cy="477.3" r="2.2" fill="#d80c0c"/><circle cx="680.3" cy="77.8" r="2.2" fill="#d80c0c"/><circle cx="642.7" cy="138.9" r="2.2" fill="#d80c0c"/><circle cx="704.8" cy="284.1" r="2.2" fill="#d80c0c"/><circle cx="819.5" cy="353.1" r="2.2" fill="#d80c0c"/><circle cx="434.0" cy="378.0" r="2.2" fill="#d80c0c"/><circle cx="654.8" cy="193.6" r="2.2" fill="#d80c0c"/><circle cx="434.6" cy="175.7" r="2.2" fill="#d80c0c"/><circle cx="175.7" cy="435.2" r="2.2" fill="#d80c0c"/><circle cx="616.5" cy="186.6" r="2.2" fill="#d80c0c"/><circle cx="614.7" cy="193.8" r="2.2" fill="#d80c0c"/><circle cx="305.0" cy="401.4" r="2.2" fill="#d80c0c"/><circle cx="840.5" cy="312.4" r="2.2" fill="#d80c0c"/><circle cx="788.7" cy="66.4" r="2.2" fill="#d80c0c"/><circle cx="702.9" cy="283.1" r="2.2" fill="#d80c0c"/><circle cx="351.9" cy="303.7" r="2.2" fill="#d80c0c"/><circle cx="695.0" cy="171.4" r="2.2" fill="#d80c0c"/><circle cx="441.0" cy="384.5" r="2.2" fill="#d80c0c"/><circle cx="276.1" cy="360.4" r="2.2" fill="#d80c0c"/><circle cx="733.6" cy="95.0" r="2.2" fill="#d80c0c"/><circle cx="264.8" cy="330.1" r="2.2" fill="#d80c0c"/><circle cx="134.0" cy="553.1" r="2.2" fill="#d80c0c"/><circle cx="53.4" cy="434.5" r="2.2" fill="#d80c0c"/><circle cx="195.1" cy="313.3" r="2.2" fill="#d80c0c"/><circle cx="553.5" cy="189.2" r="2.2" fill="#d80c0c"/><circle cx="679.3" cy="28.0" r="2.2" fill="#d80c0c"/><circle cx="278.2" cy="387.6" r="2.2" fill="#d80c0c"/><circle cx="673.4" cy="429.6" r="2.2" fill="#d80c0c"/><circle cx="492.2" cy="156.0" r="2.2" fill="#d80c0c"/><circle cx="82.0" cy="508.3" r="2.2" fill="#d80c0c"/><circle cx="312.1" cy="148.3" r="2.2" fill="#d80c0c"/><circle cx="350.7" cy="488.1" r="2.2" fill="#d80c0c"/><circle cx="448.4" cy="139.7" r="2.2" fill="#d80c0c"/><circle cx="817.8" cy="441.0" r="2.2" fill="#d80c0c"/><circle cx="314.8" cy="358.4" r="2.2" fill="#d80c0c"/><circle cx="589.2" cy="226.4" r="2.2" fill="#d80c0c"/><circle cx="3.2" cy="569.0" r="2.2" fill="#d80c0c"/><circle cx="24.3" cy="516.3" r="2.2" fill="#d80c0c"/><circle cx="319.9" cy="375.2" r="2.2" fill="#d80c0c"/><circle cx="807.8" cy="30.1" r="2.2" fill="#d80c0c"/><circle cx="68.2" cy="538.5" r="2.2" fill="#d80c0c"/><circle cx="219.1" cy="339.0" r="2.2" fill="#d80c0c"/><circle cx="716.4" cy="71.1" r="2.2" fill="#d80c0c"/><circle cx="6.9" cy="571.7" r="2.2" fill="#d80c0c"/><circle cx="531.9" cy="376.9" r="2.2" fill="#d80c0c"/><circle cx="244.7" cy="475.6" r="2.2" fill="#d80c0c"/><circle cx="599.6" cy="491.8" r="2.2" fill="#d80c0c"/><circle cx="35.6" cy="539.8" r="2.2" fill="#d80c0c"/><circle cx="304.1" cy="316.0" r="2.2" fill="#d80c0c"/><circle cx="350.3" cy="450.8" r="2.2" fill="#d80c0c"/><circle cx="821.4" cy="18.2" r="2.2" fill="#d80c0c"/><circle cx="596.8" cy="411.4" r="2.2" fill="#d80c0c"/><circle cx="837.5" cy="201.6" r="2.2" fill="#d80c0c"/><circle cx="569.9" cy="39.1" r="2.2" fill="#d80c0c"/><circle cx="405.1" cy="378.8" r="2.2" fill="#d80c0c"/><circle cx="600.0" cy="109.6" r="2.2" fill="#d80c0c"/><circle cx="726.9" cy="364.2" r="2.2" fill="#d80c0c"/><circle cx="247.5" cy="462.0" r="2.2" fill="#d80c0c"/><circle cx="329.6" cy="165.4" r="2.2" fill="#d80c0c"/><circle cx="71.6" cy="542.3" r="2.2" fill="#d80c0c"/><circle cx="21.2" cy="548.5" r="2.2" fill="#d80c0c"/><circle cx="873.7" cy="8.6" r="2.2" fill="#d80c0c"/><circle cx="617.0" cy="14.5" r="2.2" fill="#d80c0c"/><circle cx="139.0" cy="501.3" r="2.2" fill="#d80c0c"/><circle cx="715.6" cy="387.7" r="2.2" fill="#d80c0c"/><circle cx="424.1" cy="451.8" r="2.2" fill="#d80c0c"/><circle cx="248.8" cy="223.8" r="2.2" fill="#d80c0c"/><circle cx="733.3" cy="67.9" r="2.2" fill="#d80c0c"/><circle cx="93.4" cy="525.2" r="2.2" fill="#d80c0c"/><circle cx="856.2" cy="34.7" r="2.2" fill="#d80c0c"/><circle cx="845.6" cy="24.4" r="2.2" fill="#d80c0c"/><circle cx="577.1" cy="409.3" r="2.2" fill="#d80c0c"/><circle cx="824.9" cy="62.3" r="2.2" fill="#d80c0c"/><circle cx="864.6" cy="60.3" r="2.2" fill="#d80c0c"/><circle cx="642.8" cy="236.4" r="2.2" fill="#d80c0c"/><circle cx="100.6" cy="531.1" r="2.2" fill="#d80c0c"/><circle cx="703.1" cy="127.0" r="2.2" fill="#d80c0c"/><circle cx="452.0" cy="227.3" r="2.2" fill="#d80c0c"/><circle cx="475.7" cy="331.1" r="2.2" fill="#d80c0c"/><circle cx="538.6" cy="214.1" r="2.2" fill="#d80c0c"/><circle cx="714.2" cy="84.1" r="2.2" fill="#d80c0c"/><circle cx="609.5" cy="48.2" r="2.2" fill="#d80c0c"/><circle cx="603.1" cy="493.8" r="2.2" fill="#d80c0c"/><circle cx="665.4" cy="318.5" r="2.2" fill="#d80c0c"/><circle cx="229.1" cy="467.7" r="2.2" fill="#d80c0c"/><circle cx="871.0" cy="11.4" r="2.2" fill="#d80c0c"/><circle cx="596.3" cy="172.3" r="2.2" fill="#d80c0c"/><circle cx="395.0" cy="35.0" r="2.2" fill="#d80c0c"/><circle cx="323.5" cy="381.3" r="2.2" fill="#d80c0c"/><circle cx="344.5" cy="269.0" r="2.2" fill="#d80c0c"/><circle cx="492.7" cy="264.8" r="2.2" fill="#d80c0c"/><circle cx="227.7" cy="254.6" r="2.2" fill="#d80c0c"/><circle cx="617.0" cy="135.6" r="2.2" fill="#d80c0c"/><circle cx="146.2" cy="549.7" r="2.2" fill="#d80c0c"/><circle cx="784.3" cy="71.2" r="2.2" fill="#d80c0c"/><circle cx="425.0" cy="222.7" r="2.2" fill="#d80c0c"/><circle cx="108.6" cy="113.8" r="2.2" fill="#d80c0c"/><circle cx="639.1" cy="461.1" r="2.2" fill="#d80c0c"/><circle cx="345.2" cy="333.8" r="2.2" fill="#d80c0c"/><circle cx="255.3" cy="335.6" r="2.2" fill="#d80c0c"/><circle cx="304.3" cy="207.7" r="2.2" fill="#d80c0c"/><circle cx="697.2" cy="389.6" r="2.2" fill="#d80c0c"/><circle cx="536.5" cy="341.4" r="2.2" fill="#d80c0c"/><circle cx="190.7" cy="449.9" r="2.2" fill="#d80c0c"/><circle cx="657.7" cy="233.2" r="2.2" fill="#d80c0c"/><circle cx="585.6" cy="379.6" r="2.2" fill="#d80c0c"/><circle cx="569.2" cy="526.8" r="2.2" fill="#d80c0c"/><circle cx="830.8" cy="44.0" r="2.2" fill="#d80c0c"/><circle cx="693.3" cy="437.8" r="2.2" fill="#d80c0c"/><circle cx="691.0" cy="323.7" r="2.2" fill="#d80c0c"/><circle cx="201.7" cy="415.8" r="2.2" fill="#d80c0c"/><circle cx="430.1" cy="512.8" r="2.2" fill="#d80c0c"/><circle cx="666.0" cy="124.2" r="2.2" fill="#d80c0c"/><circle cx="699.1" cy="451.9" r="2.2" fill="#d80c0c"/><circle cx="388.4" cy="64.3" r="2.2" fill="#d80c0c"/><circle cx="527.5" cy="156.5" r="2.2" fill="#d80c0c"/><circle cx="840.5" cy="135.5" r="2.2" fill="#d80c0c"/><circle cx="660.2" cy="100.7" r="2.2" fill="#d80c0c"/><circle cx="419.4" cy="288.5" r="2.2" fill="#d80c0c"/><circle cx="697.9" cy="127.4" r="2.2" fill="#d80c0c"/><circle cx="788.3" cy="103.3" r="2.2" fill="#d80c0c"/><circle cx="649.9" cy="137.1" r="2.2" fill="#d80c0c"/><circle cx="289.0" cy="39.1" r="2.2" fill="#d80c0c"/><circle cx="720.2" cy="128.0" r="2.2" fill="#d80c0c"/><circle cx="212.1" cy="299.2" r="2.2" fill="#d80c0c"/><circle cx="10.8" cy="535.6" r="2.2" fill="#d80c0c"/><circle cx="514.5" cy="365.1" r="2.2" fill="#d80c0c"/><circle cx="172.5" cy="501.7" r="2.2" fill="#d80c0c"/><circle cx="459.1" cy="276.0" r="2.2" fill="#d80c0c"/><circle cx="32.5" cy="550.1" r="2.2" fill="#d80c0c"/><circle cx="559.5" cy="348.6" r="2.2" fill="#d80c0c"/><circle cx="561.5" cy="163.9" r="2.2" fill="#d80c0c"/><circle cx="596.0" cy="414.3" r="2.2" fill="#d80c0c"/><circle cx="361.9" cy="40.0" r="2.2" fill="#d80c0c"/><circle cx="26.2" cy="544.0" r="2.2" fill="#d80c0c"/><circle cx="602.7" cy="174.1" r="2.2" fill="#d80c0c"/><circle cx="51.5" cy="520.7" r="2.2" fill="#d80c0c"/><circle cx="118.9" cy="431.8" r="2.2" fill="#d80c0c"/><circle cx="109.6" cy="494.2" r="2.2" fill="#d80c0c"/><circle cx="31.7" cy="4.2" r="2.2" fill="#d80c0c"/><circle cx="563.0" cy="444.8" r="2.2" fill="#d80c0c"/><circle cx="313.2" cy="259.2" r="2.2" fill="#d80c0c"/><circle cx="163.0" cy="4.7" r="2.2" fill="#d80c0c"/><circle cx="531.3" cy="399.1" r="2.2" fill="#d80c0c"/><circle cx="755.0" cy="278.3" r="2.2" fill="#d80c0c"/><circle cx="241.0" cy="419.6" r="2.2" fill="#d80c0c"/><circle cx="765.5" cy="173.6" r="2.2" fill="#d80c0c"/><circle cx="563.3" cy="59.5" r="2.2" fill="#d80c0c"/><circle cx="683.0" cy="205.7" r="2.2" fill="#d80c0c"/><circle cx="39.0" cy="445.8" r="2.2" fill="#d80c0c"/><circle cx="299.3" cy="294.2" r="2.2" fill="#d80c0c"/><circle cx="645.4" cy="125.0" r="2.2" fill="#d80c0c"/><circle cx="307.3" cy="130.4" r="2.2" fill="#d80c0c"/><circle cx="735.2" cy="380.2" r="2.2" fill="#d80c0c"/><circle cx="706.5" cy="199.7" r="2.2" fill="#d80c0c"/><circle cx="590.1" cy="31.2" r="2.2" fill="#d80c0c"/><circle cx="450.6" cy="363.8" r="2.2" fill="#d80c0c"/><circle cx="233.1" cy="464.6" r="2.2" fill="#d80c0c"/><circle cx="502.7" cy="240.4" r="2.2" fill="#d80c0c"/><circle cx="675.9" cy="127.7" r="2.2" fill="#d80c0c"/><circle cx="511.1" cy="294.1" r="2.2" fill="#d80c0c"/><circle cx="650.2" cy="23.2" r="2.2" fill="#d80c0c"/><circle cx="732.5" cy="240.4" r="2.2" fill="#d80c0c"/><circle cx="616.2" cy="297.6" r="2.2" fill="#d80c0c"/><circle cx="339.3" cy="288.7" r="2.2" fill="#d80c0c"/><circle cx="200.3" cy="411.3" r="2.2" fill="#d80c0c"/><circle cx="867.2" cy="15.5" r="2.2" fill="#d80c0c"/><circle cx="575.6" cy="207.4" r="2.2" fill="#d80c0c"/><circle cx="28.4" cy="564.9" r="2.2" fill="#d80c0c"/><circle cx="427.2" cy="60.8" r="2.2" fill="#d80c0c"/><circle cx="274.7" cy="438.6" r="2.2" fill="#d80c0c"/><circle cx="73.3" cy="481.1" r="2.2" fill="#d80c0c"/><circle cx="496.2" cy="380.0" r="2.2" fill="#d80c0c"/><circle cx="679.4" cy="146.4" r="2.2" fill="#d80c0c"/><circle cx="396.6" cy="195.7" r="2.2" fill="#d80c0c"/><circle cx="148.1" cy="467.2" r="2.2" fill="#d80c0c"/><circle cx="706.4" cy="544.6" r="2.2" fill="#d80c0c"/><circle cx="441.6" cy="345.4" r="2.2" fill="#d80c0c"/><circle cx="130.9" cy="412.6" r="2.2" fill="#d80c0c"/><circle cx="138.8" cy="67.8" r="2.2" fill="#d80c0c"/><circle cx="811.2" cy="84.7" r="2.2" fill="#d80c0c"/><circle cx="204.7" cy="531.0" r="2.2" fill="#d80c0c"/><circle cx="497.7" cy="98.9" r="2.2" fill="#d80c0c"/><circle cx="683.4" cy="358.1" r="2.2" fill="#d80c0c"/><circle cx="541.2" cy="183.7" r="2.2" fill="#d80c0c"/><circle cx="811.3" cy="250.4" r="2.2" fill="#d80c0c"/><circle cx="306.8" cy="214.1" r="2.2" fill="#d80c0c"/><circle cx="840.3" cy="435.2" r="2.2" fill="#d80c0c"/><circle cx="825.1" cy="66.8" r="2.2" fill="#d80c0c"/><circle cx="465.1" cy="320.8" r="2.2" fill="#d80c0c"/><circle cx="794.0" cy="188.7" r="2.2" fill="#d80c0c"/><circle cx="869.5" cy="12.8" r="2.2" fill="#d80c0c"/><circle cx="639.1" cy="138.2" r="2.2" fill="#d80c0c"/><circle cx="169.3" cy="98.5" r="2.2" fill="#d80c0c"/><circle cx="438.5" cy="336.0" r="2.2" fill="#d80c0c"/><circle cx="82.4" cy="458.0" r="2.2" fill="#d80c0c"/><circle cx="346.4" cy="464.4" r="2.2" fill="#d80c0c"/><circle cx="413.6" cy="274.6" r="2.2" fill="#d80c0c"/><circle cx="789.5" cy="562.6" r="2.2" fill="#d80c0c"/><circle cx="137.4" cy="461.2" r="2.2" fill="#d80c0c"/><circle cx="520.3" cy="256.5" r="2.2" fill="#d80c0c"/><circle cx="34.3" cy="551.6" r="2.2" fill="#d80c0c"/><circle cx="234.5" cy="425.6" r="2.2" fill="#d80c0c"/><circle cx="215.3" cy="433.5" r="2.2" fill="#d80c0c"/><circle cx="836.7" cy="392.7" r="2.2" fill="#d80c0c"/><circle cx="78.1" cy="462.9" r="2.2" fill="#d80c0c"/><circle cx="234.7" cy="304.4" r="2.2" fill="#d80c0c"/><circle cx="140.7" cy="440.6" r="2.2" fill="#d80c0c"/><circle cx="678.5" cy="346.5" r="2.2" fill="#d80c0c"/><circle cx="325.9" cy="213.7" r="2.2" fill="#d80c0c"/><circle cx="136.7" cy="420.4" r="2.2" fill="#d80c0c"/><circle cx="839.5" cy="248.1" r="2.2" fill="#d80c0c"/><circle cx="325.0" cy="506.9" r="2.2" fill="#d80c0c"/><circle cx="126.4" cy="411.0" r="2.2" fill="#d80c0c"/><circle cx="236.2" cy="462.5" r="2.2" fill="#d80c0c"/><circle cx="790.6" cy="517.9" r="2.2" fill="#d80c0c"/><circle cx="884.5" cy="0.0" r="2.2" fill="#d80c0c"/><circle cx="18.6" cy="92.7" r="2.2" fill="#d80c0c"/><circle cx="738.2" cy="356.9" r="2.2" fill="#d80c0c"/><circle cx="673.7" cy="115.1" r="2.2" fill="#d80c0c"/><circle cx="356.5" cy="113.9" r="2.2" fill="#d80c0c"/><circle cx="562.6" cy="259.4" r="2.2" fill="#d80c0c"/><circle cx="717.4" cy="76.6" r="2.2" fill="#d80c0c"/><circle cx="477.6" cy="202.8" r="2.2" fill="#d80c0c"/><circle cx="416.3" cy="60.9" r="2.2" fill="#d80c0c"/><circle cx="797.6" cy="132.2" r="2.2" fill="#d80c0c"/><circle cx="65.7" cy="402.8" r="2.2" fill="#d80c0c"/><circle cx="64.5" cy="504.8" r="2.2" fill="#d80c0c"/><circle cx="498.0" cy="170.1" r="2.2" fill="#d80c0c"/><circle cx="135.5" cy="416.4" r="2.2" fill="#d80c0c"/><circle cx="314.9" cy="344.3" r="2.2" fill="#d80c0c"/><circle cx="105.8" cy="84.8" r="2.2" fill="#d80c0c"/><circle cx="254.8" cy="378.0" r="2.2" fill="#d80c0c"/><circle cx="301.9" cy="155.6" r="2.2" fill="#d80c0c"/></svg>
<div style="left:654px;top:1300px;width:455px;height:229px;background:#fff;"></div>
<div style="left:1120px;top:1300px;width:1px;height:231px;background:#a0a0a0;"></div>
<div style="left:654px;top:1330px;width:82px;height:21px;background:linear-gradient(#f9b07a,#f28a4e);"></div>
<div style="left:677.00px;top:1329.28px;font-size:16px;line-height:19.20px;color:#222;white-space:pre;transform:scaleX(0.9715);transform-origin:0 0;">Var 1</div>
<div style="left:737px;top:1330px;width:124px;height:21px;background:#e6e6e6;"></div>
<div style="left:794.55px;top:1329.28px;font-size:16px;line-height:19.20px;color:#111;white-space:pre;">1</div>
<div style="left:867.00px;top:1329.28px;font-size:16px;line-height:19.20px;color:#111;white-space:pre;transform:scaleX(0.9945);transform-origin:0 0;">0.472611863...</div>
<div style="left:992.00px;top:1329.28px;font-size:16px;line-height:19.20px;color:#111;white-space:pre;transform:scaleX(0.9835);transform-origin:0 0;">0.597773827...</div>
<div style="left:654px;top:1351px;width:455px;height:1px;background:#eeeeee;"></div>
<div style="left:654px;top:1352px;width:82px;height:25px;background:linear-gradient(#e9e9e9,#d3d3d3);"></div>
<div style="left:677.00px;top:1354.58px;font-size:16px;line-height:19.20px;color:#222;white-space:pre;transform:scaleX(0.9715);transform-origin:0 0;">Var 2</div>
<div style="left:743.00px;top:1354.58px;font-size:16px;line-height:19.20px;color:#111;white-space:pre;transform:scaleX(0.9945);transform-origin:0 0;">0.472611863...</div>
<div style="left:861px;top:1352px;width:125px;height:25px;background:#e6e6e6;"></div>
<div style="left:919.05px;top:1354.58px;font-size:16px;line-height:19.20px;color:#111;white-space:pre;">1</div>
<div style="left:992.00px;top:1354.58px;font-size:16px;line-height:19.20px;color:#111;white-space:pre;transform:scaleX(0.9835);transform-origin:0 0;">0.686788558...</div>
<div style="left:654px;top:1377px;width:455px;height:1px;background:#eeeeee;"></div>
<div style="left:654px;top:1378px;width:82px;height:24px;background:linear-gradient(#e9e9e9,#d3d3d3);"></div>
<div style="left:677.00px;top:1380.58px;font-size:16px;line-height:19.20px;color:#222;white-space:pre;transform:scaleX(0.9715);transform-origin:0 0;">Var 3</div>
<div style="left:743.00px;top:1380.58px;font-size:16px;line-height:19.20px;color:#111;white-space:pre;transform:scaleX(0.9835);transform-origin:0 0;">0.597773827...</div>
<div style="left:867.00px;top:1380.58px;font-size:16px;line-height:19.20px;color:#111;white-space:pre;transform:scaleX(0.9835);transform-origin:0 0;">0.686788558...</div>
<div style="left:986px;top:1378px;width:123px;height:24px;background:#e6e6e6;"></div>
<div style="left:1043.05px;top:1380.58px;font-size:16px;line-height:19.20px;color:#111;white-space:pre;">1</div>
<div style="left:654px;top:1402px;width:455px;height:1px;background:#eeeeee;"></div>
<div style="left:861px;top:1329px;width:126px;height:23px;border:2px solid #2b5ba8;box-sizing:border-box;"></div>
<div style="left:9px;top:326px;width:1584px;height:1003px;box-shadow:0 0 10px rgba(0,0,0,0.25);background:#f0f0f0;"></div>
<div style="left:9px;top:326px;width:1584px;height:1003px;background:#f0f0f0;border:1.3px solid #3a6eae;box-sizing:border-box;"></div>
<div style="left:9px;top:326px;width:1584px;height:45px;background:#2c5798;"></div>
<div style="left:9px;top:326px;width:1584px;height:1.5px;background:#2460b0;"></div>
<svg style="left:22px;top:342px;" width="24" height="24" viewBox="0 0 24 24"><circle cx="12" cy="12" r="11.5" fill="#fff"/><circle cx="12" cy="12" r="10.3" fill="none" stroke="#7cc4c4" stroke-width="0.9" stroke-dasharray="1.6 0.9"/><path d="M7.5 17.5 V8 M16.5 17.5 V7" fill="none" stroke="#2f8f9a" stroke-width="1.2"/><path d="M7.5 8 L12 15 L16.5 7" fill="none" stroke="#2f8f9a" stroke-width="1.1"/><path d="M7 5.5 H10.5 L7.5 9.5 H10.5" fill="none" stroke="#2f8f9a" stroke-width="0.9"/><path d="M6.5 17.5 H10 M14 17.5 H17.5" stroke="#2f8f9a" stroke-width="0.9"/></svg>
<div style="left:57.00px;top:343.41px;font-size:18px;line-height:21.60px;color:#fff;white-space:pre;">Distribution fitting</div>
<div style="left:1452px;top:346px;width:9px;height:3px;background:#dfe6ef;"></div>
<div style="left:1505px;top:337px;width:13px;height:13px;box-sizing:border-box;border:2px solid #e8edf3;border-top-width:2px;"></div>
<svg style="left:1559px;top:337px;" width="13" height="13" viewBox="0 0 13 13"><path d="M1.5 1.5 L11.5 11.5 M11.5 1.5 L1.5 11.5" stroke="#eef2f6" stroke-width="2.2"/></svg>
<div style="left:32px;top:383px;width:494px;height:631px;border:1px solid #d4d4d4;box-sizing:border-box;border-radius:4px;"></div>
<div style="left:39px;top:375px;width:99px;height:16px;background:#f0f0f0;"></div>
<div style="left:44.00px;top:373.58px;font-size:16px;line-height:19.20px;color:#000;white-space:pre;transform:scaleX(1.0110);transform-origin:0 0;">Distributions</div>
<div style="left:135.00px;top:409.58px;font-size:16px;line-height:19.20px;color:#000;white-space:pre;transform:scaleX(0.9875);transform-origin:0 0;">Data location :</div>
<div style="left:245px;top:404px;width:234px;height:30px;background:#fff;border:1px solid #b4b4b4;box-sizing:border-box;"></div>
<div style="left:251.00px;top:409.58px;font-size:16px;line-height:19.20px;color:#7a7a7a;white-space:pre;transform:scaleX(0.9843);transform-origin:0 0;">&#x27;[Book3]Sheet1&#x27;!C3:E467</div>
<div style="left:481px;top:404px;width:36px;height:30px;background:#fdfdfd;border:1px solid #8c8c8c;box-sizing:border-box;"></div>
<svg style="left:486.0px;top:410.0px;" width="26" height="18" viewBox="0 0 26 18"><rect x="1" y="2" width="9" height="5" fill="#4a78b0"/><path d="M11 4.5 H25 M1 10 H25 M1 15.5 H25" stroke="#c9c9c9" stroke-width="1.2"/><rect x="16" y="11" width="9" height="6" fill="#4a86c8"/><path d="M17 4 L13 8 M13 5 V8 H16" fill="none" stroke="#e89a2a" stroke-width="1.5"/></svg>
<div style="left:41px;top:451px;width:476px;height:63px;border:1px solid #d4d4d4;box-sizing:border-box;border-radius:4px;"></div>
<div style="left:50px;top:443px;width:81px;height:16px;background:#f0f0f0;"></div>
<div style="left:55.00px;top:441.58px;font-size:16px;line-height:19.20px;color:#000;white-space:pre;font-weight:bold;transform:scaleX(0.9286);transform-origin:0 0;">Truncated</div>
<div style="left:54.00px;top:476.58px;font-size:16px;line-height:19.20px;color:#000;white-space:pre;transform:scaleX(0.9229);transform-origin:0 0;">Min :</div>
<div style="left:92px;top:472px;width:68px;height:31px;background:#fff;border:1px solid #b9b9b9;box-sizing:border-box;"></div>
<div style="left:176.00px;top:476.58px;font-size:16px;line-height:19.20px;color:#000;white-space:pre;transform:scaleX(0.8947);transform-origin:0 0;">Max :</div>
<div style="left:220px;top:472px;width:69px;height:31px;background:#fff;border:1px solid #b9b9b9;box-sizing:border-box;"></div>
<div style="left:305px;top:474px;width:18px;height:18px;background:#fff;border:1px solid #333;box-sizing:border-box;"></div>
<div style="left:327.00px;top:473.58px;font-size:16px;line-height:19.20px;color:#000;white-space:pre;transform:scaleX(0.9878);transform-origin:0 0;">Enabled</div>
<div style="left:46.00px;top:526.58px;font-size:16px;line-height:19.20px;color:#000;white-space:pre;transform:scaleX(0.9783);transform-origin:0 0;">Distribution List</div>
<div style="left:304px;top:518px;width:106px;height:31px;background:#fdfdfd;border:1px solid #a3a3a3;box-sizing:border-box;"></div>
<div style="left:327.50px;top:524.08px;font-size:16px;line-height:19.20px;color:#000;white-space:pre;transform:scaleX(0.9903);transform-origin:0 0;">Remove</div>
<div style="left:413px;top:518px;width:106px;height:31px;background:#fdfdfd;border:1px solid #a3a3a3;box-sizing:border-box;"></div>
<div style="left:452.00px;top:524.08px;font-size:16px;line-height:19.20px;color:#000;white-space:pre;transform:scaleX(0.9835);transform-origin:0 0;">Add</div>
<div style="left:41px;top:552px;width:476px;height:447px;background:#fff;border:1px solid #7d7d7d;box-sizing:border-box;"></div>
<div style="left:43px;top:554px;width:126px;height:24px;background:#4a83bd;"></div>
<div style="left:84.21px;top:556.58px;font-size:16px;line-height:19.20px;color:#fff;white-space:pre;font-weight:bold;">Name</div>
<div style="left:171px;top:554px;width:89px;height:24px;background:#4a83bd;"></div>
<div style="left:199.50px;top:556.58px;font-size:16px;line-height:19.20px;color:#fff;white-space:pre;font-weight:bold;">-SIC</div>
<div style="left:262px;top:554px;width:89px;height:24px;background:#4a83bd;"></div>
<div style="left:290.06px;top:556.58px;font-size:16px;line-height:19.20px;color:#fff;white-space:pre;font-weight:bold;">-AIC</div>
<div style="left:353px;top:554px;width:89px;height:24px;background:#4a83bd;"></div>
<div style="left:374.84px;top:556.58px;font-size:16px;line-height:19.20px;color:#fff;white-space:pre;font-weight:bold;">-HQIC</div>
<div style="left:444px;top:554px;width:65px;height:24px;background:#4a83bd;"></div>
<div style="left:465.84px;top:556.58px;font-size:16px;line-height:19.20px;color:#fff;white-space:pre;font-weight:bold;">LR</div>
<div style="left:509px;top:554px;width:7px;height:24px;background:#e6e6e6;"></div>
<svg style="left:248px;top:560px;" width="10" height="6" viewBox="0 0 10 6"><path d="M0 0 H10 L5 5 Z" fill="#fff"/></svg>
<div style="left:43px;top:606px;width:466px;height:1px;background:#ececec;"></div>
<div style="left:43px;top:635px;width:466px;height:1px;background:#ececec;"></div>
<div style="left:43px;top:664px;width:466px;height:1px;background:#ececec;"></div>
<div style="left:43px;top:693px;width:466px;height:1px;background:#ececec;"></div>
<div style="left:43px;top:722px;width:466px;height:1px;background:#ececec;"></div>
<div style="left:43px;top:751px;width:466px;height:1px;background:#ececec;"></div>
<div style="left:43px;top:780px;width:466px;height:1px;background:#ececec;"></div>
<div style="left:43px;top:809px;width:466px;height:1px;background:#ececec;"></div>
<div style="left:43px;top:838px;width:466px;height:1px;background:#ececec;"></div>
<div style="left:43px;top:867px;width:466px;height:1px;background:#ececec;"></div>
<div style="left:43px;top:896px;width:466px;height:1px;background:#ececec;"></div>
<div style="left:43px;top:925px;width:466px;height:1px;background:#ececec;"></div>
<div style="left:43px;top:954px;width:466px;height:1px;background:#ececec;"></div>
<div style="left:43px;top:983px;width:466px;height:1px;background:#ececec;"></div>
<div style="left:170px;top:578px;width:1px;height:420px;background:#ececec;"></div>
<div style="left:261px;top:578px;width:1px;height:420px;background:#ececec;"></div>
<div style="left:352px;top:578px;width:1px;height:420px;background:#ececec;"></div>
<div style="left:443px;top:578px;width:1px;height:420px;background:#ececec;"></div>
<div style="left:43px;top:578px;width:127px;height:28px;background:#ef6b5f;"></div>
<div style="left:171px;top:578px;width:90px;height:28px;background:#ef6b5f;"></div>
<div style="left:262px;top:578px;width:90px;height:28px;background:#ef6b5f;"></div>
<div style="left:353px;top:578px;width:90px;height:28px;background:#ef6b5f;"></div>
<div style="left:444px;top:578px;width:65px;height:28px;background:#ef6b5f;"></div>
<div style="left:83.34px;top:583.08px;font-size:16px;line-height:19.20px;color:#000;white-space:pre;font-weight:bold;">Lognormal</div>
<div style="left:184.94px;top:583.08px;font-size:16px;line-height:19.20px;color:#000;white-space:pre;font-weight:bold;">-5867.344</div>
<div style="left:275.94px;top:583.08px;font-size:16px;line-height:19.20px;color:#000;white-space:pre;font-weight:bold;">-5856.871</div>
<div style="left:366.94px;top:583.08px;font-size:16px;line-height:19.20px;color:#000;white-space:pre;font-weight:bold;">-5860.782</div>
<div style="left:465.96px;top:583.08px;font-size:16px;line-height:19.20px;color:#000;white-space:pre;font-weight:bold;">0.361</div>
<div style="left:68.17px;top:612.08px;font-size:16px;line-height:19.20px;color:#000;white-space:pre;font-weight:bold;">ExtValueMax</div>
<div style="left:184.94px;top:612.08px;font-size:16px;line-height:19.20px;color:#000;white-space:pre;font-weight:bold;">-5867.989</div>
<div style="left:275.94px;top:612.08px;font-size:16px;line-height:19.20px;color:#000;white-space:pre;font-weight:bold;">-5857.517</div>
<div style="left:366.94px;top:612.08px;font-size:16px;line-height:19.20px;color:#000;white-space:pre;font-weight:bold;">-5861.427</div>
<div style="left:465.96px;top:612.08px;font-size:16px;line-height:19.20px;color:#000;white-space:pre;font-weight:bold;">0.261</div>
<div style="left:43px;top:636px;width:127px;height:28px;background:#89bdbd;"></div>
<div style="left:171px;top:636px;width:90px;height:28px;background:#89bdbd;"></div>
<div style="left:262px;top:636px;width:90px;height:28px;background:#89bdbd;"></div>
<div style="left:353px;top:636px;width:90px;height:28px;background:#89bdbd;"></div>
<div style="left:444px;top:636px;width:65px;height:28px;background:#89bdbd;"></div>
<div style="left:77.98px;top:641.08px;font-size:16px;line-height:19.20px;color:#000;white-space:pre;font-weight:bold;">LogGamma</div>
<div style="left:184.94px;top:641.08px;font-size:16px;line-height:19.20px;color:#000;white-space:pre;font-weight:bold;">-5872.546</div>
<div style="left:275.94px;top:641.08px;font-size:16px;line-height:19.20px;color:#000;white-space:pre;font-weight:bold;">-5856.842</div>
<div style="left:366.94px;top:641.08px;font-size:16px;line-height:19.20px;color:#000;white-space:pre;font-weight:bold;">-5862.703</div>
<div style="left:465.96px;top:641.08px;font-size:16px;line-height:19.20px;color:#000;white-space:pre;font-weight:bold;">1.000</div>
<div style="left:132.21px;top:670.08px;font-size:16px;line-height:19.20px;color:#000;white-space:pre;font-weight:bold;">GEV</div>
<div style="left:184.94px;top:670.08px;font-size:16px;line-height:19.20px;color:#000;white-space:pre;font-weight:bold;">-5873.581</div>
<div style="left:275.94px;top:670.08px;font-size:16px;line-height:19.20px;color:#000;white-space:pre;font-weight:bold;">-5857.876</div>
<div style="left:366.94px;top:670.08px;font-size:16px;line-height:19.20px;color:#000;white-space:pre;font-weight:bold;">-5863.737</div>
<div style="left:465.96px;top:670.08px;font-size:16px;line-height:19.20px;color:#000;white-space:pre;font-weight:bold;">0.596</div>
<div style="left:43px;top:694px;width:127px;height:28px;background:#fbe87e;"></div>
<div style="left:171px;top:694px;width:90px;height:28px;background:#fbe87e;"></div>
<div style="left:262px;top:694px;width:90px;height:28px;background:#fbe87e;"></div>
<div style="left:353px;top:694px;width:90px;height:28px;background:#fbe87e;"></div>
<div style="left:444px;top:694px;width:65px;height:28px;background:#fbe87e;"></div>
<div style="left:92.22px;top:699.08px;font-size:16px;line-height:19.20px;color:#000;white-space:pre;font-weight:bold;">GLogistic</div>
<div style="left:184.94px;top:699.08px;font-size:16px;line-height:19.20px;color:#000;white-space:pre;font-weight:bold;">-5874.068</div>
<div style="left:275.94px;top:699.08px;font-size:16px;line-height:19.20px;color:#000;white-space:pre;font-weight:bold;">-5858.363</div>
<div style="left:366.94px;top:699.08px;font-size:16px;line-height:19.20px;color:#000;white-space:pre;font-weight:bold;">-5864.224</div>
<div style="left:465.96px;top:699.08px;font-size:16px;line-height:19.20px;color:#000;white-space:pre;font-weight:bold;">0.467</div>
<div style="left:109.11px;top:728.08px;font-size:16px;line-height:19.20px;color:#000;white-space:pre;font-weight:bold;">Fatigue</div>
<div style="left:184.94px;top:728.08px;font-size:16px;line-height:19.20px;color:#000;white-space:pre;font-weight:bold;">-5874.780</div>
<div style="left:275.94px;top:728.08px;font-size:16px;line-height:19.20px;color:#000;white-space:pre;font-weight:bold;">-5859.075</div>
<div style="left:366.94px;top:728.08px;font-size:16px;line-height:19.20px;color:#000;white-space:pre;font-weight:bold;">-5864.936</div>
<div style="left:465.96px;top:728.08px;font-size:16px;line-height:19.20px;color:#000;white-space:pre;font-weight:bold;">0.327</div>
<div style="left:132.22px;top:757.08px;font-size:16px;line-height:19.20px;color:#000;white-space:pre;font-weight:bold;">Burr</div>
<div style="left:184.94px;top:757.08px;font-size:16px;line-height:19.20px;color:#000;white-space:pre;font-weight:bold;">-5881.329</div>
<div style="left:275.94px;top:757.08px;font-size:16px;line-height:19.20px;color:#000;white-space:pre;font-weight:bold;">-5860.395</div>
<div style="left:366.94px;top:757.08px;font-size:16px;line-height:19.20px;color:#000;white-space:pre;font-weight:bold;">-5868.204</div>
<div style="left:465.96px;top:757.08px;font-size:16px;line-height:19.20px;color:#000;white-space:pre;font-weight:bold;">0.463</div>
<div style="left:111.77px;top:786.08px;font-size:16px;line-height:19.20px;color:#000;white-space:pre;font-weight:bold;">Dagum</div>
<div style="left:184.94px;top:786.08px;font-size:16px;line-height:19.20px;color:#000;white-space:pre;font-weight:bold;">-5896.613</div>
<div style="left:275.94px;top:786.08px;font-size:16px;line-height:19.20px;color:#000;white-space:pre;font-weight:bold;">-5880.908</div>
<div style="left:366.94px;top:786.08px;font-size:16px;line-height:19.20px;color:#000;white-space:pre;font-weight:bold;">-5886.769</div>
<div style="left:465.96px;top:786.08px;font-size:16px;line-height:19.20px;color:#000;white-space:pre;font-weight:bold;">0.000</div>
<div style="left:107.30px;top:815.08px;font-size:16px;line-height:19.20px;color:#000;white-space:pre;font-weight:bold;">Gamma</div>
<div style="left:184.94px;top:815.08px;font-size:16px;line-height:19.20px;color:#000;white-space:pre;font-weight:bold;">-5898.038</div>
<div style="left:275.94px;top:815.08px;font-size:16px;line-height:19.20px;color:#000;white-space:pre;font-weight:bold;">-5887.565</div>
<div style="left:366.94px;top:815.08px;font-size:16px;line-height:19.20px;color:#000;white-space:pre;font-weight:bold;">-5891.475</div>
<div style="left:465.96px;top:815.08px;font-size:16px;line-height:19.20px;color:#000;white-space:pre;font-weight:bold;">0.000</div>
<div style="left:43px;top:838px;width:466px;height:2px;background:#000;"></div>
<div style="left:32px;top:1037px;width:494px;height:204px;border:1px solid #d4d4d4;box-sizing:border-box;border-radius:4px;"></div>
<div style="left:39px;top:1029px;width:88px;height:16px;background:#f0f0f0;"></div>
<div style="left:44.00px;top:1027.58px;font-size:16px;line-height:19.20px;color:#000;white-space:pre;transform:scaleX(0.9432);transform-origin:0 0;">Parameters</div>
<div style="left:46px;top:1057px;width:18px;height:18px;background:#fff;border:1px solid #333;box-sizing:border-box;"></div>
<svg style="left:46px;top:1057px;" width="18" height="18" viewBox="0 0 18 18"><path d="M4 9 L7.5 12.5 L14 5.5" fill="none" stroke="#8a8a8a" stroke-width="2.2"/></svg>
<div style="left:68.00px;top:1057.58px;font-size:16px;line-height:19.20px;color:#000;white-space:pre;transform:scaleX(0.9433);transform-origin:0 0;">Overlay</div>
<div style="left:208px;top:1058px;width:18px;height:18px;background:#fff;border:1px solid #9a9a9a;box-sizing:border-box;"></div>
<div style="left:231.00px;top:1057.58px;font-size:16px;line-height:19.20px;color:#a3a3a3;white-space:pre;transform:scaleX(0.9930);transform-origin:0 0;">Include Uncertainty</div>
<div style="left:31px;top:1278px;width:113px;height:33px;background:#fdfdfd;border:1px solid #a3a3a3;box-sizing:border-box;"></div>
<div style="left:53.50px;top:1285.08px;font-size:16px;line-height:19.20px;color:#000;white-space:pre;transform:scaleX(1.0193);transform-origin:0 0;">Generate</div>
<div style="left:535px;top:382px;width:733px;height:856px;background:#fff;border:1px solid #a0a0a0;box-sizing:border-box;"></div>
<div style="left:536px;top:423px;width:731px;height:1px;background:#b0b0b0;"></div>
<svg style="left:543px;top:391px;" width="22" height="22" viewBox="0 0 22 22"><path d="M1.7 16 V1.7 H14.5" fill="none" stroke="#5b8ed0" stroke-width="1.3"/><rect x="6" y="4" width="13.5" height="15.3" fill="none" stroke="#111" stroke-width="1.9"/></svg>
<svg style="left:582px;top:391px;" width="24" height="23" viewBox="0 0 24 23"><path d="M5.5 8.8 V1.8 H16 L17 2.8 V8.8" fill="none" stroke="#5b8ed0" stroke-width="1.2"/><path d="M1.9 15.5 V8.8 H21.1 V15.5 H18 V13.8 H5 V15.5 Z" fill="none" stroke="#111" stroke-width="1.9"/><path d="M5 15.5 V20.5 H18 V15.5" fill="none" stroke="#5b8ed0" stroke-width="1.2"/></svg>
<div style="left:619px;top:385px;width:1px;height:35px;background:#c8c8c8;"></div>
<svg style="left:633px;top:390px;" width="26" height="24" viewBox="0 0 26 24"><path d="M6 2 H3 V19 H6 M20 2 H23 V19 H20" fill="none" stroke="#333" stroke-width="1.8"/><path d="M10 6 L16 12 M16 6 L10 12" stroke="#5b8ed0" stroke-width="1.4"/><path d="M4 23 H22" stroke="#5b8ed0" stroke-width="1.2"/></svg>
<div style="left:670px;top:385px;width:1px;height:35px;background:#c8c8c8;"></div>
<svg style="left:684px;top:390px;" width="28" height="24" viewBox="0 0 28 24"><text x="0" y="19" font-family="Liberation Serif" font-size="22" fill="#222">f</text><text x="8" y="20" font-family="Liberation Serif" font-size="14" fill="#5b8ed0">(x)</text></svg>
<svg style="left:722px;top:390px;" width="28" height="24" viewBox="0 0 28 24"><text x="0" y="19" font-family="Liberation Serif" font-size="22" fill="#222">F</text><text x="10" y="20" font-family="Liberation Serif" font-size="14" fill="#5b8ed0">(x)</text></svg>
<svg style="left:761px;top:391px;" width="26" height="22" viewBox="0 0 26 22"><text x="1" y="11" font-family="Liberation Sans" font-weight="bold" font-size="12" fill="#222">QQ</text><text x="1" y="20" font-family="Liberation Sans" font-weight="bold" font-size="8" fill="#222">PlOT</text></svg>
<svg style="left:800px;top:391px;" width="26" height="22" viewBox="0 0 26 22"><text x="1" y="11" font-family="Liberation Sans" font-weight="bold" font-size="12" fill="#222">PP</text><text x="1" y="20" font-family="Liberation Sans" font-weight="bold" font-size="8" fill="#222">PlOT</text></svg>
<div style="left:838px;top:385px;width:1px;height:35px;background:#c8c8c8;"></div>
<svg style="left:855px;top:392px;" width="22" height="20" viewBox="0 0 22 20"><rect x="1" y="1" width="4" height="4" fill="#4a7fc0"/><rect x="1" y="7" width="4" height="4" fill="#4a7fc0"/><rect x="1" y="13" width="4" height="4" fill="#4a7fc0"/><path d="M7 3 H20 M9 6 H18 M7 9 H20 M9 12 H18 M7 15 H20" stroke="#4a7fc0" stroke-width="1.2"/></svg>
<div style="left:864.60px;top:464.98px;font-size:16px;line-height:19.20px;color:#000;white-space:pre;transform:scaleX(0.9922);transform-origin:0 0;">Overlay chart</div>
<div style="left:606px;top:495px;width:611px;height:692px;border:1px solid #a8a8a8;box-sizing:border-box;"></div>
<div style="left:719px;top:495px;width:1px;height:691px;background:#a8a8a8;"></div>
<div style="left:565.90px;top:1176.88px;font-size:16px;line-height:19.20px;color:#111;white-space:pre;transform:scaleX(0.9505);transform-origin:0 0;">0.00</div>
<div style="left:600px;top:1186px;width:6px;height:1px;background:#a0a0a0;"></div>
<div style="left:565.90px;top:1033.88px;font-size:16px;line-height:19.20px;color:#111;white-space:pre;transform:scaleX(0.9505);transform-origin:0 0;">0.05</div>
<div style="left:600px;top:1043px;width:6px;height:1px;background:#a0a0a0;"></div>
<div style="left:565.90px;top:890.88px;font-size:16px;line-height:19.20px;color:#111;white-space:pre;transform:scaleX(0.9505);transform-origin:0 0;">0.10</div>
<div style="left:600px;top:900px;width:6px;height:1px;background:#a0a0a0;"></div>
<div style="left:565.90px;top:747.88px;font-size:16px;line-height:19.20px;color:#111;white-space:pre;transform:scaleX(0.9505);transform-origin:0 0;">0.15</div>
<div style="left:600px;top:757px;width:6px;height:1px;background:#a0a0a0;"></div>
<div style="left:565.90px;top:604.88px;font-size:16px;line-height:19.20px;color:#111;white-space:pre;transform:scaleX(0.9505);transform-origin:0 0;">0.20</div>
<div style="left:600px;top:614px;width:6px;height:1px;background:#a0a0a0;"></div>
<div style="left:714.95px;top:1192.58px;font-size:16px;line-height:19.20px;color:#111;white-space:pre;">0</div>
<div style="left:719px;top:1186px;width:1px;height:5px;background:#a0a0a0;"></div>
<div style="left:867.00px;top:1192.58px;font-size:16px;line-height:19.20px;color:#111;white-space:pre;">10</div>
<div style="left:876px;top:1186px;width:1px;height:5px;background:#a0a0a0;"></div>
<div style="left:1023.50px;top:1192.58px;font-size:16px;line-height:19.20px;color:#111;white-space:pre;">20</div>
<div style="left:1032px;top:1186px;width:1px;height:5px;background:#a0a0a0;"></div>
<div style="left:1180.00px;top:1192.58px;font-size:16px;line-height:19.20px;color:#111;white-space:pre;">30</div>
<div style="left:1189px;top:1186px;width:1px;height:5px;background:#a0a0a0;"></div>
<div style="left:884.60px;top:1210.58px;font-size:16px;line-height:19.20px;color:#000;white-space:pre;font-weight:bold;transform:scaleX(1.0137);transform-origin:0 0;">Values</div>
<div style="left:475.6px;top:829.1px;font-size:16px;line-height:19.2px;font-weight:bold;white-space:pre;transform:rotate(-90deg) scaleX(0.9950);transform-origin:50% 50%;width:146.7px;text-align:center;">Relative Frequency</div>
<svg style="left:606px;top:495px;overflow:hidden;" width="610" height="693" viewBox="0 0 610 693"><rect x="152.00" y="687.80" width="9.58" height="3.20" fill="#4b84b6" stroke="#111" stroke-width="1.1"/><rect x="161.58" y="667.00" width="9.58" height="24.00" fill="#4b84b6" stroke="#111" stroke-width="1.1"/><rect x="171.16" y="559.00" width="9.58" height="132.00" fill="#4b84b6" stroke="#111" stroke-width="1.1"/><rect x="180.74" y="468.00" width="9.58" height="223.00" fill="#4b84b6" stroke="#111" stroke-width="1.1"/><rect x="190.32" y="205.00" width="9.58" height="486.00" fill="#4b84b6" stroke="#111" stroke-width="1.1"/><rect x="199.90" y="155.60" width="9.58" height="535.40" fill="#4b84b6" stroke="#111" stroke-width="1.1"/><rect x="209.48" y="101.60" width="9.58" height="589.40" fill="#4b84b6" stroke="#111" stroke-width="1.1"/><rect x="219.06" y="64.00" width="9.58" height="627.00" fill="#4b84b6" stroke="#111" stroke-width="1.1"/><rect x="228.64" y="209.00" width="9.58" height="482.00" fill="#4b84b6" stroke="#111" stroke-width="1.1"/><rect x="238.22" y="323.60" width="9.58" height="367.40" fill="#4b84b6" stroke="#111" stroke-width="1.1"/><rect x="247.80" y="327.00" width="9.58" height="364.00" fill="#4b84b6" stroke="#111" stroke-width="1.1"/><rect x="257.38" y="425.00" width="9.58" height="266.00" fill="#4b84b6" stroke="#111" stroke-width="1.1"/><rect x="266.96" y="489.00" width="9.58" height="202.00" fill="#4b84b6" stroke="#111" stroke-width="1.1"/><rect x="276.54" y="539.00" width="9.58" height="152.00" fill="#4b84b6" stroke="#111" stroke-width="1.1"/><rect x="286.12" y="617.00" width="9.58" height="74.00" fill="#4b84b6" stroke="#111" stroke-width="1.1"/><rect x="295.70" y="630.00" width="9.58" height="61.00" fill="#4b84b6" stroke="#111" stroke-width="1.1"/><rect x="305.28" y="654.00" width="9.58" height="37.00" fill="#4b84b6" stroke="#111" stroke-width="1.1"/><rect x="314.86" y="667.00" width="9.58" height="24.00" fill="#4b84b6" stroke="#111" stroke-width="1.1"/><rect x="324.44" y="671.00" width="9.58" height="20.00" fill="#4b84b6" stroke="#111" stroke-width="1.1"/><rect x="334.02" y="688.00" width="9.58" height="3.00" fill="#4b84b6" stroke="#111" stroke-width="1.1"/><rect x="343.60" y="684.60" width="9.58" height="6.40" fill="#4b84b6" stroke="#111" stroke-width="1.1"/><rect x="353.18" y="681.00" width="9.58" height="10.00" fill="#4b84b6" stroke="#111" stroke-width="1.1"/><rect x="381.92" y="681.00" width="9.58" height="10.00" fill="#4b84b6" stroke="#111" stroke-width="1.1"/><polyline points="3.85,691.30 4.63,691.30 5.41,691.30 6.20,691.30 6.98,691.30 7.76,691.30 8.54,691.30 9.33,691.30 10.11,691.30 10.89,691.30 11.67,691.30 12.46,691.30 13.24,691.30 14.02,691.30 14.80,691.30 15.59,691.30 16.37,691.30 17.15,691.30 17.93,691.30 18.72,691.30 19.50,691.30 20.28,691.30 21.06,691.30 21.85,691.30 22.63,691.30 23.41,691.30 24.19,691.30 24.98,691.30 25.76,691.30 26.54,691.30 27.32,691.30 28.11,691.30 28.89,691.30 29.67,691.30 30.45,691.30 31.24,691.30 32.02,691.30 32.80,691.30 33.58,691.30 34.37,691.30 35.15,691.30 35.93,691.30 36.71,691.30 37.50,691.30 38.28,691.30 39.06,691.30 39.84,691.30 40.63,691.30 41.41,691.30 42.19,691.30 42.97,691.30 43.76,691.30 44.54,691.30 45.32,691.30 46.10,691.30 46.89,691.30 47.67,691.30 48.45,691.30 49.23,691.30 50.02,691.30 50.80,691.30 51.58,691.30 52.36,691.30 53.15,691.30 53.93,691.30 54.71,691.30 55.49,691.30 56.28,691.30 57.06,691.30 57.84,691.30 58.62,691.30 59.41,691.30 60.19,691.30 60.97,691.30 61.75,691.30 62.54,691.30 63.32,691.30 64.10,691.30 64.88,691.30 65.67,691.30 66.45,691.30 67.23,691.30 68.01,691.30 68.80,691.30 69.58,691.30 70.36,691.30 71.14,691.30 71.93,691.30 72.71,691.30 73.49,691.30 74.27,691.30 75.06,691.30 75.84,691.30 76.62,691.30 77.40,691.30 78.19,691.30 78.97,691.30 79.75,691.30 80.53,691.30 81.32,691.30 82.10,691.30 82.88,691.30 83.66,691.30 84.45,691.30 85.23,691.30 86.01,691.30 86.79,691.30 87.58,691.30 88.36,691.30 89.14,691.30 89.92,691.30 90.71,691.30 91.49,691.30 92.27,691.30 93.05,691.30 93.84,691.30 94.62,691.30 95.40,691.30 96.18,691.30 96.97,691.30 97.75,691.30 98.53,691.30 99.31,691.30 100.10,691.30 100.88,691.30 101.66,691.30 102.44,691.30 103.23,691.30 104.01,691.30 104.79,691.30 105.57,691.30 106.36,691.30 107.14,691.30 107.92,691.30 108.70,691.30 109.49,691.30 110.27,691.30 111.05,691.30 111.83,691.30 112.62,691.30 113.40,691.30 114.18,691.30 114.96,691.30 115.75,691.30 116.53,691.30 117.31,691.30 118.09,691.30 118.88,691.30 119.66,691.30 120.44,691.30 121.22,691.30 122.01,691.30 122.79,691.30 123.57,691.30 124.35,691.30 125.14,691.30 125.92,691.30 126.70,691.30 127.48,691.30 128.27,691.30 129.05,691.30 129.83,691.30 130.61,691.30 131.40,691.30 132.18,691.30 132.96,691.30 133.74,691.30 134.53,691.30 135.31,691.30 136.09,691.30 136.87,691.30 137.66,691.30 138.44,691.30 139.22,691.30 140.00,691.30 140.79,691.29 141.57,691.29 142.35,691.28 143.13,691.27 143.92,691.26 144.70,691.24 145.48,691.21 146.26,691.17 147.05,691.12 147.83,691.05 148.61,690.96 149.39,690.84 150.18,690.68 150.96,690.49 151.74,690.24 152.52,689.93 153.31,689.54 154.09,689.08 154.87,688.51 155.65,687.83 156.44,687.02 157.22,686.07 158.00,684.95 158.78,683.64 159.57,682.13 160.35,680.40 161.13,678.43 161.91,676.19 162.70,673.67 163.48,670.84 164.26,667.68 165.04,664.18 165.83,660.32 166.61,656.08 167.39,651.45 168.17,646.40 168.96,640.94 169.74,635.04 170.52,628.71 171.30,621.93 172.09,614.70 172.87,607.03 173.65,598.90 174.43,590.34 175.22,581.33 176.00,571.90 176.78,562.05 177.56,551.80 178.35,541.16 179.13,530.15 179.91,518.80 180.69,507.12 181.48,495.14 182.26,482.89 183.04,470.39 183.82,457.67 184.61,444.77 185.39,431.71 186.17,418.53 186.95,405.25 187.74,391.92 188.52,378.56 189.30,365.20 190.08,351.89 190.87,338.65 191.65,325.51 192.43,312.52 193.21,299.69 194.00,287.05 194.78,274.65 195.56,262.50 196.34,250.63 197.13,239.06 197.91,227.83 198.69,216.94 199.47,206.43 200.26,196.32 201.04,186.61 201.82,177.33 202.60,168.49 203.39,160.11 204.17,152.19 204.95,144.75 205.73,137.79 206.52,131.32 207.30,125.34 208.08,119.86 208.86,114.88 209.65,110.41 210.43,106.43 211.21,102.95 211.99,99.97 212.78,97.48 213.56,95.47 214.34,93.94 215.12,92.89 215.91,92.30 216.69,92.16 217.47,92.46 218.25,93.20 219.04,94.36 219.82,95.94 220.60,97.91 221.38,100.26 222.17,102.99 222.95,106.08 223.73,109.51 224.51,113.27 225.30,117.35 226.08,121.73 226.86,126.40 227.64,131.34 228.43,136.54 229.21,141.99 229.99,147.67 230.77,153.56 231.56,159.66 232.34,165.94 233.12,172.40 233.90,179.02 234.69,185.79 235.47,192.70 236.25,199.73 237.03,206.86 237.82,214.10 238.60,221.43 239.38,228.83 240.16,236.30 240.95,243.82 241.73,251.38 242.51,258.98 243.29,266.61 244.08,274.25 244.86,281.90 245.64,289.55 246.42,297.19 247.21,304.81 247.99,312.41 248.77,319.98 249.55,327.51 250.34,335.00 251.12,342.45 251.90,349.83 252.68,357.16 253.47,364.43 254.25,371.62 255.03,378.75 255.81,385.79 256.60,392.76 257.38,399.65 258.16,406.44 258.94,413.15 259.73,419.77 260.51,426.30 261.29,432.72 262.07,439.05 262.86,445.29 263.64,451.42 264.42,457.45 265.20,463.38 265.99,469.20 266.77,474.92 267.55,480.53 268.33,486.05 269.12,491.45 269.90,496.75 270.68,501.95 271.46,507.04 272.25,512.03 273.03,516.91 273.81,521.69 274.59,526.37 275.38,530.94 276.16,535.41 276.94,539.79 277.72,544.06 278.51,548.24 279.29,552.32 280.07,556.30 280.86,560.19 281.64,563.99 282.42,567.69 283.20,571.30 283.99,574.82 284.77,578.26 285.55,581.61 286.33,584.87 287.12,588.05 287.90,591.14 288.68,594.16 289.46,597.10 290.25,599.95 291.03,602.74 291.81,605.44 292.59,608.08 293.38,610.64 294.16,613.13 294.94,615.55 295.72,617.91 296.51,620.20 297.29,622.42 298.07,624.58 298.85,626.68 299.64,628.72 300.42,630.71 301.20,632.63 301.98,634.50 302.77,636.31 303.55,638.07 304.33,639.78 305.11,641.44 305.90,643.04 306.68,644.60 307.46,646.12 308.24,647.58 309.03,649.01 309.81,650.39 310.59,651.72 311.37,653.02 312.16,654.28 312.94,655.50 313.72,656.68 314.50,657.82 315.29,658.93 316.07,660.00 316.85,661.04 317.63,662.05 318.42,663.02 319.20,663.97 319.98,664.88 320.76,665.77 321.55,666.62 322.33,667.45 323.11,668.25 323.89,669.03 324.68,669.78 325.46,670.51 326.24,671.21 327.02,671.89 327.81,672.55 328.59,673.19 329.37,673.81 330.15,674.40 330.94,674.98 331.72,675.54 332.50,676.08 333.28,676.60 334.07,677.10 334.85,677.59 335.63,678.06 336.41,678.51 337.20,678.95 337.98,679.38 338.76,679.79 339.54,680.19 340.33,680.57 341.11,680.94 341.89,681.30 342.67,681.65 343.46,681.98 344.24,682.31 345.02,682.62 345.80,682.92 346.59,683.21 347.37,683.49 348.15,683.77 348.93,684.03 349.72,684.28 350.50,684.53 351.28,684.76 352.06,684.99 352.85,685.21 353.63,685.43 354.41,685.63 355.19,685.83 355.98,686.02 356.76,686.21 357.54,686.39 358.32,686.56 359.11,686.72 359.89,686.89 360.67,687.04 361.45,687.19 362.24,687.34 363.02,687.47 363.80,687.61 364.58,687.74 365.37,687.87 366.15,687.99 366.93,688.10 367.71,688.22 368.50,688.32 369.28,688.43 370.06,688.53 370.84,688.63 371.63,688.72 372.41,688.81 373.19,688.90 373.97,688.99 374.76,689.07 375.54,689.15 376.32,689.22 377.10,689.30 377.89,689.37 378.67,689.44 379.45,689.50 380.23,689.57 381.02,689.63 381.80,689.69 382.58,689.74 383.36,689.80 384.15,689.85 384.93,689.90 385.71,689.95 386.49,690.00 387.28,690.05 388.06,690.09 388.84,690.13 389.62,690.18 390.41,690.22 391.19,690.25 391.97,690.29 392.75,690.33 393.54,690.36 394.32,690.39 395.10,690.43 395.88,690.46 396.67,690.49 397.45,690.52 398.23,690.54 399.01,690.57 399.80,690.60 400.58,690.62 401.36,690.65 402.14,690.67 402.93,690.69 403.71,690.71 404.49,690.73 405.27,690.75 406.06,690.77 406.84,690.79 407.62,690.81 408.40,690.83 409.19,690.84 409.97,690.86 410.75,690.88 411.53,690.89 412.32,690.91 413.10,690.92 413.88,690.93 414.66,690.95 415.45,690.96 416.23,690.97 417.01,690.98 417.79,690.99 418.58,691.00 419.36,691.01 420.14,691.02 420.92,691.03 421.71,691.04 422.49,691.05 423.27,691.06 424.05,691.07 424.84,691.08 425.62,691.09 426.40,691.09 427.18,691.10 427.97,691.11 428.75,691.11 429.53,691.12 430.31,691.13 431.10,691.13 431.88,691.14 432.66,691.15 433.44,691.15 434.23,691.16 435.01,691.16 435.79,691.17 436.57,691.17 437.36,691.17 438.14,691.18 438.92,691.18 439.70,691.19 440.49,691.19 441.27,691.20 442.05,691.20 442.83,691.20 443.62,691.21 444.40,691.21 445.18,691.21 445.96,691.22 446.75,691.22 447.53,691.22 448.31,691.22 449.09,691.23 449.88,691.23 450.66,691.23 451.44,691.23 452.22,691.24 453.01,691.24 453.79,691.24 454.57,691.24 455.35,691.24 456.14,691.25 456.92,691.25 457.70,691.25 458.48,691.25 459.27,691.25 460.05,691.26 460.83,691.26 461.61,691.26 462.40,691.26 463.18,691.26 463.96,691.26 464.74,691.26 465.53,691.27 466.31,691.27 467.09,691.27 467.87,691.27 468.66,691.27 469.44,691.27 470.22,691.27 471.00,691.27 471.79,691.27 472.57,691.27 473.35,691.28 474.13,691.28 474.92,691.28 475.70,691.28 476.48,691.28 477.26,691.28 478.05,691.28 478.83,691.28 479.61,691.28 480.39,691.28 481.18,691.28 481.96,691.28 482.74,691.28 483.52,691.28 484.31,691.29 485.09,691.29 485.87,691.29 486.65,691.29 487.44,691.29 488.22,691.29 489.00,691.29 489.78,691.29 490.57,691.29 491.35,691.29 492.13,691.29 492.91,691.29 493.70,691.29 494.48,691.29 495.26,691.29 496.04,691.29 496.83,691.29 497.61,691.29 498.39,691.29 499.17,691.29 499.96,691.29 500.74,691.29 501.52,691.29 502.30,691.29 503.09,691.29 503.87,691.29 504.65,691.29 505.43,691.29 506.22,691.29 507.00,691.29 507.78,691.29 508.56,691.29 509.35,691.30 510.13,691.30 510.91,691.30 511.69,691.30 512.48,691.30 513.26,691.30 514.04,691.30 514.82,691.30 515.61,691.30 516.39,691.30 517.17,691.30 517.95,691.30 518.74,691.30 519.52,691.30 520.30,691.30 521.08,691.30 521.87,691.30 522.65,691.30 523.43,691.30 524.21,691.30 525.00,691.30 525.78,691.30 526.56,691.30 527.34,691.30 528.13,691.30 528.91,691.30 529.69,691.30 530.47,691.30 531.26,691.30 532.04,691.30 532.82,691.30 533.60,691.30 534.39,691.30 535.17,691.30 535.95,691.30 536.73,691.30 537.52,691.30 538.30,691.30 539.08,691.30 539.86,691.30 540.65,691.30 541.43,691.30 542.21,691.30 542.99,691.30 543.78,691.30 544.56,691.30 545.34,691.30 546.12,691.30 546.91,691.30 547.69,691.30 548.47,691.30 549.25,691.30 550.04,691.30 550.82,691.30 551.60,691.30 552.38,691.30 553.17,691.30 553.95,691.30 554.73,691.30 555.51,691.30 556.30,691.30 557.08,691.30 557.86,691.30 558.64,691.30 559.43,691.30 560.21,691.30 560.99,691.30 561.77,691.30 562.56,691.30 563.34,691.30 564.12,691.30 564.90,691.30 565.69,691.30 566.47,691.30 567.25,691.30 568.03,691.30 568.82,691.30 569.60,691.30 570.38,691.30 571.16,691.30 571.95,691.30 572.73,691.30 573.51,691.30 574.29,691.30 575.08,691.30 575.86,691.30 576.64,691.30 577.42,691.30 578.21,691.30 578.99,691.30 579.77,691.30 580.55,691.30 581.34,691.30 582.12,691.30 582.90,691.30 583.68,691.30 584.47,691.30 585.25,691.30 586.03,691.30 586.81,691.30 587.60,691.30 588.38,691.30 589.16,691.30 589.94,691.30 590.73,691.30 591.51,691.30 592.29,691.30 593.07,691.30 593.86,691.30 594.64,691.30 595.42,691.30 596.20,691.30 596.99,691.30 597.77,691.30 598.55,691.30 599.33,691.30 600.12,691.30 600.90,691.30 601.68,691.30 602.46,691.30 603.25,691.30 604.03,691.30 604.81,691.30 605.59,691.30 606.38,691.30 607.16,691.30 607.94,691.30 608.72,691.30 609.51,691.30 610.29,691.30 611.07,691.30 611.85,691.30 612.64,691.30 613.42,691.30" fill="none" stroke="#e87878" stroke-width="1.6"/><polyline points="3.85,691.30 4.63,691.30 5.41,691.30 6.20,691.30 6.98,691.30 7.76,691.30 8.54,691.30 9.33,691.30 10.11,691.30 10.89,691.30 11.67,691.30 12.46,691.30 13.24,691.30 14.02,691.30 14.80,691.30 15.59,691.30 16.37,691.30 17.15,691.30 17.93,691.30 18.72,691.30 19.50,691.30 20.28,691.30 21.06,691.30 21.85,691.30 22.63,691.30 23.41,691.30 24.19,691.30 24.98,691.30 25.76,691.30 26.54,691.30 27.32,691.30 28.11,691.30 28.89,691.30 29.67,691.30 30.45,691.30 31.24,691.30 32.02,691.30 32.80,691.30 33.58,691.30 34.37,691.30 35.15,691.30 35.93,691.30 36.71,691.30 37.50,691.30 38.28,691.30 39.06,691.30 39.84,691.30 40.63,691.30 41.41,691.30 42.19,691.30 42.97,691.30 43.76,691.30 44.54,691.30 45.32,691.30 46.10,691.30 46.89,691.30 47.67,691.30 48.45,691.30 49.23,691.30 50.02,691.30 50.80,691.30 51.58,691.30 52.36,691.30 53.15,691.30 53.93,691.30 54.71,691.30 55.49,691.30 56.28,691.30 57.06,691.30 57.84,691.30 58.62,691.30 59.41,691.30 60.19,691.30 60.97,691.30 61.75,691.30 62.54,691.30 63.32,691.30 64.10,691.30 64.88,691.30 65.67,691.30 66.45,691.30 67.23,691.30 68.01,691.30 68.80,691.30 69.58,691.30 70.36,691.30 71.14,691.30 71.93,691.30 72.71,691.30 73.49,691.30 74.27,691.30 75.06,691.30 75.84,691.30 76.62,691.30 77.40,691.30 78.19,691.30 78.97,691.30 79.75,691.30 80.53,691.30 81.32,691.30 82.10,691.30 82.88,691.30 83.66,691.30 84.45,691.30 85.23,691.30 86.01,691.30 86.79,691.30 87.58,691.30 88.36,691.30 89.14,691.30 89.92,691.30 90.71,691.30 91.49,691.30 92.27,691.30 93.05,691.30 93.84,691.30 94.62,691.30 95.40,691.30 96.18,691.30 96.97,691.30 97.75,691.30 98.53,691.30 99.31,691.30 100.10,691.30 100.88,691.30 101.66,691.30 102.44,691.30 103.23,691.30 104.01,691.30 104.79,691.30 105.57,691.30 106.36,691.30 107.14,691.30 107.92,691.30 108.70,691.30 109.49,691.30 110.27,691.30 111.05,691.30 111.83,691.30 112.62,691.30 113.40,691.30 114.18,691.30 114.96,691.30 115.75,691.30 116.53,691.30 117.31,691.30 118.09,691.30 118.88,691.30 119.66,691.30 120.44,691.30 121.22,691.30 122.01,691.30 122.79,691.30 123.57,691.30 124.35,691.30 125.14,691.30 125.92,691.30 126.70,691.30 127.48,691.30 128.27,691.30 129.05,691.30 129.83,691.30 130.61,691.30 131.40,691.30 132.18,691.30 132.96,691.30 133.74,691.30 134.53,691.30 135.31,691.30 136.09,691.30 136.87,691.30 137.66,691.30 138.44,691.30 139.22,691.30 140.00,691.30 140.79,691.29 141.57,691.29 142.35,691.29 143.13,691.28 143.92,691.27 144.70,691.25 145.48,691.23 146.26,691.20 147.05,691.16 147.83,691.10 148.61,691.02 149.39,690.92 150.18,690.79 150.96,690.62 151.74,690.41 152.52,690.14 153.31,689.81 154.09,689.40 154.87,688.90 155.65,688.30 156.44,687.57 157.22,686.71 158.00,685.70 158.78,684.52 159.57,683.14 160.35,681.55 161.13,679.73 161.91,677.66 162.70,675.31 163.48,672.66 164.26,669.70 165.04,666.40 165.83,662.75 166.61,658.72 167.39,654.31 168.17,649.48 168.96,644.24 169.74,638.56 170.52,632.44 171.30,625.87 172.09,618.84 172.87,611.36 173.65,603.42 174.43,595.02 175.22,586.17 176.00,576.87 176.78,567.14 177.56,556.99 178.35,546.43 179.13,535.48 179.91,524.15 180.69,512.48 181.48,500.49 182.26,488.20 183.04,475.63 183.82,462.82 184.61,449.80 185.39,436.60 186.17,423.25 186.95,409.78 187.74,396.24 188.52,382.64 189.30,369.03 190.08,355.44 190.87,341.90 191.65,328.46 192.43,315.13 193.21,301.96 194.00,288.97 194.78,276.20 195.56,263.67 196.34,251.42 197.13,239.46 197.91,227.84 198.69,216.56 199.47,205.66 200.26,195.14 201.04,185.05 201.82,175.38 202.60,166.16 203.39,157.40 204.17,149.12 204.95,141.32 205.73,134.01 206.52,127.20 207.30,120.90 208.08,115.12 208.86,109.85 209.65,105.09 210.43,100.85 211.21,97.13 211.99,93.92 212.78,91.21 213.56,89.01 214.34,87.31 215.12,86.09 215.91,85.36 216.69,85.10 217.47,85.30 218.25,85.95 219.04,87.04 219.82,88.56 220.60,90.49 221.38,92.82 222.17,95.55 222.95,98.64 223.73,102.10 224.51,105.90 225.30,110.03 226.08,114.48 226.86,119.23 227.64,124.26 228.43,129.56 229.21,135.12 229.99,140.92 230.77,146.95 231.56,153.19 232.34,159.62 233.12,166.23 233.90,173.02 234.69,179.96 235.47,187.04 236.25,194.24 237.03,201.57 237.82,208.99 238.60,216.51 239.38,224.10 240.16,231.76 240.95,239.48 241.73,247.25 242.51,255.04 243.29,262.87 244.08,270.71 244.86,278.56 245.64,286.40 246.42,294.24 247.21,302.05 247.99,309.85 248.77,317.60 249.55,325.32 250.34,333.00 251.12,340.62 251.90,348.19 252.68,355.69 253.47,363.12 254.25,370.48 255.03,377.77 255.81,384.98 256.60,392.10 257.38,399.13 258.16,406.07 258.94,412.92 259.73,419.68 260.51,426.33 261.29,432.89 262.07,439.34 262.86,445.69 263.64,451.94 264.42,458.07 265.20,464.11 265.99,470.03 266.77,475.84 267.55,481.55 268.33,487.14 269.12,492.63 269.90,498.01 270.68,503.28 271.46,508.44 272.25,513.49 273.03,518.43 273.81,523.27 274.59,528.00 275.38,532.63 276.16,537.15 276.94,541.56 277.72,545.88 278.51,550.09 279.29,554.20 280.07,558.21 280.86,562.13 281.64,565.95 282.42,569.67 283.20,573.30 283.99,576.84 284.77,580.29 285.55,583.64 286.33,586.92 287.12,590.10 287.90,593.20 288.68,596.22 289.46,599.15 290.25,602.01 291.03,604.79 291.81,607.49 292.59,610.12 293.38,612.67 294.16,615.15 294.94,617.56 295.72,619.91 296.51,622.18 297.29,624.39 298.07,626.54 298.85,628.62 299.64,630.64 300.42,632.60 301.20,634.51 301.98,636.36 302.77,638.15 303.55,639.89 304.33,641.57 305.11,643.21 305.90,644.79 306.68,646.33 307.46,647.82 308.24,649.26 309.03,650.66 309.81,652.02 310.59,653.33 311.37,654.60 312.16,655.83 312.94,657.03 313.72,658.18 314.50,659.30 315.29,660.38 316.07,661.43 316.85,662.44 317.63,663.43 318.42,664.38 319.20,665.29 319.98,666.18 320.76,667.04 321.55,667.88 322.33,668.68 323.11,669.46 323.89,670.21 324.68,670.94 325.46,671.64 326.24,672.32 327.02,672.98 327.81,673.62 328.59,674.23 329.37,674.83 330.15,675.40 330.94,675.96 331.72,676.49 332.50,677.01 333.28,677.51 334.07,677.99 334.85,678.46 335.63,678.91 336.41,679.35 337.20,679.77 337.98,680.17 338.76,680.57 339.54,680.95 340.33,681.31 341.11,681.66 341.89,682.01 342.67,682.33 343.46,682.65 344.24,682.96 345.02,683.26 345.80,683.54 346.59,683.82 347.37,684.08 348.15,684.34 348.93,684.59 349.72,684.83 350.50,685.06 351.28,685.28 352.06,685.50 352.85,685.71 353.63,685.91 354.41,686.10 355.19,686.29 355.98,686.47 356.76,686.64 357.54,686.81 358.32,686.97 359.11,687.12 359.89,687.27 360.67,687.42 361.45,687.56 362.24,687.69 363.02,687.82 363.80,687.95 364.58,688.07 365.37,688.19 366.15,688.30 366.93,688.41 367.71,688.51 368.50,688.61 369.28,688.71 370.06,688.80 370.84,688.89 371.63,688.98 372.41,689.06 373.19,689.14 373.97,689.22 374.76,689.30 375.54,689.37 376.32,689.44 377.10,689.51 377.89,689.57 378.67,689.63 379.45,689.70 380.23,689.75 381.02,689.81 381.80,689.86 382.58,689.92 383.36,689.97 384.15,690.01 384.93,690.06 385.71,690.11 386.49,690.15 387.28,690.19 388.06,690.23 388.84,690.27 389.62,690.31 390.41,690.34 391.19,690.38 391.97,690.41 392.75,690.44 393.54,690.47 394.32,690.50 395.10,690.53 395.88,690.56 396.67,690.59 397.45,690.61 398.23,690.64 399.01,690.66 399.80,690.69 400.58,690.71 401.36,690.73 402.14,690.75 402.93,690.77 403.71,690.79 404.49,690.81 405.27,690.83 406.06,690.84 406.84,690.86 407.62,690.88 408.40,690.89 409.19,690.91 409.97,690.92 410.75,690.93 411.53,690.95 412.32,690.96 413.10,690.97 413.88,690.98 414.66,691.00 415.45,691.01 416.23,691.02 417.01,691.03 417.79,691.04 418.58,691.05 419.36,691.06 420.14,691.06 420.92,691.07 421.71,691.08 422.49,691.09 423.27,691.10 424.05,691.10 424.84,691.11 425.62,691.12 426.40,691.12 427.18,691.13 427.97,691.14 428.75,691.14 429.53,691.15 430.31,691.15 431.10,691.16 431.88,691.16 432.66,691.17 433.44,691.17 434.23,691.18 435.01,691.18 435.79,691.19 436.57,691.19 437.36,691.20 438.14,691.20 438.92,691.20 439.70,691.21 440.49,691.21 441.27,691.21 442.05,691.22 442.83,691.22 443.62,691.22 444.40,691.22 445.18,691.23 445.96,691.23 446.75,691.23 447.53,691.23 448.31,691.24 449.09,691.24 449.88,691.24 450.66,691.24 451.44,691.25 452.22,691.25 453.01,691.25 453.79,691.25 454.57,691.25 455.35,691.25 456.14,691.26 456.92,691.26 457.70,691.26 458.48,691.26 459.27,691.26 460.05,691.26 460.83,691.26 461.61,691.27 462.40,691.27 463.18,691.27 463.96,691.27 464.74,691.27 465.53,691.27 466.31,691.27 467.09,691.27 467.87,691.27 468.66,691.28 469.44,691.28 470.22,691.28 471.00,691.28 471.79,691.28 472.57,691.28 473.35,691.28 474.13,691.28 474.92,691.28 475.70,691.28 476.48,691.28 477.26,691.28 478.05,691.28 478.83,691.28 479.61,691.29 480.39,691.29 481.18,691.29 481.96,691.29 482.74,691.29 483.52,691.29 484.31,691.29 485.09,691.29 485.87,691.29 486.65,691.29 487.44,691.29 488.22,691.29 489.00,691.29 489.78,691.29 490.57,691.29 491.35,691.29 492.13,691.29 492.91,691.29 493.70,691.29 494.48,691.29 495.26,691.29 496.04,691.29 496.83,691.29 497.61,691.29 498.39,691.29 499.17,691.29 499.96,691.29 500.74,691.29 501.52,691.29 502.30,691.29 503.09,691.29 503.87,691.30 504.65,691.30 505.43,691.30 506.22,691.30 507.00,691.30 507.78,691.30 508.56,691.30 509.35,691.30 510.13,691.30 510.91,691.30 511.69,691.30 512.48,691.30 513.26,691.30 514.04,691.30 514.82,691.30 515.61,691.30 516.39,691.30 517.17,691.30 517.95,691.30 518.74,691.30 519.52,691.30 520.30,691.30 521.08,691.30 521.87,691.30 522.65,691.30 523.43,691.30 524.21,691.30 525.00,691.30 525.78,691.30 526.56,691.30 527.34,691.30 528.13,691.30 528.91,691.30 529.69,691.30 530.47,691.30 531.26,691.30 532.04,691.30 532.82,691.30 533.60,691.30 534.39,691.30 535.17,691.30 535.95,691.30 536.73,691.30 537.52,691.30 538.30,691.30 539.08,691.30 539.86,691.30 540.65,691.30 541.43,691.30 542.21,691.30 542.99,691.30 543.78,691.30 544.56,691.30 545.34,691.30 546.12,691.30 546.91,691.30 547.69,691.30 548.47,691.30 549.25,691.30 550.04,691.30 550.82,691.30 551.60,691.30 552.38,691.30 553.17,691.30 553.95,691.30 554.73,691.30 555.51,691.30 556.30,691.30 557.08,691.30 557.86,691.30 558.64,691.30 559.43,691.30 560.21,691.30 560.99,691.30 561.77,691.30 562.56,691.30 563.34,691.30 564.12,691.30 564.90,691.30 565.69,691.30 566.47,691.30 567.25,691.30 568.03,691.30 568.82,691.30 569.60,691.30 570.38,691.30 571.16,691.30 571.95,691.30 572.73,691.30 573.51,691.30 574.29,691.30 575.08,691.30 575.86,691.30 576.64,691.30 577.42,691.30 578.21,691.30 578.99,691.30 579.77,691.30 580.55,691.30 581.34,691.30 582.12,691.30 582.90,691.30 583.68,691.30 584.47,691.30 585.25,691.30 586.03,691.30 586.81,691.30 587.60,691.30 588.38,691.30 589.16,691.30 589.94,691.30 590.73,691.30 591.51,691.30 592.29,691.30 593.07,691.30 593.86,691.30 594.64,691.30 595.42,691.30 596.20,691.30 596.99,691.30 597.77,691.30 598.55,691.30 599.33,691.30 600.12,691.30 600.90,691.30 601.68,691.30 602.46,691.30 603.25,691.30 604.03,691.30 604.81,691.30 605.59,691.30 606.38,691.30 607.16,691.30 607.94,691.30 608.72,691.30 609.51,691.30 610.29,691.30 611.07,691.30 611.85,691.30 612.64,691.30 613.42,691.30" fill="none" stroke="#9cc4d0" stroke-width="1.6"/><polyline points="3.85,691.30 4.63,691.30 5.41,691.30 6.20,691.30 6.98,691.30 7.76,691.30 8.54,691.30 9.33,691.30 10.11,691.30 10.89,691.30 11.67,691.30 12.46,691.30 13.24,691.30 14.02,691.30 14.80,691.30 15.59,691.30 16.37,691.30 17.15,691.30 17.93,691.30 18.72,691.30 19.50,691.30 20.28,691.30 21.06,691.30 21.85,691.30 22.63,691.30 23.41,691.30 24.19,691.30 24.98,691.30 25.76,691.30 26.54,691.30 27.32,691.30 28.11,691.30 28.89,691.30 29.67,691.30 30.45,691.30 31.24,691.30 32.02,691.30 32.80,691.30 33.58,691.30 34.37,691.30 35.15,691.30 35.93,691.30 36.71,691.30 37.50,691.30 38.28,691.30 39.06,691.30 39.84,691.30 40.63,691.30 41.41,691.30 42.19,691.30 42.97,691.30 43.76,691.30 44.54,691.30 45.32,691.30 46.10,691.30 46.89,691.30 47.67,691.30 48.45,691.30 49.23,691.30 50.02,691.30 50.80,691.30 51.58,691.30 52.36,691.30 53.15,691.30 53.93,691.30 54.71,691.30 55.49,691.30 56.28,691.30 57.06,691.30 57.84,691.30 58.62,691.30 59.41,691.30 60.19,691.30 60.97,691.30 61.75,691.30 62.54,691.30 63.32,691.30 64.10,691.30 64.88,691.30 65.67,691.30 66.45,691.30 67.23,691.30 68.01,691.30 68.80,691.30 69.58,691.30 70.36,691.30 71.14,691.30 71.93,691.30 72.71,691.30 73.49,691.30 74.27,691.30 75.06,691.30 75.84,691.30 76.62,691.30 77.40,691.30 78.19,691.30 78.97,691.30 79.75,691.30 80.53,691.30 81.32,691.30 82.10,691.30 82.88,691.30 83.66,691.30 84.45,691.30 85.23,691.30 86.01,691.30 86.79,691.30 87.58,691.30 88.36,691.30 89.14,691.30 89.92,691.30 90.71,691.30 91.49,691.30 92.27,691.30 93.05,691.30 93.84,691.30 94.62,691.30 95.40,691.30 96.18,691.30 96.97,691.30 97.75,691.30 98.53,691.30 99.31,691.30 100.10,691.30 100.88,691.30 101.66,691.30 102.44,691.30 103.23,691.30 104.01,691.30 104.79,691.30 105.57,691.30 106.36,691.30 107.14,691.30 107.92,691.30 108.70,691.30 109.49,691.30 110.27,691.30 111.05,691.30 111.83,691.30 112.62,691.30 113.40,691.30 114.18,691.30 114.96,691.30 115.75,691.30 116.53,691.30 117.31,691.30 118.09,691.30 118.88,691.30 119.66,691.30 120.44,691.30 121.22,691.30 122.01,691.30 122.79,691.30 123.57,691.30 124.35,691.30 125.14,691.30 125.92,691.30 126.70,691.30 127.48,691.30 128.27,691.30 129.05,691.30 129.83,691.30 130.61,691.30 131.40,691.30 132.18,691.30 132.96,691.30 133.74,691.30 134.53,691.30 135.31,691.30 136.09,691.30 136.87,691.30 137.66,691.30 138.44,691.30 139.22,691.30 140.00,691.30 140.79,691.30 141.57,691.30 142.35,691.29 143.13,691.29 143.92,691.28 144.70,691.27 145.48,691.26 146.26,691.24 147.05,691.21 147.83,691.17 148.61,691.12 149.39,691.04 150.18,690.95 150.96,690.83 151.74,690.67 152.52,690.47 153.31,690.22 154.09,689.90 154.87,689.51 155.65,689.03 156.44,688.46 157.22,687.76 158.00,686.94 158.78,685.96 159.57,684.81 160.35,683.47 161.13,681.92 161.91,680.14 162.70,678.11 163.48,675.80 164.26,673.20 165.04,670.27 165.83,667.00 166.61,663.37 167.39,659.37 168.17,654.96 168.96,650.13 169.74,644.87 170.52,639.17 171.30,633.01 172.09,626.39 172.87,619.29 173.65,611.72 174.43,603.66 175.22,595.13 176.00,586.13 176.78,576.66 177.56,566.73 178.35,556.35 179.13,545.54 179.91,534.32 180.69,522.71 181.48,510.72 182.26,498.39 183.04,485.74 183.82,472.79 184.61,459.59 185.39,446.15 186.17,432.51 186.95,418.71 187.74,404.79 188.52,390.77 189.30,376.69 190.08,362.59 190.87,348.51 191.65,334.48 192.43,320.54 193.21,306.72 194.00,293.06 194.78,279.59 195.56,266.35 196.34,253.36 197.13,240.66 197.91,228.27 198.69,216.23 199.47,204.56 200.26,193.28 201.04,182.42 201.82,171.99 202.60,162.02 203.39,152.53 204.17,143.52 204.95,135.01 205.73,127.02 206.52,119.55 207.30,112.62 208.08,106.22 208.86,100.36 209.65,95.05 210.43,90.29 211.21,86.08 211.99,82.40 212.78,79.28 213.56,76.68 214.34,74.62 215.12,73.09 215.91,72.07 216.69,71.56 217.47,71.54 218.25,72.01 219.04,72.96 219.82,74.36 220.60,76.22 221.38,78.50 222.17,81.21 222.95,84.33 223.73,87.83 224.51,91.70 225.30,95.94 226.08,100.51 226.86,105.41 227.64,110.63 228.43,116.13 229.21,121.91 229.99,127.95 230.77,134.24 231.56,140.75 232.34,147.48 233.12,154.40 233.90,161.51 234.69,168.78 235.47,176.21 236.25,183.77 237.03,191.45 237.82,199.25 238.60,207.14 239.38,215.12 240.16,223.16 240.95,231.27 241.73,239.42 242.51,247.61 243.29,255.83 244.08,264.06 244.86,272.29 245.64,280.53 246.42,288.74 247.21,296.94 247.99,305.11 248.77,313.24 249.55,321.32 250.34,329.35 251.12,337.33 251.90,345.24 252.68,353.08 253.47,360.84 254.25,368.53 255.03,376.13 255.81,383.64 256.60,391.06 257.38,398.38 258.16,405.60 258.94,412.72 259.73,419.74 260.51,426.65 261.29,433.44 262.07,440.13 262.86,446.70 263.64,453.16 264.42,459.51 265.20,465.73 265.99,471.84 266.77,477.83 267.55,483.71 268.33,489.47 269.12,495.10 269.90,500.63 270.68,506.03 271.46,511.32 272.25,516.49 273.03,521.54 273.81,526.48 274.59,531.31 275.38,536.02 276.16,540.62 276.94,545.11 277.72,549.49 278.51,553.77 279.29,557.94 280.07,562.00 280.86,565.96 281.64,569.81 282.42,573.57 283.20,577.23 283.99,580.79 284.77,584.25 285.55,587.63 286.33,590.90 287.12,594.09 287.90,597.20 288.68,600.21 289.46,603.14 290.25,605.99 291.03,608.75 291.81,611.44 292.59,614.04 293.38,616.57 294.16,619.03 294.94,621.41 295.72,623.73 296.51,625.97 297.29,628.15 298.07,630.26 298.85,632.30 299.64,634.29 300.42,636.21 301.20,638.07 301.98,639.88 302.77,641.63 303.55,643.32 304.33,644.96 305.11,646.55 305.90,648.09 306.68,649.57 307.46,651.02 308.24,652.41 309.03,653.76 309.81,655.06 310.59,656.33 311.37,657.55 312.16,658.73 312.94,659.87 313.72,660.97 314.50,662.04 315.29,663.07 316.07,664.07 316.85,665.04 317.63,665.97 318.42,666.87 319.20,667.74 319.98,668.58 320.76,669.39 321.55,670.17 322.33,670.93 323.11,671.66 323.89,672.37 324.68,673.05 325.46,673.71 326.24,674.34 327.02,674.96 327.81,675.55 328.59,676.12 329.37,676.67 330.15,677.20 330.94,677.72 331.72,678.21 332.50,678.69 333.28,679.15 334.07,679.59 334.85,680.02 335.63,680.44 336.41,680.83 337.20,681.22 337.98,681.59 338.76,681.95 339.54,682.29 340.33,682.62 341.11,682.94 341.89,683.25 342.67,683.55 343.46,683.84 344.24,684.11 345.02,684.38 345.80,684.64 346.59,684.88 347.37,685.12 348.15,685.35 348.93,685.57 349.72,685.79 350.50,685.99 351.28,686.19 352.06,686.38 352.85,686.56 353.63,686.74 354.41,686.91 355.19,687.08 355.98,687.23 356.76,687.39 357.54,687.53 358.32,687.67 359.11,687.81 359.89,687.94 360.67,688.07 361.45,688.19 362.24,688.31 363.02,688.42 363.80,688.53 364.58,688.63 365.37,688.73 366.15,688.83 366.93,688.92 367.71,689.01 368.50,689.10 369.28,689.18 370.06,689.26 370.84,689.34 371.63,689.41 372.41,689.48 373.19,689.55 373.97,689.62 374.76,689.68 375.54,689.74 376.32,689.80 377.10,689.86 377.89,689.91 378.67,689.97 379.45,690.02 380.23,690.06 381.02,690.11 381.80,690.16 382.58,690.20 383.36,690.24 384.15,690.28 384.93,690.32 385.71,690.36 386.49,690.39 387.28,690.43 388.06,690.46 388.84,690.49 389.62,690.52 390.41,690.55 391.19,690.58 391.97,690.61 392.75,690.63 393.54,690.66 394.32,690.68 395.10,690.71 395.88,690.73 396.67,690.75 397.45,690.77 398.23,690.79 399.01,690.81 399.80,690.83 400.58,690.85 401.36,690.86 402.14,690.88 402.93,690.90 403.71,690.91 404.49,690.93 405.27,690.94 406.06,690.95 406.84,690.97 407.62,690.98 408.40,690.99 409.19,691.00 409.97,691.02 410.75,691.03 411.53,691.04 412.32,691.05 413.10,691.06 413.88,691.07 414.66,691.07 415.45,691.08 416.23,691.09 417.01,691.10 417.79,691.11 418.58,691.11 419.36,691.12 420.14,691.13 420.92,691.13 421.71,691.14 422.49,691.15 423.27,691.15 424.05,691.16 424.84,691.16 425.62,691.17 426.40,691.17 427.18,691.18 427.97,691.18 428.75,691.19 429.53,691.19 430.31,691.20 431.10,691.20 431.88,691.20 432.66,691.21 433.44,691.21 434.23,691.21 435.01,691.22 435.79,691.22 436.57,691.22 437.36,691.23 438.14,691.23 438.92,691.23 439.70,691.23 440.49,691.24 441.27,691.24 442.05,691.24 442.83,691.24 443.62,691.25 444.40,691.25 445.18,691.25 445.96,691.25 446.75,691.25 447.53,691.25 448.31,691.26 449.09,691.26 449.88,691.26 450.66,691.26 451.44,691.26 452.22,691.26 453.01,691.27 453.79,691.27 454.57,691.27 455.35,691.27 456.14,691.27 456.92,691.27 457.70,691.27 458.48,691.27 459.27,691.27 460.05,691.28 460.83,691.28 461.61,691.28 462.40,691.28 463.18,691.28 463.96,691.28 464.74,691.28 465.53,691.28 466.31,691.28 467.09,691.28 467.87,691.28 468.66,691.28 469.44,691.28 470.22,691.29 471.00,691.29 471.79,691.29 472.57,691.29 473.35,691.29 474.13,691.29 474.92,691.29 475.70,691.29 476.48,691.29 477.26,691.29 478.05,691.29 478.83,691.29 479.61,691.29 480.39,691.29 481.18,691.29 481.96,691.29 482.74,691.29 483.52,691.29 484.31,691.29 485.09,691.29 485.87,691.29 486.65,691.29 487.44,691.29 488.22,691.29 489.00,691.29 489.78,691.29 490.57,691.29 491.35,691.29 492.13,691.29 492.91,691.29 493.70,691.30 494.48,691.30 495.26,691.30 496.04,691.30 496.83,691.30 497.61,691.30 498.39,691.30 499.17,691.30 499.96,691.30 500.74,691.30 501.52,691.30 502.30,691.30 503.09,691.30 503.87,691.30 504.65,691.30 505.43,691.30 506.22,691.30 507.00,691.30 507.78,691.30 508.56,691.30 509.35,691.30 510.13,691.30 510.91,691.30 511.69,691.30 512.48,691.30 513.26,691.30 514.04,691.30 514.82,691.30 515.61,691.30 516.39,691.30 517.17,691.30 517.95,691.30 518.74,691.30 519.52,691.30 520.30,691.30 521.08,691.30 521.87,691.30 522.65,691.30 523.43,691.30 524.21,691.30 525.00,691.30 525.78,691.30 526.56,691.30 527.34,691.30 528.13,691.30 528.91,691.30 529.69,691.30 530.47,691.30 531.26,691.30 532.04,691.30 532.82,691.30 533.60,691.30 534.39,691.30 535.17,691.30 535.95,691.30 536.73,691.30 537.52,691.30 538.30,691.30 539.08,691.30 539.86,691.30 540.65,691.30 541.43,691.30 542.21,691.30 542.99,691.30 543.78,691.30 544.56,691.30 545.34,691.30 546.12,691.30 546.91,691.30 547.69,691.30 548.47,691.30 549.25,691.30 550.04,691.30 550.82,691.30 551.60,691.30 552.38,691.30 553.17,691.30 553.95,691.30 554.73,691.30 555.51,691.30 556.30,691.30 557.08,691.30 557.86,691.30 558.64,691.30 559.43,691.30 560.21,691.30 560.99,691.30 561.77,691.30 562.56,691.30 563.34,691.30 564.12,691.30 564.90,691.30 565.69,691.30 566.47,691.30 567.25,691.30 568.03,691.30 568.82,691.30 569.60,691.30 570.38,691.30 571.16,691.30 571.95,691.30 572.73,691.30 573.51,691.30 574.29,691.30 575.08,691.30 575.86,691.30 576.64,691.30 577.42,691.30 578.21,691.30 578.99,691.30 579.77,691.30 580.55,691.30 581.34,691.30 582.12,691.30 582.90,691.30 583.68,691.30 584.47,691.30 585.25,691.30 586.03,691.30 586.81,691.30 587.60,691.30 588.38,691.30 589.16,691.30 589.94,691.30 590.73,691.30 591.51,691.30 592.29,691.30 593.07,691.30 593.86,691.30 594.64,691.30 595.42,691.30 596.20,691.30 596.99,691.30 597.77,691.30 598.55,691.30 599.33,691.30 600.12,691.30 600.90,691.30 601.68,691.30 602.46,691.30 603.25,691.30 604.03,691.30 604.81,691.30 605.59,691.30 606.38,691.30 607.16,691.30 607.94,691.30 608.72,691.30 609.51,691.30 610.29,691.30 611.07,691.30 611.85,691.30 612.64,691.30 613.42,691.30" fill="none" stroke="#f3e58a" stroke-width="1.9"/></svg>
<div style="left:606px;top:495px;width:611px;height:692px;border:1px solid #a8a8a8;box-sizing:border-box;"></div>
<div style="left:1269px;top:382px;width:1px;height:856px;background:#9a9a9a;"></div>
<div style="left:1271px;top:382px;width:306px;height:884px;background:#fff;"></div>
<div style="left:1271px;top:382px;width:306px;height:28px;background:linear-gradient(#ececec,#d9d9d9);"></div>
<div style="left:1271px;top:381px;width:306px;height:1px;background:#c9c9c9;"></div>
<div style="left:1402px;top:382px;width:1px;height:28px;background:#c4c4c4;"></div>
<div style="left:1403px;top:382px;width:1px;height:28px;background:#f4f4f4;"></div>
<div style="left:1489px;top:382px;width:1px;height:28px;background:#c4c4c4;"></div>
<div style="left:1490px;top:382px;width:1px;height:28px;background:#f4f4f4;"></div>
<div style="left:1411.00px;top:386.58px;font-size:16px;line-height:19.20px;color:#222;white-space:pre;transform:scaleX(1.0238);transform-origin:0 0;">Data</div>
<div style="left:1498.00px;top:386.58px;font-size:16px;line-height:19.20px;color:#222;white-space:pre;">GLogistic</div>
<div style="left:1271px;top:410.6px;width:306px;height:26.0px;background:#e9e9e9;"></div>
<div style="left:1277.00px;top:414.88px;font-size:16px;line-height:19.20px;color:#111;white-space:pre;font-weight:bold;transform:scaleX(1.0867);transform-origin:0 0;">Input Data</div>
<div style="left:1271px;top:436.6px;width:25px;height:26.5px;background:#dcdcdc;"></div>
<div style="left:1296px;top:462px;width:281px;height:1px;background:#ededed;"></div>
<div style="left:1402px;top:436.6px;width:1px;height:26.0px;background:#ebebeb;"></div>
<div style="left:1489px;top:436.6px;width:1px;height:26.0px;background:#ebebeb;"></div>
<div style="left:1315.06px;top:440.88px;font-size:16px;line-height:19.20px;color:#111;white-space:pre;">Total points</div>
<div style="left:1408.50px;top:440.88px;font-size:16px;line-height:19.20px;color:#111;white-space:pre;">1395</div>
<div style="left:1495.30px;top:440.88px;font-size:16px;line-height:19.20px;color:#111;white-space:pre;"></div>
<div style="left:1271px;top:462.6px;width:25px;height:26.5px;background:#dcdcdc;"></div>
<div style="left:1296px;top:488px;width:281px;height:1px;background:#ededed;"></div>
<div style="left:1402px;top:462.6px;width:1px;height:26.0px;background:#ebebeb;"></div>
<div style="left:1489px;top:462.6px;width:1px;height:26.0px;background:#ebebeb;"></div>
<div style="left:1311.51px;top:466.88px;font-size:16px;line-height:19.20px;color:#111;white-space:pre;">Used points</div>
<div style="left:1408.50px;top:466.88px;font-size:16px;line-height:19.20px;color:#111;white-space:pre;">1395</div>
<div style="left:1495.30px;top:466.88px;font-size:16px;line-height:19.20px;color:#111;white-space:pre;"></div>
<div style="left:1271px;top:488.6px;width:306px;height:26.0px;background:#e9e9e9;"></div>
<div style="left:1277.00px;top:492.88px;font-size:16px;line-height:19.20px;color:#111;white-space:pre;font-weight:bold;transform:scaleX(1.0125);transform-origin:0 0;">Location</div>
<div style="left:1271px;top:514.6px;width:25px;height:26.5px;background:#dcdcdc;"></div>
<div style="left:1296px;top:540px;width:281px;height:1px;background:#ededed;"></div>
<div style="left:1402px;top:514.6px;width:1px;height:26.0px;background:#ebebeb;"></div>
<div style="left:1489px;top:514.6px;width:1px;height:26.0px;background:#ebebeb;"></div>
<div style="left:1355.98px;top:518.88px;font-size:16px;line-height:19.20px;color:#111;white-space:pre;">Mean</div>
<div style="left:1408.50px;top:518.88px;font-size:16px;line-height:19.20px;color:#111;white-space:pre;">7.3972</div>
<div style="left:1495.30px;top:518.88px;font-size:16px;line-height:19.20px;color:#111;white-space:pre;">7.4015</div>
<div style="left:1271px;top:540.6px;width:306px;height:26.0px;background:#e9e9e9;"></div>
<div style="left:1277.00px;top:544.88px;font-size:16px;line-height:19.20px;color:#111;white-space:pre;font-weight:bold;transform:scaleX(1.0564);transform-origin:0 0;">Spread</div>
<div style="left:1271px;top:566.6px;width:25px;height:26.5px;background:#dcdcdc;"></div>
<div style="left:1296px;top:592px;width:281px;height:1px;background:#ededed;"></div>
<div style="left:1402px;top:566.6px;width:1px;height:26.0px;background:#ebebeb;"></div>
<div style="left:1489px;top:566.6px;width:1px;height:26.0px;background:#ebebeb;"></div>
<div style="left:1342.94px;top:570.88px;font-size:16px;line-height:19.20px;color:#111;white-space:pre;">St. dev.</div>
<div style="left:1408.50px;top:570.88px;font-size:16px;line-height:19.20px;color:#111;white-space:pre;">2.1242</div>
<div style="left:1495.30px;top:570.88px;font-size:16px;line-height:19.20px;color:#111;white-space:pre;">2.1447</div>
<div style="left:1271px;top:592.6px;width:25px;height:26.5px;background:#dcdcdc;"></div>
<div style="left:1296px;top:618px;width:281px;height:1px;background:#ededed;"></div>
<div style="left:1402px;top:592.6px;width:1px;height:26.0px;background:#ebebeb;"></div>
<div style="left:1489px;top:592.6px;width:1px;height:26.0px;background:#ebebeb;"></div>
<div style="left:1334.04px;top:596.88px;font-size:16px;line-height:19.20px;color:#111;white-space:pre;">Variance</div>
<div style="left:1408.50px;top:596.88px;font-size:16px;line-height:19.20px;color:#111;white-space:pre;">4.5124</div>
<div style="left:1495.30px;top:596.88px;font-size:16px;line-height:19.20px;color:#111;white-space:pre;">4.5997</div>
<div style="left:1271px;top:618.6px;width:25px;height:26.5px;background:#dcdcdc;"></div>
<div style="left:1296px;top:644px;width:281px;height:1px;background:#ededed;"></div>
<div style="left:1402px;top:618.6px;width:1px;height:26.0px;background:#ebebeb;"></div>
<div style="left:1489px;top:618.6px;width:1px;height:26.0px;background:#ebebeb;"></div>
<div style="left:1360.43px;top:622.88px;font-size:16px;line-height:19.20px;color:#111;white-space:pre;">CofV</div>
<div style="left:1408.50px;top:622.88px;font-size:16px;line-height:19.20px;color:#111;white-space:pre;">0.2872</div>
<div style="left:1495.30px;top:622.88px;font-size:16px;line-height:19.20px;color:#111;white-space:pre;">0.2898</div>
<div style="left:1271px;top:644.6px;width:306px;height:26.0px;background:#e9e9e9;"></div>
<div style="left:1277.00px;top:648.88px;font-size:16px;line-height:19.20px;color:#111;white-space:pre;font-weight:bold;transform:scaleX(1.0830);transform-origin:0 0;">Shape</div>
<div style="left:1271px;top:670.6px;width:25px;height:26.5px;background:#dcdcdc;"></div>
<div style="left:1296px;top:696px;width:281px;height:1px;background:#ededed;"></div>
<div style="left:1402px;top:670.6px;width:1px;height:26.0px;background:#ebebeb;"></div>
<div style="left:1489px;top:670.6px;width:1px;height:26.0px;background:#ebebeb;"></div>
<div style="left:1323.08px;top:674.88px;font-size:16px;line-height:19.20px;color:#111;white-space:pre;">Skewness</div>
<div style="left:1408.50px;top:674.88px;font-size:16px;line-height:19.20px;color:#111;white-space:pre;">1.0807</div>
<div style="left:1495.30px;top:674.88px;font-size:16px;line-height:19.20px;color:#111;white-space:pre;">0.2435</div>
<div style="left:1271px;top:696.6px;width:25px;height:26.5px;background:#dcdcdc;"></div>
<div style="left:1296px;top:722px;width:281px;height:1px;background:#ededed;"></div>
<div style="left:1402px;top:696.6px;width:1px;height:26.0px;background:#ebebeb;"></div>
<div style="left:1489px;top:696.6px;width:1px;height:26.0px;background:#ebebeb;"></div>
<div style="left:1338.20px;top:700.88px;font-size:16px;line-height:19.20px;color:#111;white-space:pre;">Kurtosis</div>
<div style="left:1408.50px;top:700.88px;font-size:16px;line-height:19.20px;color:#111;white-space:pre;">5.7034</div>
<div style="left:1495.30px;top:700.88px;font-size:16px;line-height:19.20px;color:#111;white-space:pre;">0.3069</div>
<div style="left:1271px;top:722.6px;width:306px;height:26.0px;background:#e9e9e9;"></div>
<div style="left:1277.00px;top:726.88px;font-size:16px;line-height:19.20px;color:#111;white-space:pre;font-weight:bold;transform:scaleX(1.0353);transform-origin:0 0;">Percentiles</div>
<div style="left:1271px;top:748.6px;width:25px;height:26.5px;background:#dcdcdc;"></div>
<div style="left:1296px;top:774px;width:281px;height:1px;background:#ededed;"></div>
<div style="left:1402px;top:748.6px;width:1px;height:26.0px;background:#ebebeb;"></div>
<div style="left:1489px;top:748.6px;width:1px;height:26.0px;background:#ebebeb;"></div>
<div style="left:1365.38px;top:752.88px;font-size:16px;line-height:19.20px;color:#111;white-space:pre;">1%</div>
<div style="left:1408.50px;top:752.88px;font-size:16px;line-height:19.20px;color:#111;white-space:pre;">3.8383</div>
<div style="left:1495.30px;top:752.88px;font-size:16px;line-height:19.20px;color:#111;white-space:pre;">3.7910</div>
<div style="left:1271px;top:774.6px;width:25px;height:26.5px;background:#dcdcdc;"></div>
<div style="left:1296px;top:800px;width:281px;height:1px;background:#ededed;"></div>
<div style="left:1402px;top:774.6px;width:1px;height:26.0px;background:#ebebeb;"></div>
<div style="left:1489px;top:774.6px;width:1px;height:26.0px;background:#ebebeb;"></div>
<div style="left:1365.38px;top:778.88px;font-size:16px;line-height:19.20px;color:#111;white-space:pre;">5%</div>
<div style="left:1408.50px;top:778.88px;font-size:16px;line-height:19.20px;color:#111;white-space:pre;">4.5355</div>
<div style="left:1495.30px;top:778.88px;font-size:16px;line-height:19.20px;color:#111;white-space:pre;">4.5635</div>
<div style="left:1271px;top:800.6px;width:25px;height:26.5px;background:#dcdcdc;"></div>
<div style="left:1296px;top:826px;width:281px;height:1px;background:#ededed;"></div>
<div style="left:1402px;top:800.6px;width:1px;height:26.0px;background:#ebebeb;"></div>
<div style="left:1489px;top:800.6px;width:1px;height:26.0px;background:#ebebeb;"></div>
<div style="left:1356.48px;top:804.88px;font-size:16px;line-height:19.20px;color:#111;white-space:pre;">10%</div>
<div style="left:1408.50px;top:804.88px;font-size:16px;line-height:19.20px;color:#111;white-space:pre;">5.0109</div>
<div style="left:1495.30px;top:804.88px;font-size:16px;line-height:19.20px;color:#111;white-space:pre;">5.0245</div>
<div style="left:1271px;top:826.6px;width:25px;height:26.5px;background:#dcdcdc;"></div>
<div style="left:1296px;top:852px;width:281px;height:1px;background:#ededed;"></div>
<div style="left:1402px;top:826.6px;width:1px;height:26.0px;background:#ebebeb;"></div>
<div style="left:1489px;top:826.6px;width:1px;height:26.0px;background:#ebebeb;"></div>
<div style="left:1356.48px;top:830.88px;font-size:16px;line-height:19.20px;color:#111;white-space:pre;">15%</div>
<div style="left:1408.50px;top:830.88px;font-size:16px;line-height:19.20px;color:#111;white-space:pre;">5.3254</div>
<div style="left:1495.30px;top:830.88px;font-size:16px;line-height:19.20px;color:#111;white-space:pre;">5.3597</div>
<div style="left:1271px;top:852.6px;width:25px;height:26.5px;background:#dcdcdc;"></div>
<div style="left:1296px;top:878px;width:281px;height:1px;background:#ededed;"></div>
<div style="left:1402px;top:852.6px;width:1px;height:26.0px;background:#ebebeb;"></div>
<div style="left:1489px;top:852.6px;width:1px;height:26.0px;background:#ebebeb;"></div>
<div style="left:1356.48px;top:856.88px;font-size:16px;line-height:19.20px;color:#111;white-space:pre;">20%</div>
<div style="left:1408.50px;top:856.88px;font-size:16px;line-height:19.20px;color:#111;white-space:pre;">5.5889</div>
<div style="left:1495.30px;top:856.88px;font-size:16px;line-height:19.20px;color:#111;white-space:pre;">5.6420</div>
<div style="left:1271px;top:878.6px;width:25px;height:26.5px;background:#dcdcdc;"></div>
<div style="left:1296px;top:904px;width:281px;height:1px;background:#ededed;"></div>
<div style="left:1402px;top:878.6px;width:1px;height:26.0px;background:#ebebeb;"></div>
<div style="left:1489px;top:878.6px;width:1px;height:26.0px;background:#ebebeb;"></div>
<div style="left:1356.48px;top:882.88px;font-size:16px;line-height:19.20px;color:#111;white-space:pre;">25%</div>
<div style="left:1408.50px;top:882.88px;font-size:16px;line-height:19.20px;color:#111;white-space:pre;">5.8705</div>
<div style="left:1495.30px;top:882.88px;font-size:16px;line-height:19.20px;color:#111;white-space:pre;">5.8967</div>
<div style="left:1271px;top:904.6px;width:25px;height:26.5px;background:#dcdcdc;"></div>
<div style="left:1296px;top:930px;width:281px;height:1px;background:#ededed;"></div>
<div style="left:1402px;top:904.6px;width:1px;height:26.0px;background:#ebebeb;"></div>
<div style="left:1489px;top:904.6px;width:1px;height:26.0px;background:#ebebeb;"></div>
<div style="left:1356.48px;top:908.88px;font-size:16px;line-height:19.20px;color:#111;white-space:pre;">30%</div>
<div style="left:1408.50px;top:908.88px;font-size:16px;line-height:19.20px;color:#111;white-space:pre;">6.1320</div>
<div style="left:1495.30px;top:908.88px;font-size:16px;line-height:19.20px;color:#111;white-space:pre;">6.1362</div>
<div style="left:1271px;top:930.6px;width:25px;height:26.5px;background:#dcdcdc;"></div>
<div style="left:1296px;top:956px;width:281px;height:1px;background:#ededed;"></div>
<div style="left:1402px;top:930.6px;width:1px;height:26.0px;background:#ebebeb;"></div>
<div style="left:1489px;top:930.6px;width:1px;height:26.0px;background:#ebebeb;"></div>
<div style="left:1356.48px;top:934.88px;font-size:16px;line-height:19.20px;color:#111;white-space:pre;">35%</div>
<div style="left:1408.50px;top:934.88px;font-size:16px;line-height:19.20px;color:#111;white-space:pre;">6.3381</div>
<div style="left:1495.30px;top:934.88px;font-size:16px;line-height:19.20px;color:#111;white-space:pre;">6.3680</div>
<div style="left:1271px;top:956.6px;width:25px;height:26.5px;background:#dcdcdc;"></div>
<div style="left:1296px;top:982px;width:281px;height:1px;background:#ededed;"></div>
<div style="left:1402px;top:956.6px;width:1px;height:26.0px;background:#ebebeb;"></div>
<div style="left:1489px;top:956.6px;width:1px;height:26.0px;background:#ebebeb;"></div>
<div style="left:1356.48px;top:960.88px;font-size:16px;line-height:19.20px;color:#111;white-space:pre;">45%</div>
<div style="left:1408.50px;top:960.88px;font-size:16px;line-height:19.20px;color:#111;white-space:pre;">6.8675</div>
<div style="left:1495.30px;top:960.88px;font-size:16px;line-height:19.20px;color:#111;white-space:pre;">6.8288</div>
<div style="left:1271px;top:982.6px;width:25px;height:26.5px;background:#dcdcdc;"></div>
<div style="left:1296px;top:1008px;width:281px;height:1px;background:#ededed;"></div>
<div style="left:1402px;top:982.6px;width:1px;height:26.0px;background:#ebebeb;"></div>
<div style="left:1489px;top:982.6px;width:1px;height:26.0px;background:#ebebeb;"></div>
<div style="left:1356.48px;top:986.88px;font-size:16px;line-height:19.20px;color:#111;white-space:pre;">50%</div>
<div style="left:1408.50px;top:986.88px;font-size:16px;line-height:19.20px;color:#111;white-space:pre;">7.0782</div>
<div style="left:1495.30px;top:986.88px;font-size:16px;line-height:19.20px;color:#111;white-space:pre;">7.0662</div>
<div style="left:1271px;top:1008.6px;width:25px;height:26.5px;background:#dcdcdc;"></div>
<div style="left:1296px;top:1034px;width:281px;height:1px;background:#ededed;"></div>
<div style="left:1402px;top:1008.6px;width:1px;height:26.0px;background:#ebebeb;"></div>
<div style="left:1489px;top:1008.6px;width:1px;height:26.0px;background:#ebebeb;"></div>
<div style="left:1356.48px;top:1012.88px;font-size:16px;line-height:19.20px;color:#111;white-space:pre;">55%</div>
<div style="left:1408.50px;top:1012.88px;font-size:16px;line-height:19.20px;color:#111;white-space:pre;">7.3036</div>
<div style="left:1495.30px;top:1012.88px;font-size:16px;line-height:19.20px;color:#111;white-space:pre;">7.3137</div>
<div style="left:1271px;top:1034.6px;width:25px;height:26.5px;background:#dcdcdc;"></div>
<div style="left:1296px;top:1060px;width:281px;height:1px;background:#ededed;"></div>
<div style="left:1402px;top:1034.6px;width:1px;height:26.0px;background:#ebebeb;"></div>
<div style="left:1489px;top:1034.6px;width:1px;height:26.0px;background:#ebebeb;"></div>
<div style="left:1356.48px;top:1038.88px;font-size:16px;line-height:19.20px;color:#111;white-space:pre;">65%</div>
<div style="left:1408.50px;top:1038.88px;font-size:16px;line-height:19.20px;color:#111;white-space:pre;">7.8604</div>
<div style="left:1495.30px;top:1038.88px;font-size:16px;line-height:19.20px;color:#111;white-space:pre;">7.8604</div>
<div style="left:1271px;top:1060.6px;width:25px;height:26.5px;background:#dcdcdc;"></div>
<div style="left:1296px;top:1086px;width:281px;height:1px;background:#ededed;"></div>
<div style="left:1402px;top:1060.6px;width:1px;height:26.0px;background:#ebebeb;"></div>
<div style="left:1489px;top:1060.6px;width:1px;height:26.0px;background:#ebebeb;"></div>
<div style="left:1356.48px;top:1064.88px;font-size:16px;line-height:19.20px;color:#111;white-space:pre;">70%</div>
<div style="left:1408.50px;top:1064.88px;font-size:16px;line-height:19.20px;color:#111;white-space:pre;">8.2571</div>
<div style="left:1495.30px;top:1064.88px;font-size:16px;line-height:19.20px;color:#111;white-space:pre;">8.1744</div>
<div style="left:1271px;top:1086.6px;width:25px;height:26.5px;background:#dcdcdc;"></div>
<div style="left:1296px;top:1112px;width:281px;height:1px;background:#ededed;"></div>
<div style="left:1402px;top:1086.6px;width:1px;height:26.0px;background:#ebebeb;"></div>
<div style="left:1489px;top:1086.6px;width:1px;height:26.0px;background:#ebebeb;"></div>
<div style="left:1356.48px;top:1090.88px;font-size:16px;line-height:19.20px;color:#111;white-space:pre;">75%</div>
<div style="left:1408.50px;top:1090.88px;font-size:16px;line-height:19.20px;color:#111;white-space:pre;">8.6298</div>
<div style="left:1495.30px;top:1090.88px;font-size:16px;line-height:19.20px;color:#111;white-space:pre;">8.5315</div>
<div style="left:1271px;top:1112.6px;width:25px;height:26.5px;background:#dcdcdc;"></div>
<div style="left:1296px;top:1138px;width:281px;height:1px;background:#ededed;"></div>
<div style="left:1402px;top:1112.6px;width:1px;height:26.0px;background:#ebebeb;"></div>
<div style="left:1489px;top:1112.6px;width:1px;height:26.0px;background:#ebebeb;"></div>
<div style="left:1356.48px;top:1116.88px;font-size:16px;line-height:19.20px;color:#111;white-space:pre;">80%</div>
<div style="left:1408.50px;top:1116.88px;font-size:16px;line-height:19.20px;color:#111;white-space:pre;">9.0599</div>
<div style="left:1495.30px;top:1116.88px;font-size:16px;line-height:19.20px;color:#111;white-space:pre;">8.9527</div>
<div style="left:1271px;top:1138.6px;width:25px;height:26.5px;background:#dcdcdc;"></div>
<div style="left:1296px;top:1164px;width:281px;height:1px;background:#ededed;"></div>
<div style="left:1402px;top:1138.6px;width:1px;height:26.0px;background:#ebebeb;"></div>
<div style="left:1489px;top:1138.6px;width:1px;height:26.0px;background:#ebebeb;"></div>
<div style="left:1356.48px;top:1142.88px;font-size:16px;line-height:19.20px;color:#111;white-space:pre;">85%</div>
<div style="left:1408.50px;top:1142.88px;font-size:16px;line-height:19.20px;color:#111;white-space:pre;">9.4918</div>
<div style="left:1495.30px;top:1142.88px;font-size:16px;line-height:19.20px;color:#111;white-space:pre;">9.4776</div>
<div style="left:1271px;top:1164.6px;width:25px;height:26.5px;background:#dcdcdc;"></div>
<div style="left:1296px;top:1190px;width:281px;height:1px;background:#ededed;"></div>
<div style="left:1402px;top:1164.6px;width:1px;height:26.0px;background:#ebebeb;"></div>
<div style="left:1489px;top:1164.6px;width:1px;height:26.0px;background:#ebebeb;"></div>
<div style="left:1356.48px;top:1168.88px;font-size:16px;line-height:19.20px;color:#111;white-space:pre;">90%</div>
<div style="left:1408.50px;top:1168.88px;font-size:16px;line-height:19.20px;color:#111;white-space:pre;">10.1772</div>
<div style="left:1495.30px;top:1168.88px;font-size:16px;line-height:19.20px;color:#111;white-space:pre;">10.1943</div>
<div style="left:1271px;top:1190.6px;width:25px;height:26.5px;background:#dcdcdc;"></div>
<div style="left:1296px;top:1216px;width:281px;height:1px;background:#ededed;"></div>
<div style="left:1402px;top:1190.6px;width:1px;height:26.0px;background:#ebebeb;"></div>
<div style="left:1489px;top:1190.6px;width:1px;height:26.0px;background:#ebebeb;"></div>
<div style="left:1356.48px;top:1194.88px;font-size:16px;line-height:19.20px;color:#111;white-space:pre;">95%</div>
<div style="left:1408.50px;top:1194.88px;font-size:16px;line-height:19.20px;color:#111;white-space:pre;">11.1367</div>
<div style="left:1495.30px;top:1194.88px;font-size:16px;line-height:19.20px;color:#111;white-space:pre;">11.3830</div>
<div style="left:1271px;top:1216.6px;width:25px;height:26.5px;background:#dcdcdc;"></div>
<div style="left:1296px;top:1242px;width:281px;height:1px;background:#ededed;"></div>
<div style="left:1402px;top:1216.6px;width:1px;height:26.0px;background:#ebebeb;"></div>
<div style="left:1489px;top:1216.6px;width:1px;height:26.0px;background:#ebebeb;"></div>
<div style="left:1356.48px;top:1220.88px;font-size:16px;line-height:19.20px;color:#111;white-space:pre;">99%</div>
<div style="left:1408.50px;top:1220.88px;font-size:16px;line-height:19.20px;color:#111;white-space:pre;">13.7576</div>
<div style="left:1495.30px;top:1220.88px;font-size:16px;line-height:19.20px;color:#111;white-space:pre;">14.0715</div>
<div style="left:561.00px;top:1251.58px;font-size:16px;line-height:19.20px;color:#000;white-space:pre;transform:scaleX(1.0223);transform-origin:0 0;">Number of bins :</div>
<div style="left:686px;top:1248px;width:108px;height:28px;background:#fff;border:1px solid #c9c9c9;box-sizing:border-box;"></div>
<div style="left:693.00px;top:1251.58px;font-size:16px;line-height:19.20px;color:#000;white-space:pre;transform:scaleX(0.9552);transform-origin:0 0;">31</div>
<div style="left:558.00px;top:1288.58px;font-size:16px;line-height:19.20px;color:#000;white-space:pre;transform:scaleX(1.0171);transform-origin:0 0;">Number of lines :</div>
<div style="left:686px;top:1285px;width:108px;height:29px;background:#fff;border:1px solid #a9a9a9;box-sizing:border-box;"></div>
<div style="left:815px;top:1253px;width:18px;height:18px;background:#fff;border:1px solid #9a9a9a;box-sizing:border-box;"></div>
<div style="left:837.50px;top:1252.58px;font-size:16px;line-height:19.20px;color:#a3a3a3;white-space:pre;transform:scaleX(0.9852);transform-origin:0 0;">Variable is discrete</div>
<div style="left:1028px;top:1278px;width:116px;height:33px;background:#fdfdfd;border:1px solid #a3a3a3;box-sizing:border-box;"></div>
<div style="left:1083.00px;top:1285.08px;font-size:16px;line-height:19.20px;color:#000;white-space:pre;">Help</div>
<svg style="left:1036px;top:1283px;" width="23" height="23" viewBox="0 0 23 23"><circle cx="11.5" cy="11.5" r="10.5" fill="#3d84c6"/><text x="11.5" y="17.5" text-anchor="middle" font-family="Liberation Sans" font-weight="bold" font-size="17" fill="#fff">?</text></svg>
<div style="left:1150px;top:1278px;width:116px;height:33px;background:#fdfdfd;border:1px solid #a3a3a3;box-sizing:border-box;"></div>
<div style="left:1184.00px;top:1285.08px;font-size:16px;line-height:19.20px;color:#000;white-space:pre;">Report</div>
<div style="left:1269px;top:1278px;width:194px;height:33px;background:#fdfdfd;border:1px solid #a3a3a3;box-sizing:border-box;"></div>
<div style="left:1296.50px;top:1285.08px;font-size:16px;line-height:19.20px;color:#000;white-space:pre;">Insert to Worksheet</div>
<div style="left:1465px;top:1278px;width:115px;height:33px;background:#fdfdfd;border:1px solid #a3a3a3;box-sizing:border-box;"></div>
<div style="left:1502.50px;top:1285.08px;font-size:16px;line-height:19.20px;color:#000;white-space:pre;transform:scaleX(0.9778);transform-origin:0 0;">Close</div>
</body></html>
